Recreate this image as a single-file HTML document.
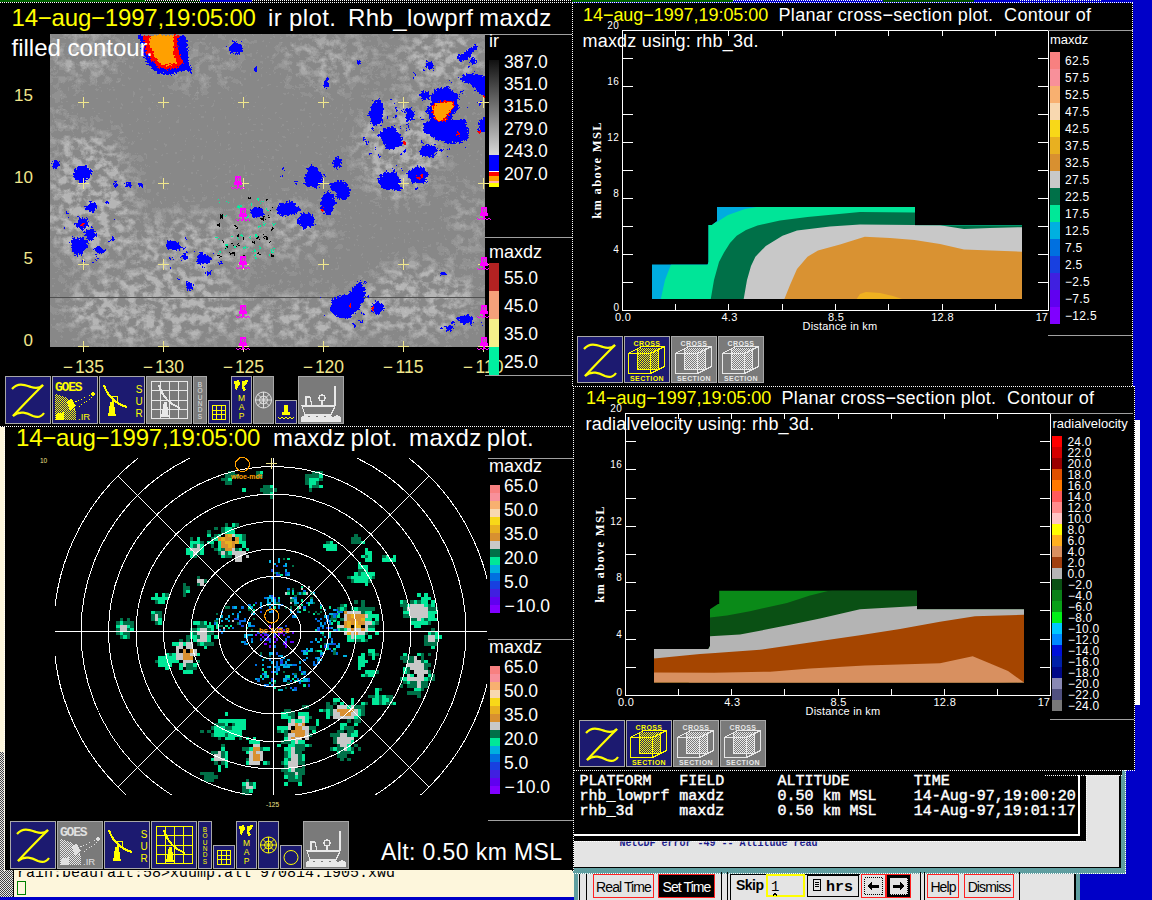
<!DOCTYPE html>
<html><head><meta charset="utf-8"><style>
html,body{margin:0;padding:0;background:#0000c8;overflow:hidden;width:1152px;height:900px}
svg{display:block}
text{white-space:pre}
</style></head><body>
<svg width="1152" height="900" viewBox="0 0 1152 900" shape-rendering="crispEdges">
<rect x="0" y="0" width="1152" height="900" fill="#0000c8" />
<rect x="0" y="0" width="573" height="427" fill="#000" />
<rect x="0" y="0" width="145" height="2" fill="#006400" />
<rect x="200" y="0" width="52" height="2" fill="#0000d0" />
<line x1="145" y1="0.5" x2="200" y2="0.5" stroke="#fff" stroke-width="1" stroke-dasharray="1 1"/>
<line x1="145" y1="1.5" x2="200" y2="1.5" stroke="#006400" stroke-width="1" stroke-dasharray="1 1"/>
<line x1="252" y1="0.5" x2="571" y2="0.5" stroke="#fff" stroke-width="1" stroke-dasharray="1 1"/>
<rect x="572" y="0" width="161" height="2" fill="#006400" />
<line x1="733" y1="0.5" x2="883" y2="0.5" stroke="#fff" stroke-width="1" stroke-dasharray="1 1"/>
<rect x="883" y="0" width="91" height="2" fill="#005000" />
<rect x="974" y="0" width="46" height="2" fill="#0000d0" />
<line x1="1020" y1="0.5" x2="1101" y2="0.5" stroke="#fff" stroke-width="1" stroke-dasharray="1 1"/>
<line x1="0" y1="2.5" x2="1133" y2="2.5" stroke="#fff" stroke-width="1" stroke-dasharray="1 1"/>
<rect x="573" y="3" width="560" height="383" fill="#000" />
<line x1="572.5" y1="3" x2="572.5" y2="426" stroke="#fff" stroke-width="1" stroke-dasharray="1 1"/>
<line x1="1132.5" y1="3" x2="1132.5" y2="386" stroke="#fff" stroke-width="1" stroke-dasharray="1 1"/>
<rect x="574" y="386" width="561" height="384" fill="#000" />
<line x1="573" y1="386.5" x2="1134" y2="386.5" stroke="#fff" stroke-width="1" stroke-dasharray="1 1"/>
<line x1="573.5" y1="386" x2="573.5" y2="770" stroke="#fff" stroke-width="1" stroke-dasharray="1 1"/>
<line x1="1134.5" y1="386" x2="1134.5" y2="770" stroke="#fff" stroke-width="1" stroke-dasharray="1 1"/>
<rect x="1135" y="420" width="5" height="285" fill="#fff" />
<rect x="5" y="427" width="568" height="444" fill="#000" />
<line x1="0" y1="426.5" x2="573" y2="426.5" stroke="#fff" stroke-width="1" stroke-dasharray="1 1"/>
<line x1="572.5" y1="426" x2="572.5" y2="870" stroke="#fff" stroke-width="1" stroke-dasharray="1 1"/>
<rect x="0" y="427" width="5" height="444" fill="#fdf6dc" />
<rect x="0" y="870" width="574" height="27" fill="#fdf6dc" />
<rect x="0" y="870" width="13" height="27" fill="#9a9a9a" />
<line x1="13.5" y1="870" x2="13.5" y2="897" stroke="#000" stroke-width="1" />
<rect x="0" y="897" width="574" height="3" fill="#0000c8" />
<rect x="573" y="770" width="553" height="104" fill="#5f9ea0" />
<rect x="573" y="770" width="548" height="98" fill="#000" />
<rect x="574" y="770" width="545" height="97" fill="#e4e4e4" />
<rect x="574" y="770" width="512" height="71" fill="#000" />
<line x1="574" y1="835" x2="1080" y2="835" stroke="#fff" stroke-width="2" />
<line x1="1079" y1="770" x2="1079" y2="836" stroke="#fff" stroke-width="2" />
<rect x="1045" y="770" width="77" height="5" fill="#000" />
<line x1="1045" y1="775.5" x2="1122" y2="775.5" stroke="#fff" stroke-width="1" stroke-dasharray="1 1"/>
<line x1="574" y1="770.5" x2="1135" y2="770.5" stroke="#fff" stroke-width="1" stroke-dasharray="1 1"/>
<line x1="1086.5" y1="775" x2="1086.5" y2="841" stroke="#fff" stroke-width="1" stroke-dasharray="1 1"/>
<line x1="574" y1="841.5" x2="1086" y2="841.5" stroke="#fff" stroke-width="1" stroke-dasharray="1 1"/>
<line x1="1125.5" y1="770" x2="1125.5" y2="873" stroke="#fff" stroke-width="1" stroke-dasharray="1 1"/>
<line x1="573" y1="873.5" x2="1126" y2="873.5" stroke="#fff" stroke-width="1" stroke-dasharray="1 1"/>
<rect x="574" y="874" width="506" height="26" fill="#e4e4e4" />
<rect x="574" y="874" width="4" height="26" fill="#5f9ea0" />
<line x1="579.5" y1="874" x2="579.5" y2="900" stroke="#000" stroke-width="1" />
<rect x="1074" y="874" width="2" height="26" fill="#000" />
<rect x="1076" y="874" width="4" height="26" fill="#5f9ea0" />
<rect x="572" y="386" width="2" height="485" fill="#000" />
<line x1="573.5" y1="386" x2="573.5" y2="871" stroke="#fff" stroke-width="1" stroke-dasharray="1 1"/>
<text x="11.5" y="26" font-family="Liberation Sans" font-size="24" font-weight="normal" fill="#ffff00" letter-spacing="-0.2">14−aug−1997,19:05:00</text>
<text x="268" y="26" font-family="Liberation Sans" font-size="24" font-weight="normal" fill="#fff" letter-spacing="0.4">ir</text>
<text x="289" y="26" font-family="Liberation Sans" font-size="24" font-weight="normal" fill="#fff" letter-spacing="0.4">plot.</text>
<text x="348" y="26" font-family="Liberation Sans" font-size="24" font-weight="normal" fill="#fff" letter-spacing="0.4">Rhb_lowprf</text>
<text x="479" y="26" font-family="Liberation Sans" font-size="24" font-weight="normal" fill="#fff" letter-spacing="0.4">maxdz</text>
<defs>
<filter id="cloud" x="50" y="34" width="435" height="313" filterUnits="userSpaceOnUse">
<feGaussianBlur in="SourceGraphic" stdDeviation="14" result="blur"/>
<feTurbulence type="fractalNoise" baseFrequency="0.11 0.13" numOctaves="4" seed="23" result="noise"/>
<feColorMatrix in="noise" type="matrix" values="0 0 0 0 1  0 0 0 0 1  0 0 0 0 1  2.6 0 0 0 -0.95" result="na"/>
<feComposite in="na" in2="blur" operator="arithmetic" k1="1.5" k2="0" k3="0" k4="0" result="m"/>
<feComponentTransfer in="m"><feFuncA type="discrete" tableValues="0 0.08 0.14 0.2 0.26 0.32 0.38"/></feComponentTransfer>
</filter>
<filter id="fine" x="50" y="34" width="435" height="313" filterUnits="userSpaceOnUse">
<feTurbulence type="fractalNoise" baseFrequency="0.25" numOctaves="2" seed="4" result="n"/>
<feColorMatrix in="n" type="matrix" values="0 0 0 0 1  0 0 0 0 1  0 0 0 0 1  1.2 0 0 0 -0.52" />
<feComponentTransfer><feFuncA type="discrete" tableValues="0 0.08 0.14"/></feComponentTransfer>
</filter>
</defs>
<rect x="50" y="34" width="435" height="313" fill="#888888" />
<g filter="url(#cloud)">
<ellipse cx="85" cy="55" rx="40" ry="25" fill="#fff" fill-opacity="0.7"/>
<ellipse cx="200" cy="70" rx="40" ry="20" fill="#fff" fill-opacity="0.5"/>
<ellipse cx="330" cy="60" rx="50" ry="30" fill="#fff" fill-opacity="0.6"/>
<ellipse cx="440" cy="60" rx="45" ry="30" fill="#fff" fill-opacity="0.9"/>
<ellipse cx="400" cy="150" rx="45" ry="50" fill="#fff" fill-opacity="0.9"/>
<ellipse cx="90" cy="200" rx="45" ry="70" fill="#fff" fill-opacity="0.9"/>
<ellipse cx="190" cy="250" rx="60" ry="40" fill="#fff" fill-opacity="0.7"/>
<ellipse cx="290" cy="230" rx="50" ry="30" fill="#fff" fill-opacity="0.6"/>
<ellipse cx="150" cy="310" rx="90" ry="35" fill="#fff" fill-opacity="0.9"/>
<ellipse cx="300" cy="320" rx="80" ry="25" fill="#fff" fill-opacity="0.8"/>
<ellipse cx="420" cy="300" rx="60" ry="40" fill="#fff" fill-opacity="0.8"/>
<ellipse cx="470" cy="220" rx="20" ry="40" fill="#fff" fill-opacity="0.5"/>
<ellipse cx="240" cy="40" rx="20" ry="10" fill="#fff" fill-opacity="0.4"/>
<ellipse cx="60" cy="120" rx="15" ry="30" fill="#fff" fill-opacity="0.4"/>
</g>
<rect x="50" y="34" width="435" height="313" fill="#fff" filter="url(#fine)"/>
<line x1="50" y1="297.5" x2="485" y2="297.5" stroke="#505050" stroke-width="1" />
<filter id="rag" x="-5%" y="-5%" width="110%" height="110%"><feTurbulence type="turbulence" baseFrequency="0.35" numOctaves="2" seed="9" result="t"/><feDisplacementMap in="SourceGraphic" in2="t" scale="5" xChannelSelector="R" yChannelSelector="G"/></filter>
<g clip-path="url(#irclip)"><g filter="url(#rag)">
<clipPath id="irclip"><rect x="50" y="34" width="435" height="313"/></clipPath>
<polygon points="136.9,34.0 183.7,34.0 187.5,45.5 186.6,56.9 191.3,72.2 183.7,68.4 168.4,74.1 157.0,72.2 147.4,64.6 141.7,51.2" fill="#0000ff" />
<polygon points="141.7,34.0 177.0,34.0 176.0,45.5 181.8,62.6 172.2,68.4 157.0,66.5 145.5,53.1" fill="#ff0000" />
<polygon points="149.3,34.0 172.2,34.0 172.2,53.1 176.0,62.6 166.5,64.6 157.0,60.7 149.3,45.5" fill="#ffa000" />
<polygon points="430.2,92.8 437.2,87.2 447.0,85.8 451.2,90.0 458.2,92.8 455.4,99.8 458.2,106.8 452.6,112.4 449.8,118.0 463.8,118.0 466.6,126.4 466.6,137.6 461.0,141.8 447.0,141.8 433.0,137.6 423.2,130.6 423.2,122.2 428.8,118.0 424.6,109.6 430.2,101.2" fill="#0000ff" />
<polygon points="458.2,77.4 466.6,71.8 475.0,73.2 486.0,76.0 486.0,95.6 477.8,92.8 472.2,85.8 463.8,81.6" fill="#0000ff" />
<polygon points="455.4,55.0 463.8,50.8 473.6,43.8 476.4,45.2 470.8,52.2 466.6,57.8 458.2,60.6" fill="#0000ff" />
<polygon points="477.8,118.0 486.0,116.6 486.0,132.0 477.8,130.6" fill="#0000ff" />
<polygon points="358.6,278.6 364.3,292.0 362.4,299.6 356.7,309.1 349.0,316.8 337.6,316.8 329.0,311.0 330.0,299.6 337.6,294.8 349.0,292.0 352.9,284.3" fill="#0000ff" />
<polygon points="242.2,47.0 241.2,49.3 240.2,51.9 236.9,53.3 233.4,52.2 229.7,52.0 228.6,49.3 226.9,47.0 229.2,44.9 230.8,43.1 232.8,39.9 236.5,42.2 240.7,41.7 240.9,44.9" fill="#0000ff" shape-rendering="crispEdges"/>
<polygon points="257.2,67.5 257.1,68.8 256.0,69.0 255.4,69.5 254.5,70.1 253.5,69.8 253.2,68.6 252.9,67.5 253.0,66.3 253.8,65.6 254.5,64.9 255.4,65.2 256.3,65.4 256.6,66.6" fill="#0000ff" shape-rendering="crispEdges"/>
<polygon points="58.6,163.5 57.9,165.6 56.2,166.3 55.3,168.1 53.8,167.6 52.1,167.3 50.9,165.7 50.9,163.5 50.9,161.2 52.7,160.5 53.6,158.7 55.2,159.6 56.8,159.7 57.8,161.4" fill="#0000ff" shape-rendering="crispEdges"/>
<polygon points="90.8,172.0 87.7,175.2 86.2,178.5 83.2,181.6 78.6,182.4 75.8,178.5 72.2,176.3 72.1,172.0 73.9,168.6 76.0,165.7 79.1,163.7 82.8,163.9 85.6,166.2 88.9,168.2" fill="#0000ff" shape-rendering="crispEdges"/>
<polygon points="117.3,183.5 116.6,184.5 116.0,185.1 115.5,186.3 114.6,185.5 113.8,185.5 113.4,184.5 113.0,183.5 113.4,182.5 113.6,181.4 114.6,181.1 115.4,181.3 116.4,181.3 116.5,182.6" fill="#0000ff" shape-rendering="crispEdges"/>
<polygon points="130.2,183.5 130.9,184.7 129.9,185.8 127.7,185.5 126.0,186.4 124.5,185.5 124.1,184.4 123.6,183.5 123.8,182.5 125.0,181.9 126.3,181.5 128.0,180.8 129.7,181.4 130.0,182.6" fill="#0000ff" shape-rendering="crispEdges"/>
<polygon points="143.2,183.5 142.2,184.4 141.7,185.3 140.8,186.4 139.5,185.4 138.2,185.4 136.8,184.8 137.1,183.5 137.4,182.4 137.9,181.3 139.4,181.1 140.5,181.6 141.6,181.8 142.5,182.5" fill="#0000ff" shape-rendering="crispEdges"/>
<polygon points="359.6,61.0 359.8,61.9 358.9,62.4 358.0,62.7 356.9,63.3 356.0,62.5 355.4,61.8 354.5,61.0 355.0,60.0 355.8,59.3 356.9,58.9 358.0,59.2 358.9,59.6 359.3,60.3" fill="#0000ff" shape-rendering="crispEdges"/>
<polygon points="327.5,81.5 327.2,83.1 327.1,85.4 325.7,86.2 324.2,86.7 323.1,85.2 321.9,83.7 322.6,81.5 322.0,79.3 323.4,78.5 324.3,76.8 325.7,76.6 327.2,77.4 327.2,79.9" fill="#0000ff" shape-rendering="crispEdges"/>
<polygon points="431.7,65.5 431.2,67.2 430.9,69.4 429.2,69.5 427.8,69.5 426.3,69.0 426.0,67.1 425.4,65.5 424.7,63.1 425.9,61.3 427.8,61.5 429.4,60.6 430.2,62.7 431.8,63.4" fill="#0000ff" shape-rendering="crispEdges"/>
<polygon points="429.4,94.0 427.8,95.4 427.6,97.6 425.1,97.8 422.6,98.7 420.9,97.2 419.7,95.7 419.2,94.0 419.9,92.4 420.3,90.3 422.8,89.7 424.9,90.7 426.9,91.1 428.0,92.5" fill="#0000ff" shape-rendering="crispEdges"/>
<polygon points="475.1,59.5 474.6,61.0 474.2,62.7 472.8,63.4 471.3,63.3 470.1,62.3 468.9,61.2 468.6,59.5 468.9,57.7 470.1,56.7 471.3,55.9 472.5,56.8 473.7,57.1 474.2,58.3" fill="#0000ff" shape-rendering="crispEdges"/>
<polygon points="432.9,65.0 431.9,66.1 431.8,67.7 430.0,68.1 428.2,67.5 426.6,67.3 426.1,66.0 425.7,65.0 425.3,63.7 426.8,62.9 428.0,61.9 430.1,61.5 431.5,62.7 431.8,64.0" fill="#0000ff" shape-rendering="crispEdges"/>
<polygon points="437.5,149.5 434.9,151.3 434.1,153.6 430.7,154.2 427.7,153.2 424.4,153.2 422.6,151.5 422.0,149.5 423.5,147.8 424.7,146.0 427.5,145.3 430.3,145.9 433.3,146.0 435.6,147.5" fill="#0000ff" shape-rendering="crispEdges"/>
<polygon points="413.3,112.5 412.0,114.5 411.4,116.6 410.1,119.0 408.2,117.3 406.7,116.5 404.8,115.3 404.9,112.5 405.8,110.4 407.0,109.1 408.3,108.2 409.8,107.9 411.1,108.8 412.7,110.0" fill="#0000ff" shape-rendering="crispEdges"/>
<polygon points="381.3,111.5 381.6,118.1 380.1,124.4 376.7,122.9 374.1,124.7 371.3,123.4 368.8,118.7 367.9,111.5 369.8,105.4 371.8,101.1 374.2,99.1 377.1,96.1 379.7,99.9 382.6,103.9" fill="#0000ff" shape-rendering="crispEdges"/>
<polygon points="401.8,138.0 400.6,144.1 395.5,146.2 391.9,148.2 388.1,148.0 384.5,146.3 382.8,142.1 379.2,138.0 379.2,131.7 382.9,127.3 387.7,126.0 392.6,124.3 395.2,130.2 399.1,132.7" fill="#0000ff" shape-rendering="crispEdges"/>
<polygon points="412.1,112.5 411.6,114.9 410.2,116.3 409.0,118.4 406.9,118.8 405.1,117.4 404.3,115.0 404.8,112.5 404.0,109.9 405.3,107.9 407.1,107.0 409.0,106.3 410.7,107.8 410.8,110.6" fill="#0000ff" shape-rendering="crispEdges"/>
<polygon points="435.1,150.0 434.1,152.3 433.7,155.6 428.9,155.6 425.2,155.3 420.8,155.2 418.3,152.8 418.2,150.0 420.1,147.8 420.2,144.3 424.6,142.9 429.1,143.8 433.6,144.5 434.3,147.6" fill="#0000ff" shape-rendering="crispEdges"/>
<polygon points="427.5,173.5 425.5,177.4 422.8,180.4 419.1,182.3 415.1,181.5 409.9,181.9 408.5,177.4 404.9,173.5 408.0,169.4 411.7,167.2 414.9,164.7 418.8,166.1 423.7,165.5 425.5,169.6" fill="#0000ff" shape-rendering="crispEdges"/>
<polygon points="399.1,179.5 398.0,184.1 394.9,187.5 390.4,188.0 386.3,189.2 381.5,188.3 378.8,184.2 376.6,179.5 378.4,174.6 382.6,172.0 386.4,170.4 390.4,171.0 395.8,170.4 397.4,175.2" fill="#0000ff" shape-rendering="crispEdges"/>
<polygon points="321.7,175.5 320.7,181.5 316.7,183.9 313.6,185.7 310.4,185.5 306.5,185.4 303.7,181.3 303.2,175.5 305.6,171.0 306.8,166.2 310.2,164.4 313.8,163.9 316.5,167.4 318.6,170.9" fill="#0000ff" shape-rendering="crispEdges"/>
<polygon points="347.3,185.5 345.9,188.2 343.2,190.2 340.1,192.2 336.3,190.8 333.0,190.1 329.1,188.6 328.6,185.5 328.3,182.1 332.5,180.5 336.1,179.6 339.8,180.0 344.1,180.0 345.5,182.9" fill="#0000ff" shape-rendering="crispEdges"/>
<polygon points="340.5,161.5 339.8,164.4 339.0,167.5 336.8,167.1 335.2,167.1 333.1,167.3 332.0,164.6 331.6,161.5 332.0,158.4 333.8,157.0 335.2,155.6 336.8,155.6 338.4,156.7 340.2,158.2" fill="#0000ff" shape-rendering="crispEdges"/>
<polygon points="95.3,206.0 94.6,207.8 93.1,209.3 91.4,211.1 88.7,210.9 86.8,209.3 83.7,208.5 84.6,206.0 85.2,204.1 87.0,202.8 88.4,200.1 91.4,200.8 94.4,201.4 95.5,203.8" fill="#0000ff" shape-rendering="crispEdges"/>
<polygon points="87.8,222.0 87.5,225.1 83.9,225.7 82.6,229.1 79.5,228.4 77.5,226.3 74.8,225.0 74.2,222.0 76.5,219.8 77.3,217.4 79.9,217.2 82.3,216.4 85.2,216.8 86.5,219.4" fill="#0000ff" shape-rendering="crispEdges"/>
<polygon points="95.1,232.5 95.4,235.3 92.9,237.0 90.6,238.8 87.5,238.6 85.0,237.1 84.4,234.5 83.7,232.5 84.1,230.4 85.1,228.1 87.9,228.2 90.4,226.8 92.4,228.6 94.1,230.3" fill="#0000ff" shape-rendering="crispEdges"/>
<polygon points="87.3,244.5 85.1,247.7 82.8,250.1 80.3,253.9 76.0,252.9 72.5,251.0 69.6,248.3 69.8,244.5 69.4,240.6 71.2,236.4 76.3,237.3 80.1,235.9 83.6,237.9 87.0,240.4" fill="#0000ff" shape-rendering="crispEdges"/>
<polygon points="101.0,248.5 101.9,250.2 100.2,251.2 98.6,252.4 96.6,251.7 95.0,251.0 94.3,249.7 92.5,248.5 94.0,247.2 94.9,245.9 96.5,245.0 98.6,244.6 100.5,245.6 101.1,247.2" fill="#0000ff" shape-rendering="crispEdges"/>
<polygon points="180.1,244.5 179.6,246.5 177.9,248.5 174.4,249.5 171.2,248.0 167.1,248.6 164.7,246.8 165.0,244.5 164.9,242.3 167.0,240.3 170.7,239.8 174.1,240.2 176.7,241.3 178.3,242.8" fill="#0000ff" shape-rendering="crispEdges"/>
<polygon points="186.3,255.5 186.0,256.7 186.0,258.7 184.2,258.7 182.7,258.9 181.5,258.0 180.1,257.1 179.5,255.5 180.6,254.1 181.4,252.9 182.7,251.9 184.2,252.3 186.0,252.3 186.6,254.0" fill="#0000ff" shape-rendering="crispEdges"/>
<polygon points="210.8,257.5 208.8,259.4 208.2,262.0 204.5,261.9 201.4,262.3 197.5,262.2 195.2,260.1 195.9,257.5 195.8,255.1 197.9,253.1 201.5,252.8 204.4,253.2 207.1,253.9 209.1,255.5" fill="#0000ff" shape-rendering="crispEdges"/>
<polygon points="210.1,272.0 210.3,273.6 209.1,274.7 207.7,274.9 206.3,274.9 205.2,274.2 204.6,273.2 204.4,272.0 204.6,270.9 205.4,270.0 206.4,269.5 207.6,269.5 208.7,269.8 209.9,270.6" fill="#0000ff" shape-rendering="crispEdges"/>
<polygon points="191.2,285.0 191.4,286.6 190.3,287.9 189.0,289.2 186.9,289.7 185.5,288.1 184.8,286.5 184.8,285.0 184.8,283.5 185.1,281.4 187.1,281.3 189.0,280.8 190.6,281.7 192.1,283.0" fill="#0000ff" shape-rendering="crispEdges"/>
<polygon points="263.3,211.5 262.6,213.9 259.5,215.0 257.1,216.4 253.9,216.4 251.4,215.1 250.3,213.2 249.2,211.5 249.2,209.4 250.8,207.4 253.8,206.3 257.2,206.3 260.0,207.6 261.8,209.4" fill="#0000ff" shape-rendering="crispEdges"/>
<polygon points="300.5,207.5 297.8,210.6 293.7,212.6 288.9,213.5 283.6,214.7 277.9,213.6 276.4,210.3 275.3,207.5 276.7,204.8 278.6,201.9 284.2,201.9 289.6,199.9 293.7,202.4 294.7,205.3" fill="#0000ff" shape-rendering="crispEdges"/>
<polygon points="313.6,218.5 313.1,222.7 310.7,226.3 306.1,225.7 302.2,228.4 299.5,224.8 296.2,222.5 296.4,218.5 297.9,215.3 299.5,212.2 303.0,211.8 306.0,211.9 309.9,211.7 311.4,215.2" fill="#0000ff" shape-rendering="crispEdges"/>
<polygon points="334.8,201.0 333.2,205.4 331.2,208.4 329.4,214.0 325.6,214.0 322.4,211.3 320.2,206.6 320.1,201.0 320.1,195.3 323.6,193.2 325.9,189.8 328.9,191.3 331.4,193.2 332.8,196.9" fill="#0000ff" shape-rendering="crispEdges"/>
<polygon points="347.5,192.0 348.4,195.1 345.5,196.7 343.4,199.6 339.9,198.4 337.3,197.0 334.3,195.2 334.8,192.0 333.7,188.5 335.9,185.5 339.7,184.6 343.1,185.3 345.5,187.3 349.7,188.3" fill="#0000ff" shape-rendering="crispEdges"/>
<polygon points="402.0,187.5 400.4,188.4 399.5,189.3 397.4,190.0 394.9,189.5 392.8,189.2 390.0,188.7 389.3,187.5 390.0,186.3 391.6,185.2 394.5,184.7 397.6,184.6 399.5,185.7 402.3,186.2" fill="#0000ff" shape-rendering="crispEdges"/>
<polygon points="383.2,306.0 382.3,308.6 380.5,310.6 378.1,312.7 374.9,312.6 372.7,310.4 369.5,309.1 369.7,306.0 370.8,303.5 373.0,302.0 375.0,299.8 377.8,300.7 380.1,301.8 381.3,303.9" fill="#0000ff" shape-rendering="crispEdges"/>
<polygon points="471.7,318.0 472.4,320.5 469.1,322.0 465.4,321.8 461.8,323.9 459.9,321.2 456.8,320.2 456.2,318.0 457.0,315.9 458.2,313.5 462.6,314.1 465.6,313.7 468.1,314.8 470.9,315.9" fill="#0000ff" shape-rendering="crispEdges"/>
<polygon points="451.7,327.0 451.2,328.2 451.0,329.9 448.7,329.5 447.3,329.3 445.2,329.6 444.4,328.3 443.8,327.0 444.1,325.6 445.5,324.6 446.9,323.5 448.9,323.9 451.0,324.2 451.9,325.6" fill="#0000ff" shape-rendering="crispEdges"/>
<polygon points="445.3,272.5 445.4,273.1 444.4,273.6 442.8,273.8 441.2,273.9 439.2,273.8 438.3,273.2 437.7,272.5 438.1,271.8 439.9,271.5 441.0,270.8 442.9,271.0 444.2,271.5 446.4,271.7" fill="#0000ff" shape-rendering="crispEdges"/>
<rect x="449" y="80" width="2" height="2" fill="#0000ff" />
<rect x="447" y="93" width="3" height="2" fill="#0000ff" />
<rect x="464" y="145" width="1" height="2" fill="#0000ff" />
<rect x="488" y="120" width="2" height="2" fill="#0000ff" />
<rect x="394" y="108" width="2" height="2" fill="#0000ff" />
<rect x="434" y="125" width="2" height="3" fill="#0000ff" />
<rect x="446" y="133" width="1" height="2" fill="#0000ff" />
<rect x="425" y="61" width="1" height="1" fill="#0000ff" />
<rect x="466" y="64" width="2" height="2" fill="#0000ff" />
<rect x="449" y="96" width="3" height="1" fill="#0000ff" />
<rect x="478" y="86" width="1" height="2" fill="#0000ff" />
<rect x="399" y="126" width="1" height="2" fill="#0000ff" />
<rect x="451" y="105" width="3" height="2" fill="#0000ff" />
<rect x="447" y="147" width="2" height="3" fill="#0000ff" />
<rect x="489" y="114" width="1" height="3" fill="#0000ff" />
<rect x="411" y="75" width="3" height="1" fill="#0000ff" />
<rect x="439" y="149" width="3" height="1" fill="#0000ff" />
<rect x="413" y="70" width="1" height="2" fill="#0000ff" />
<rect x="435" y="126" width="3" height="2" fill="#0000ff" />
<rect x="478" y="88" width="1" height="1" fill="#0000ff" />
<rect x="445" y="90" width="1" height="1" fill="#0000ff" />
<rect x="443" y="155" width="3" height="1" fill="#0000ff" />
<rect x="472" y="69" width="1" height="2" fill="#0000ff" />
<rect x="442" y="135" width="1" height="2" fill="#0000ff" />
<rect x="444" y="117" width="2" height="3" fill="#0000ff" />
<rect x="477" y="101" width="3" height="3" fill="#0000ff" />
<rect x="401" y="108" width="1" height="3" fill="#0000ff" />
<rect x="420" y="89" width="2" height="2" fill="#0000ff" />
<rect x="419" y="117" width="3" height="1" fill="#0000ff" />
<rect x="482" y="120" width="1" height="1" fill="#0000ff" />
<rect x="431" y="95" width="2" height="1" fill="#0000ff" />
<rect x="444" y="88" width="3" height="2" fill="#0000ff" />
<rect x="406" y="119" width="3" height="2" fill="#0000ff" />
<rect x="469" y="79" width="2" height="2" fill="#0000ff" />
<rect x="471" y="71" width="2" height="2" fill="#0000ff" />
<rect x="478" y="85" width="2" height="3" fill="#0000ff" />
<rect x="484" y="105" width="3" height="3" fill="#0000ff" />
<rect x="465" y="105" width="2" height="1" fill="#0000ff" />
<rect x="438" y="127" width="2" height="2" fill="#0000ff" />
<rect x="478" y="90" width="2" height="1" fill="#0000ff" />
<rect x="394" y="101" width="1" height="2" fill="#0000ff" />
<rect x="437" y="132" width="2" height="1" fill="#0000ff" />
<rect x="421" y="68" width="3" height="1" fill="#0000ff" />
<rect x="460" y="89" width="2" height="3" fill="#0000ff" />
<rect x="414" y="72" width="1" height="1" fill="#0000ff" />
<rect x="364" y="140" width="3" height="3" fill="#0000ff" />
<rect x="395" y="105" width="1" height="3" fill="#0000ff" />
<rect x="395" y="130" width="2" height="1" fill="#0000ff" />
<rect x="411" y="117" width="2" height="2" fill="#0000ff" />
<rect x="372" y="106" width="1" height="1" fill="#0000ff" />
<rect x="419" y="140" width="3" height="1" fill="#0000ff" />
<rect x="399" y="152" width="2" height="2" fill="#0000ff" />
<rect x="377" y="133" width="3" height="3" fill="#0000ff" />
<rect x="388" y="97" width="2" height="3" fill="#0000ff" />
<rect x="385" y="115" width="2" height="2" fill="#0000ff" />
<rect x="377" y="154" width="2" height="2" fill="#0000ff" />
<rect x="393" y="114" width="2" height="2" fill="#0000ff" />
<rect x="406" y="122" width="2" height="2" fill="#0000ff" />
<rect x="370" y="126" width="2" height="3" fill="#0000ff" />
<rect x="392" y="164" width="3" height="1" fill="#0000ff" />
<rect x="388" y="144" width="1" height="2" fill="#0000ff" />
<rect x="373" y="119" width="3" height="3" fill="#0000ff" />
<rect x="409" y="108" width="3" height="2" fill="#0000ff" />
<rect x="362" y="136" width="2" height="3" fill="#0000ff" />
<rect x="373" y="147" width="2" height="1" fill="#0000ff" />
<rect x="406" y="126" width="2" height="3" fill="#0000ff" />
<rect x="370" y="128" width="1" height="1" fill="#0000ff" />
<rect x="368" y="152" width="2" height="2" fill="#0000ff" />
<rect x="367" y="111" width="2" height="2" fill="#0000ff" />
<rect x="402" y="149" width="2" height="2" fill="#0000ff" />
<rect x="107" y="239" width="2" height="2" fill="#0000ff" />
<rect x="112" y="218" width="2" height="2" fill="#0000ff" />
<rect x="94" y="253" width="1" height="3" fill="#0000ff" />
<rect x="67" y="215" width="3" height="2" fill="#0000ff" />
<rect x="92" y="260" width="1" height="3" fill="#0000ff" />
<rect x="108" y="255" width="1" height="1" fill="#0000ff" />
<rect x="110" y="236" width="3" height="3" fill="#0000ff" />
<rect x="81" y="259" width="2" height="2" fill="#0000ff" />
<rect x="62" y="226" width="1" height="2" fill="#0000ff" />
<rect x="95" y="257" width="2" height="2" fill="#0000ff" />
<rect x="75" y="248" width="1" height="2" fill="#0000ff" />
<rect x="72" y="250" width="3" height="2" fill="#0000ff" />
<rect x="101" y="248" width="3" height="3" fill="#0000ff" />
<rect x="77" y="223" width="2" height="1" fill="#0000ff" />
<rect x="76" y="215" width="2" height="2" fill="#0000ff" />
<rect x="75" y="254" width="2" height="2" fill="#0000ff" />
<rect x="89" y="226" width="1" height="2" fill="#0000ff" />
<rect x="88" y="199" width="1" height="3" fill="#0000ff" />
<rect x="104" y="200" width="3" height="2" fill="#0000ff" />
<rect x="65" y="210" width="2" height="2" fill="#0000ff" />
<rect x="176" y="276" width="1" height="2" fill="#0000ff" />
<rect x="167" y="256" width="2" height="3" fill="#0000ff" />
<rect x="171" y="257" width="2" height="1" fill="#0000ff" />
<rect x="193" y="250" width="1" height="2" fill="#0000ff" />
<rect x="210" y="251" width="3" height="1" fill="#0000ff" />
<rect x="199" y="241" width="1" height="3" fill="#0000ff" />
<rect x="218" y="261" width="3" height="2" fill="#0000ff" />
<rect x="200" y="261" width="2" height="2" fill="#0000ff" />
<rect x="199" y="251" width="2" height="2" fill="#0000ff" />
<rect x="206" y="256" width="3" height="2" fill="#0000ff" />
<rect x="168" y="266" width="2" height="1" fill="#0000ff" />
<rect x="163" y="247" width="3" height="2" fill="#0000ff" />
<rect x="184" y="235" width="1" height="3" fill="#0000ff" />
<rect x="181" y="246" width="3" height="2" fill="#0000ff" />
<rect x="202" y="265" width="1" height="2" fill="#0000ff" />
<rect x="366" y="294" width="3" height="2" fill="#0000ff" />
<rect x="318" y="294" width="1" height="2" fill="#0000ff" />
<rect x="347" y="297" width="1" height="2" fill="#0000ff" />
<rect x="345" y="308" width="2" height="2" fill="#0000ff" />
<rect x="352" y="323" width="2" height="3" fill="#0000ff" />
<rect x="363" y="280" width="2" height="3" fill="#0000ff" />
<rect x="323" y="313" width="1" height="2" fill="#0000ff" />
<rect x="358" y="319" width="3" height="3" fill="#0000ff" />
<rect x="373" y="312" width="2" height="2" fill="#0000ff" />
<rect x="361" y="312" width="2" height="1" fill="#0000ff" />
<rect x="340" y="299" width="3" height="2" fill="#0000ff" />
<rect x="338" y="306" width="2" height="3" fill="#0000ff" />
<rect x="361" y="286" width="3" height="3" fill="#0000ff" />
<rect x="330" y="308" width="1" height="1" fill="#0000ff" />
<rect x="351" y="306" width="1" height="2" fill="#0000ff" />
<rect x="463" y="316" width="3" height="2" fill="#0000ff" />
<rect x="467" y="313" width="1" height="2" fill="#0000ff" />
<rect x="439" y="326" width="2" height="2" fill="#0000ff" />
<rect x="480" y="322" width="2" height="2" fill="#0000ff" />
<rect x="470" y="323" width="1" height="3" fill="#0000ff" />
<rect x="451" y="320" width="2" height="3" fill="#0000ff" />
<rect x="482" y="314" width="1" height="3" fill="#0000ff" />
<rect x="466" y="314" width="2" height="2" fill="#0000ff" />
<rect x="423" y="181" width="3" height="1" fill="#0000ff" />
<rect x="382" y="185" width="3" height="2" fill="#0000ff" />
<rect x="390" y="174" width="1" height="1" fill="#0000ff" />
<rect x="377" y="177" width="3" height="2" fill="#0000ff" />
<rect x="410" y="176" width="2" height="3" fill="#0000ff" />
<rect x="391" y="168" width="2" height="3" fill="#0000ff" />
<rect x="401" y="167" width="1" height="3" fill="#0000ff" />
<rect x="418" y="174" width="3" height="3" fill="#0000ff" />
<rect x="407" y="191" width="1" height="1" fill="#0000ff" />
<rect x="414" y="186" width="2" height="2" fill="#0000ff" />
<rect x="294" y="181" width="2" height="2" fill="#0000ff" />
<rect x="322" y="173" width="2" height="2" fill="#0000ff" />
<rect x="281" y="166" width="2" height="3" fill="#0000ff" />
<rect x="310" y="182" width="3" height="2" fill="#0000ff" />
<rect x="319" y="178" width="1" height="3" fill="#0000ff" />
<rect x="314" y="185" width="2" height="2" fill="#0000ff" />
<rect x="317" y="186" width="1" height="2" fill="#0000ff" />
<rect x="279" y="174" width="2" height="2" fill="#0000ff" />
<rect x="79.5" y="221.5" width="3" height="3" fill="#ff0000" />
<rect x="418.5" y="172.5" width="3" height="3" fill="#ff0000" />
<rect x="415.5" y="174.5" width="3" height="3" fill="#ff0000" />
<rect x="401.5" y="139.5" width="3" height="3" fill="#ff0000" />
<rect x="455.5" y="130.5" width="3" height="3" fill="#ff0000" />
<rect x="318.5" y="206.5" width="3" height="3" fill="#ff0000" />
<rect x="346.5" y="302.5" width="3" height="3" fill="#ff0000" />
<rect x="369.5" y="305.5" width="3" height="3" fill="#ff0000" />
<rect x="475.5" y="128.5" width="3" height="3" fill="#ff0000" />
<rect x="481.5" y="94.5" width="3" height="3" fill="#ff0000" />
<polygon points="430.5,104.4 438.6,100.0 452.2,98.8 453.8,104.0 448.0,113.4 445.2,119.5 435.8,120.6 431.3,113.4" fill="#ff0000" />
<polygon points="431.6,105.4 438.6,101.2 451.2,99.8 452.6,104.0 447.0,112.4 444.2,118.0 435.8,119.4 432.3,112.4" fill="#ffa000" />
<rect x="251" y="240" width="1.5" height="1.5" fill="#000" />
<rect x="269" y="239" width="1.5" height="1.5" fill="#000" />
<rect x="217" y="223" width="1.5" height="1.5" fill="#000" />
<rect x="252" y="249" width="2" height="2" fill="#00f0a0" />
<rect x="242" y="210" width="1.5" height="1.5" fill="#000" />
<rect x="248" y="196" width="2" height="2" fill="#00f0a0" />
<rect x="231" y="250" width="1.5" height="1.5" fill="#000" />
<rect x="224" y="243" width="2" height="2" fill="#00f0a0" />
<rect x="250" y="203" width="2" height="2" fill="#00f0a0" />
<rect x="265" y="208" width="2" height="2" fill="#00f0a0" />
<rect x="271" y="247" width="2" height="2" fill="#00f0a0" />
<rect x="270" y="227" width="1.5" height="1.5" fill="#000" />
<rect x="227" y="251" width="1.5" height="1.5" fill="#000" />
<rect x="270" y="249" width="2" height="2" fill="#00f0a0" />
<rect x="236" y="205" width="2" height="2" fill="#00f0a0" />
<rect x="219" y="213" width="1.5" height="1.5" fill="#000" />
<rect x="215" y="236" width="2" height="2" fill="#00f0a0" />
<rect x="233" y="244" width="2" height="2" fill="#00f0a0" />
<rect x="233" y="224" width="1.5" height="1.5" fill="#000" />
<rect x="218" y="254" width="2" height="2" fill="#00f0a0" />
<rect x="258" y="246" width="2" height="2" fill="#00f0a0" />
<rect x="260" y="217" width="1.5" height="1.5" fill="#000" />
<rect x="216" y="198" width="2" height="2" fill="#00f0a0" />
<rect x="269" y="207" width="1.5" height="1.5" fill="#000" />
<rect x="268" y="252" width="2" height="2" fill="#00f0a0" />
<rect x="235" y="226" width="1.5" height="1.5" fill="#000" />
<rect x="221" y="240" width="1.5" height="1.5" fill="#000" />
<rect x="264" y="197" width="1.5" height="1.5" fill="#000" />
<rect x="220" y="215" width="1.5" height="1.5" fill="#000" />
<rect x="267" y="215" width="1.5" height="1.5" fill="#000" />
<rect x="246" y="214" width="2" height="2" fill="#00f0a0" />
<rect x="225" y="200" width="2" height="2" fill="#00f0a0" />
<rect x="254" y="255" width="2" height="2" fill="#00f0a0" />
<rect x="218" y="254" width="1.5" height="1.5" fill="#000" />
<rect x="238" y="209" width="1.5" height="1.5" fill="#000" />
<rect x="262" y="222" width="2" height="2" fill="#00f0a0" />
<rect x="218" y="250" width="2" height="2" fill="#00f0a0" />
<rect x="243" y="245" width="2" height="2" fill="#00f0a0" />
<rect x="257" y="252" width="1.5" height="1.5" fill="#000" />
<rect x="260" y="201" width="2" height="2" fill="#00f0a0" />
<rect x="224" y="246" width="2" height="2" fill="#00f0a0" />
<rect x="241" y="255" width="1.5" height="1.5" fill="#000" />
<rect x="271" y="222" width="2" height="2" fill="#00f0a0" />
<rect x="257" y="224" width="2" height="2" fill="#00f0a0" />
<rect x="238" y="204" width="2" height="2" fill="#00f0a0" />
<rect x="271" y="253" width="1.5" height="1.5" fill="#000" />
<rect x="243" y="215" width="2" height="2" fill="#00f0a0" />
<rect x="231" y="242" width="1.5" height="1.5" fill="#000" />
<rect x="236" y="242" width="1.5" height="1.5" fill="#000" />
<rect x="255" y="235" width="1.5" height="1.5" fill="#000" />
<rect x="236" y="237" width="2" height="2" fill="#00f0a0" />
<rect x="243" y="241" width="1.5" height="1.5" fill="#000" />
<rect x="232" y="252" width="1.5" height="1.5" fill="#000" />
<rect x="248" y="196" width="1.5" height="1.5" fill="#000" />
<rect x="229" y="235" width="2" height="2" fill="#00f0a0" />
<rect x="262" y="234" width="1.5" height="1.5" fill="#000" />
<rect x="235" y="234" width="1.5" height="1.5" fill="#000" />
<rect x="262" y="216" width="1.5" height="1.5" fill="#000" />
<rect x="265" y="236" width="1.5" height="1.5" fill="#000" />
<rect x="270" y="226" width="1.5" height="1.5" fill="#000" />
<rect x="224" y="245" width="1.5" height="1.5" fill="#000" />
<rect x="242" y="236" width="1.5" height="1.5" fill="#000" />
<rect x="257" y="205" width="1.5" height="1.5" fill="#000" />
<rect x="248" y="235" width="2" height="2" fill="#00f0a0" />
<rect x="251" y="241" width="1.5" height="1.5" fill="#000" />
<rect x="256" y="197" width="2" height="2" fill="#00f0a0" />
<rect x="240" y="234" width="2" height="2" fill="#00f0a0" />
<rect x="254" y="233" width="2" height="2" fill="#00f0a0" />
<rect x="242" y="209" width="2" height="2" fill="#00f0a0" />
<rect x="223" y="214" width="2" height="2" fill="#00f0a0" />
</g></g>
<line x1="77.5" y1="102.5" x2="88.5" y2="102.5" stroke="#f0e68c" stroke-width="1" />
<line x1="83.5" y1="96.5" x2="83.5" y2="107.5" stroke="#f0e68c" stroke-width="1" />
<line x1="157.5" y1="102.5" x2="168.5" y2="102.5" stroke="#f0e68c" stroke-width="1" />
<line x1="163.5" y1="96.5" x2="163.5" y2="107.5" stroke="#f0e68c" stroke-width="1" />
<line x1="237.5" y1="102.5" x2="248.5" y2="102.5" stroke="#f0e68c" stroke-width="1" />
<line x1="243.5" y1="96.5" x2="243.5" y2="107.5" stroke="#f0e68c" stroke-width="1" />
<line x1="317.5" y1="102.5" x2="328.5" y2="102.5" stroke="#f0e68c" stroke-width="1" />
<line x1="323.5" y1="96.5" x2="323.5" y2="107.5" stroke="#f0e68c" stroke-width="1" />
<line x1="397.5" y1="102.5" x2="408.5" y2="102.5" stroke="#f0e68c" stroke-width="1" />
<line x1="403.5" y1="96.5" x2="403.5" y2="107.5" stroke="#f0e68c" stroke-width="1" />
<line x1="477.5" y1="102.5" x2="488.5" y2="102.5" stroke="#f0e68c" stroke-width="1" />
<line x1="483.5" y1="96.5" x2="483.5" y2="107.5" stroke="#f0e68c" stroke-width="1" />
<line x1="77.5" y1="183.5" x2="88.5" y2="183.5" stroke="#f0e68c" stroke-width="1" />
<line x1="83.5" y1="177.5" x2="83.5" y2="188.5" stroke="#f0e68c" stroke-width="1" />
<line x1="157.5" y1="183.5" x2="168.5" y2="183.5" stroke="#f0e68c" stroke-width="1" />
<line x1="163.5" y1="177.5" x2="163.5" y2="188.5" stroke="#f0e68c" stroke-width="1" />
<line x1="237.5" y1="183.5" x2="248.5" y2="183.5" stroke="#f0e68c" stroke-width="1" />
<line x1="243.5" y1="177.5" x2="243.5" y2="188.5" stroke="#f0e68c" stroke-width="1" />
<line x1="317.5" y1="183.5" x2="328.5" y2="183.5" stroke="#f0e68c" stroke-width="1" />
<line x1="323.5" y1="177.5" x2="323.5" y2="188.5" stroke="#f0e68c" stroke-width="1" />
<line x1="397.5" y1="183.5" x2="408.5" y2="183.5" stroke="#f0e68c" stroke-width="1" />
<line x1="403.5" y1="177.5" x2="403.5" y2="188.5" stroke="#f0e68c" stroke-width="1" />
<line x1="477.5" y1="183.5" x2="488.5" y2="183.5" stroke="#f0e68c" stroke-width="1" />
<line x1="483.5" y1="177.5" x2="483.5" y2="188.5" stroke="#f0e68c" stroke-width="1" />
<line x1="77.5" y1="264.5" x2="88.5" y2="264.5" stroke="#f0e68c" stroke-width="1" />
<line x1="83.5" y1="258.5" x2="83.5" y2="269.5" stroke="#f0e68c" stroke-width="1" />
<line x1="157.5" y1="264.5" x2="168.5" y2="264.5" stroke="#f0e68c" stroke-width="1" />
<line x1="163.5" y1="258.5" x2="163.5" y2="269.5" stroke="#f0e68c" stroke-width="1" />
<line x1="237.5" y1="264.5" x2="248.5" y2="264.5" stroke="#f0e68c" stroke-width="1" />
<line x1="243.5" y1="258.5" x2="243.5" y2="269.5" stroke="#f0e68c" stroke-width="1" />
<line x1="317.5" y1="264.5" x2="328.5" y2="264.5" stroke="#f0e68c" stroke-width="1" />
<line x1="323.5" y1="258.5" x2="323.5" y2="269.5" stroke="#f0e68c" stroke-width="1" />
<line x1="397.5" y1="264.5" x2="408.5" y2="264.5" stroke="#f0e68c" stroke-width="1" />
<line x1="403.5" y1="258.5" x2="403.5" y2="269.5" stroke="#f0e68c" stroke-width="1" />
<line x1="477.5" y1="264.5" x2="488.5" y2="264.5" stroke="#f0e68c" stroke-width="1" />
<line x1="483.5" y1="258.5" x2="483.5" y2="269.5" stroke="#f0e68c" stroke-width="1" />
<line x1="77.5" y1="346.5" x2="88.5" y2="346.5" stroke="#f0e68c" stroke-width="1" />
<line x1="83.5" y1="340.5" x2="83.5" y2="351.5" stroke="#f0e68c" stroke-width="1" />
<line x1="157.5" y1="346.5" x2="168.5" y2="346.5" stroke="#f0e68c" stroke-width="1" />
<line x1="163.5" y1="340.5" x2="163.5" y2="351.5" stroke="#f0e68c" stroke-width="1" />
<line x1="237.5" y1="346.5" x2="248.5" y2="346.5" stroke="#f0e68c" stroke-width="1" />
<line x1="243.5" y1="340.5" x2="243.5" y2="351.5" stroke="#f0e68c" stroke-width="1" />
<line x1="317.5" y1="346.5" x2="328.5" y2="346.5" stroke="#f0e68c" stroke-width="1" />
<line x1="323.5" y1="340.5" x2="323.5" y2="351.5" stroke="#f0e68c" stroke-width="1" />
<line x1="397.5" y1="346.5" x2="408.5" y2="346.5" stroke="#f0e68c" stroke-width="1" />
<line x1="403.5" y1="340.5" x2="403.5" y2="351.5" stroke="#f0e68c" stroke-width="1" />
<line x1="477.5" y1="346.5" x2="488.5" y2="346.5" stroke="#f0e68c" stroke-width="1" />
<line x1="483.5" y1="340.5" x2="483.5" y2="351.5" stroke="#f0e68c" stroke-width="1" />
<g fill="#ff00ff"><rect x="235" y="176" width="6" height="6"/><rect x="234" y="182" width="8" height="3"/><rect x="237" y="185" width="2" height="3"/><polyline points="231,187 233,189 235,187 237,189 239,187 241,189 243,187 245,189" fill="none" stroke="#ff00ff" stroke-width="1.3"/><rect x="236.5" y="178" width="1" height="3" fill="#8a8a8a"/><rect x="238.5" y="178" width="1" height="3" fill="#8a8a8a"/></g>
<g fill="#ff00ff"><rect x="240" y="208" width="6" height="6"/><rect x="239" y="214" width="8" height="3"/><rect x="242" y="217" width="2" height="3"/><polyline points="236,219 238,221 240,219 242,221 244,219 246,221 248,219 250,221" fill="none" stroke="#ff00ff" stroke-width="1.3"/><rect x="241.5" y="210" width="1" height="3" fill="#8a8a8a"/><rect x="243.5" y="210" width="1" height="3" fill="#8a8a8a"/></g>
<g fill="#ff00ff"><rect x="240" y="256" width="6" height="6"/><rect x="239" y="262" width="8" height="3"/><rect x="242" y="265" width="2" height="3"/><polyline points="236,267 238,269 240,267 242,269 244,267 246,269 248,267 250,269" fill="none" stroke="#ff00ff" stroke-width="1.3"/><rect x="241.5" y="258" width="1" height="3" fill="#8a8a8a"/><rect x="243.5" y="258" width="1" height="3" fill="#8a8a8a"/></g>
<g fill="#ff00ff"><rect x="240" y="305" width="6" height="6"/><rect x="239" y="311" width="8" height="3"/><rect x="242" y="314" width="2" height="3"/><polyline points="236,316 238,318 240,316 242,318 244,316 246,318 248,316 250,318" fill="none" stroke="#ff00ff" stroke-width="1.3"/><rect x="241.5" y="307" width="1" height="3" fill="#8a8a8a"/><rect x="243.5" y="307" width="1" height="3" fill="#8a8a8a"/></g>
<g fill="#ff00ff"><rect x="240" y="337" width="6" height="6"/><rect x="239" y="343" width="8" height="3"/><rect x="242" y="346" width="2" height="3"/><polyline points="236,348 238,350 240,348 242,350 244,348 246,350 248,348 250,350" fill="none" stroke="#ff00ff" stroke-width="1.3"/><rect x="241.5" y="339" width="1" height="3" fill="#8a8a8a"/><rect x="243.5" y="339" width="1" height="3" fill="#8a8a8a"/></g>
<g fill="#ff00ff"><rect x="481" y="207" width="6" height="6"/><rect x="480" y="213" width="8" height="3"/><rect x="483" y="216" width="2" height="3"/><polyline points="477,218 479,220 481,218 483,220 485,218 487,220 489,218 491,220" fill="none" stroke="#ff00ff" stroke-width="1.3"/><rect x="482.5" y="209" width="1" height="3" fill="#8a8a8a"/><rect x="484.5" y="209" width="1" height="3" fill="#8a8a8a"/></g>
<g fill="#ff00ff"><rect x="481" y="257" width="6" height="6"/><rect x="480" y="263" width="8" height="3"/><rect x="483" y="266" width="2" height="3"/><polyline points="477,268 479,270 481,268 483,270 485,268 487,270 489,268 491,270" fill="none" stroke="#ff00ff" stroke-width="1.3"/><rect x="482.5" y="259" width="1" height="3" fill="#8a8a8a"/><rect x="484.5" y="259" width="1" height="3" fill="#8a8a8a"/></g>
<g fill="#ff00ff"><rect x="481" y="305" width="6" height="6"/><rect x="480" y="311" width="8" height="3"/><rect x="483" y="314" width="2" height="3"/><polyline points="477,316 479,318 481,316 483,318 485,316 487,318 489,316 491,318" fill="none" stroke="#ff00ff" stroke-width="1.3"/><rect x="482.5" y="307" width="1" height="3" fill="#8a8a8a"/><rect x="484.5" y="307" width="1" height="3" fill="#8a8a8a"/></g>
<g fill="#ff00ff"><rect x="481" y="337" width="6" height="6"/><rect x="480" y="343" width="8" height="3"/><rect x="483" y="346" width="2" height="3"/><polyline points="477,348 479,350 481,348 483,350 485,348 487,350 489,348 491,350" fill="none" stroke="#ff00ff" stroke-width="1.3"/><rect x="482.5" y="339" width="1" height="3" fill="#8a8a8a"/><rect x="484.5" y="339" width="1" height="3" fill="#8a8a8a"/></g>
<text x="33" y="101" font-family="Liberation Sans" font-size="17" font-weight="normal" fill="#f0e68c" text-anchor="end">15</text>
<text x="33" y="183" font-family="Liberation Sans" font-size="17" font-weight="normal" fill="#f0e68c" text-anchor="end">10</text>
<text x="33" y="264" font-family="Liberation Sans" font-size="17" font-weight="normal" fill="#f0e68c" text-anchor="end">5</text>
<text x="33" y="346" font-family="Liberation Sans" font-size="17" font-weight="normal" fill="#f0e68c" text-anchor="end">0</text>
<text x="63" y="372.5" font-family="Liberation Sans" font-size="17" font-weight="normal" fill="#f0e68c" >−</text>
<text x="89.5" y="373" font-family="Liberation Sans" font-size="17.5" font-weight="normal" fill="#f0e68c" text-anchor="middle">135</text>
<text x="143" y="372.5" font-family="Liberation Sans" font-size="17" font-weight="normal" fill="#f0e68c" >−</text>
<text x="169.5" y="373" font-family="Liberation Sans" font-size="17.5" font-weight="normal" fill="#f0e68c" text-anchor="middle">130</text>
<text x="223" y="372.5" font-family="Liberation Sans" font-size="17" font-weight="normal" fill="#f0e68c" >−</text>
<text x="249.5" y="373" font-family="Liberation Sans" font-size="17.5" font-weight="normal" fill="#f0e68c" text-anchor="middle">125</text>
<text x="303" y="372.5" font-family="Liberation Sans" font-size="17" font-weight="normal" fill="#f0e68c" >−</text>
<text x="329.5" y="373" font-family="Liberation Sans" font-size="17.5" font-weight="normal" fill="#f0e68c" text-anchor="middle">120</text>
<text x="383" y="372.5" font-family="Liberation Sans" font-size="17" font-weight="normal" fill="#f0e68c" >−</text>
<text x="409.5" y="373" font-family="Liberation Sans" font-size="17.5" font-weight="normal" fill="#f0e68c" text-anchor="middle">115</text>
<text x="463" y="372.5" font-family="Liberation Sans" font-size="17" font-weight="normal" fill="#f0e68c" >−</text>
<text x="489.5" y="373" font-family="Liberation Sans" font-size="17.5" font-weight="normal" fill="#f0e68c" text-anchor="middle">110</text>
<text x="11.5" y="56" font-family="Liberation Sans" font-size="24" font-weight="normal" fill="#fff" >filled contour.</text>
<line x1="485" y1="34.5" x2="572" y2="34.5" stroke="#a0a0a0" stroke-width="1" />
<line x1="485" y1="237.5" x2="572" y2="237.5" stroke="#a0a0a0" stroke-width="1" />
<line x1="485" y1="375.5" x2="572" y2="375.5" stroke="#a0a0a0" stroke-width="1" />
<text x="489" y="47" font-family="Liberation Sans" font-size="18" font-weight="normal" fill="#fff" >ir</text>
<defs><linearGradient id="irg" x1="0" y1="0" x2="0" y2="1"><stop offset="0" stop-color="#101010"/><stop offset="1" stop-color="#d8d8d8"/></linearGradient></defs>
<rect x="489" y="60" width="10" height="95" fill="url(#irg)" />
<rect x="489" y="155" width="10" height="17" fill="#0000ff" />
<rect x="489" y="171" width="10" height="1" fill="#fff" />
<rect x="489" y="172" width="10" height="4" fill="#ff0000" />
<rect x="489" y="176" width="10" height="5" fill="#ffa000" />
<rect x="489" y="181" width="10" height="2" fill="#ffb0b0" />
<rect x="489" y="183" width="10" height="4" fill="#ffff00" />
<text x="504" y="67.5" font-family="Liberation Sans" font-size="17.5" font-weight="normal" fill="#fff" >387.0</text>
<text x="504" y="89.9" font-family="Liberation Sans" font-size="17.5" font-weight="normal" fill="#fff" >351.0</text>
<text x="504" y="112.3" font-family="Liberation Sans" font-size="17.5" font-weight="normal" fill="#fff" >315.0</text>
<text x="504" y="134.7" font-family="Liberation Sans" font-size="17.5" font-weight="normal" fill="#fff" >279.0</text>
<text x="504" y="157.1" font-family="Liberation Sans" font-size="17.5" font-weight="normal" fill="#fff" >243.0</text>
<text x="504" y="179.5" font-family="Liberation Sans" font-size="17.5" font-weight="normal" fill="#fff" >207.0</text>
<text x="489" y="257.5" font-family="Liberation Sans" font-size="18" font-weight="normal" fill="#fff" >maxdz</text>
<rect x="489" y="263" width="10" height="28" fill="#b22222" />
<rect x="489" y="291" width="10" height="28" fill="#f5a07a" />
<rect x="489" y="319" width="10" height="28" fill="#f5f08a" />
<rect x="489" y="347" width="10" height="28" fill="#00f0a0" />
<text x="504" y="284" font-family="Liberation Sans" font-size="17.5" font-weight="normal" fill="#fff" >55.0</text>
<text x="504" y="312" font-family="Liberation Sans" font-size="17.5" font-weight="normal" fill="#fff" >45.0</text>
<text x="504" y="340" font-family="Liberation Sans" font-size="17.5" font-weight="normal" fill="#fff" >35.0</text>
<text x="504" y="368" font-family="Liberation Sans" font-size="17.5" font-weight="normal" fill="#fff" >25.0</text>
<defs>
<pattern id="chkY" width="2" height="2" patternUnits="userSpaceOnUse"><rect width="1" height="1" fill="#ffff00"/><rect x="1" y="1" width="1" height="1" fill="#ffff00"/></pattern>
<pattern id="chkW" width="2" height="2" patternUnits="userSpaceOnUse"><rect width="1" height="1" fill="#e8e8e8"/><rect x="1" y="1" width="1" height="1" fill="#e8e8e8"/></pattern>
</defs>
<rect x="5" y="376" width="46" height="48" fill="#a8a8a8" />
<rect x="6" y="377" width="44" height="46" fill="#1c1a70" />
<g transform="translate(5,376)" fill="none" stroke="#ffff00" stroke-width="2.2" shape-rendering="geometricPrecision"><path d="M7,13 C13,6 20,9 26,11 C32,13 36,11 38,9"/><path d="M38,9 C30,17 20,27 8,40"/><path d="M8,40 C15,34 22,37 28,40 C33,42 37,40 39,37"/></g>
<rect x="52" y="376" width="46" height="48" fill="#a8a8a8" />
<rect x="53" y="377" width="44" height="46" fill="#1c1a70" />
<g transform="translate(52,376)"><text x="3" y="15" font-family="Liberation Mono" font-weight="bold" font-size="13" fill="#ffff00" letter-spacing="-1.2">GOES</text><path d="M3,18 C18,20 26,30 24,44 L3,44 Z" fill="url(#chkY)"/><path d="M15,26 L19,22 L24,30 L18,34 Z M4,38 L12,36 L12,44 L4,44Z" fill="#ffff00"/><path d="M18,28 L42,18 M22,34 L42,20" stroke="#ffff00" stroke-width="1" stroke-dasharray="1 2" fill="none"/><rect x="39" y="16" width="4" height="4" fill="#ffff00" transform="rotate(45 41 18)"/><text x="26" y="44" font-family="Liberation Sans" font-size="9.5" fill="#ffff00">.IR</text></g>
<rect x="99" y="376" width="46" height="48" fill="#a8a8a8" />
<rect x="100" y="377" width="44" height="46" fill="#1c1a70" />
<g transform="translate(99,376)" fill="#ffff00"><path d="M5,9 C8,19 16,28 28,31" fill="none" stroke="#ffff00" stroke-width="2"/><rect x="13.5" y="20.5" width="5" height="5" fill="none" stroke="#ffff00" stroke-width="1"/><path d="M11,26 L15,26 L16,35 L17,40 L9,40 L10,35 Z"/><text x="40" y="17" font-family="Liberation Sans" font-size="10" text-anchor="middle">S</text><text x="40" y="29" font-family="Liberation Sans" font-size="10" text-anchor="middle">U</text><text x="40" y="41" font-family="Liberation Sans" font-size="10" text-anchor="middle">R</text></g>
<rect x="146" y="376" width="46" height="48" fill="#a8a8a8" />
<rect x="147" y="377" width="44" height="46" fill="#7a7a7a" />
<g transform="translate(146,376)"><line x1="5.5" y1="5" x2="5.5" y2="42" stroke="#e8e8e8" stroke-width="1"/><line x1="5" y1="5.5" x2="42" y2="5.5" stroke="#e8e8e8" stroke-width="1"/><line x1="14.5" y1="5" x2="14.5" y2="42" stroke="#e8e8e8" stroke-width="1"/><line x1="5" y1="14.75" x2="42" y2="14.75" stroke="#e8e8e8" stroke-width="1"/><line x1="23.5" y1="5" x2="23.5" y2="42" stroke="#e8e8e8" stroke-width="1"/><line x1="5" y1="24.0" x2="42" y2="24.0" stroke="#e8e8e8" stroke-width="1"/><line x1="32.5" y1="5" x2="32.5" y2="42" stroke="#e8e8e8" stroke-width="1"/><line x1="5" y1="33.25" x2="42" y2="33.25" stroke="#e8e8e8" stroke-width="1"/><line x1="41.5" y1="5" x2="41.5" y2="42" stroke="#e8e8e8" stroke-width="1"/><line x1="5" y1="42.5" x2="42" y2="42.5" stroke="#e8e8e8" stroke-width="1"/><path d="M13,9 C16,20 24,28 34,32" fill="none" stroke="#e8e8e8" stroke-width="2"/><path d="M18,26 L21,26 L22,36 L23,41 L15,41 L16,36 Z" fill="#e8e8e8"/></g>
<rect x="193" y="376" width="14" height="48" fill="#a8a8a8" />
<rect x="194" y="377" width="12" height="46" fill="#7a7a7a" />
<g transform="translate(193,376)" font-family="Liberation Sans" font-size="6.5" fill="#e0e0e0" text-anchor="middle"><text x="7" y="11.0">B</text><text x="7" y="17.3">O</text><text x="7" y="23.6">U</text><text x="7" y="29.9">N</text><text x="7" y="36.2">D</text><text x="7" y="42.5">S</text></g>
<rect x="208" y="400" width="22" height="24" fill="#a8a8a8" />
<rect x="209" y="401" width="20" height="22" fill="#1c1a70" />
<g transform="translate(208,400)" stroke="#ffff00" stroke-width="1"><line x1="4.5" y1="5" x2="4.5" y2="19"/><line x1="4" y1="5.5" x2="18" y2="5.5"/><line x1="8.8" y1="5" x2="8.8" y2="19"/><line x1="4" y1="10.0" x2="18" y2="10.0"/><line x1="13.1" y1="5" x2="13.1" y2="19"/><line x1="4" y1="14.5" x2="18" y2="14.5"/><line x1="17.4" y1="5" x2="17.4" y2="19"/><line x1="4" y1="19.0" x2="18" y2="19.0"/></g>
<rect x="231" y="376" width="21" height="48" fill="#a8a8a8" />
<rect x="232" y="377" width="19" height="46" fill="#1c1a70" />
<g transform="translate(231,376)" fill="#ffff00"><path d="M3,5 L8,4 L9,8 L7,11 L5,15 L4,11 Z M11,5 L17,4 L16,8 L13,10 L15,14 L12,15 L11,10 Z"/><text x="10.5" y="25" font-family="Liberation Sans" font-size="8.5" text-anchor="middle">M</text><text x="10.5" y="34" font-family="Liberation Sans" font-size="8.5" text-anchor="middle">A</text><text x="10.5" y="43" font-family="Liberation Sans" font-size="8.5" text-anchor="middle">P</text></g>
<rect x="253" y="376" width="21" height="48" fill="#a8a8a8" />
<rect x="254" y="377" width="19" height="46" fill="#7a7a7a" />
<g transform="translate(263.5,400)" fill="none" stroke="#e0e0e0" stroke-width="1" shape-rendering="geometricPrecision"><circle r="8"/><circle r="4"/><path d="M-8,0 H8 M0,-8 V8 M-6,-6 L6,6 M-6,6 L6,-6"/></g>
<rect x="275" y="400" width="22" height="24" fill="#a8a8a8" />
<rect x="276" y="401" width="20" height="22" fill="#1c1a70" />
<g fill="#ffff00"><rect x="284" y="405" width="4" height="7"/><rect x="282" y="412" width="8" height="3"/><polyline points="278,417 280,419 282,417 284,419 286,417 288,419 290,417 292,419 294,417" fill="none" stroke="#ffff00" stroke-width="1.3"/></g>
<rect x="298" y="376" width="46" height="48" fill="#a8a8a8" />
<rect x="299" y="377" width="44" height="46" fill="#7a7a7a" />
<g transform="translate(298,376)" fill="none" stroke="#e8e8e8" stroke-width="1.2"><path d="M4,30 L37,30 L33,39 L7,39 Z"/><path d="M8,30 L8,21 L12,21 L14,30"/><circle cx="24" cy="22" r="3"/><path d="M24,25 V30 M37,10 V30"/></g><path d="M301,417 l4,-2 l4,2 l4,-2 l4,2 l4,-2 l4,2 l4,-2 l4,2 l4,-2 l4,2 V422 H301 Z" fill="#e8e8e8"/>
<text x="583" y="21" font-family="Liberation Sans" font-size="18" font-weight="normal" fill="#ffff00" letter-spacing="-0.05">14−aug−1997,19:05:00</text>
<text x="778.5" y="21" font-family="Liberation Sans" font-size="18" font-weight="normal" fill="#fff" letter-spacing="0.32">Planar cross−section plot.  Contour of</text>
<text x="582.5" y="47" font-family="Liberation Sans" font-size="18" font-weight="normal" fill="#fff" letter-spacing="0.2">maxdz using: rhb_3d.</text>
<g stroke="#fff" stroke-width="1" fill="none"><path d="M622.5,30.5 H1048.5 V310.5 H622.5 Z"/>
<path d="M675.5,30 v6 M675.5,311 v-7"/>
<path d="M728.5,30 v6 M728.5,311 v-7"/>
<path d="M782.5,30 v6 M782.5,311 v-7"/>
<path d="M835.5,30 v6 M835.5,311 v-7"/>
<path d="M888.5,30 v6 M888.5,311 v-7"/>
<path d="M942.5,30 v6 M942.5,311 v-7"/>
<path d="M995.5,30 v6 M995.5,311 v-7"/>
<path d="M622,58.5 h11 M1049,58.5 h-11"/>
<path d="M622,86.5 h11 M1049,86.5 h-11"/>
<path d="M622,114.5 h11 M1049,114.5 h-11"/>
<path d="M622,142.5 h11 M1049,142.5 h-11"/>
<path d="M622,170.5 h11 M1049,170.5 h-11"/>
<path d="M622,198.5 h11 M1049,198.5 h-11"/>
<path d="M622,226.5 h11 M1049,226.5 h-11"/>
<path d="M622,254.5 h11 M1049,254.5 h-11"/>
<path d="M622,282.5 h11 M1049,282.5 h-11"/>
</g>
<text x="619" y="29" font-family="Liberation Sans" font-size="10" font-weight="normal" fill="#fff" text-anchor="end" letter-spacing="0.3">20</text>
<text x="619" y="85" font-family="Liberation Sans" font-size="10" font-weight="normal" fill="#fff" text-anchor="end" letter-spacing="0.3">16</text>
<text x="619" y="141" font-family="Liberation Sans" font-size="10" font-weight="normal" fill="#fff" text-anchor="end" letter-spacing="0.3">12</text>
<text x="619" y="197" font-family="Liberation Sans" font-size="10" font-weight="normal" fill="#fff" text-anchor="end" letter-spacing="0.3">8</text>
<text x="619" y="253" font-family="Liberation Sans" font-size="10" font-weight="normal" fill="#fff" text-anchor="end" letter-spacing="0.3">4</text>
<text x="619" y="310.5" font-family="Liberation Sans" font-size="10" font-weight="normal" fill="#fff" text-anchor="end">0</text>
<text x="623.0" y="321" font-family="Liberation Sans" font-size="11" font-weight="normal" fill="#fff" text-anchor="middle" letter-spacing="0.3">0.0</text>
<text x="729.5" y="321" font-family="Liberation Sans" font-size="11" font-weight="normal" fill="#fff" text-anchor="middle" letter-spacing="0.3">4.3</text>
<text x="836.0" y="321" font-family="Liberation Sans" font-size="11" font-weight="normal" fill="#fff" text-anchor="middle" letter-spacing="0.3">8.5</text>
<text x="942.5" y="321" font-family="Liberation Sans" font-size="11" font-weight="normal" fill="#fff" text-anchor="middle" letter-spacing="0.3">12.8</text>
<text x="1048" y="321" font-family="Liberation Sans" font-size="11" font-weight="normal" fill="#fff" text-anchor="end">17</text>
<text x="802.5" y="330" font-family="Liberation Sans" font-size="11" font-weight="normal" fill="#fff" letter-spacing="0.2">Distance in km</text>
<text transform="translate(600.5,170.0) rotate(-90)" font-family="Liberation Serif" font-weight="bold" font-size="12.5" fill="#fff" text-anchor="middle" letter-spacing="1.3">km above MSL</text>
<line x1="1048" y1="30.5" x2="1133" y2="30.5" stroke="#a0a0a0" stroke-width="1" />
<text x="1050" y="44" font-family="Liberation Sans" font-size="13" font-weight="normal" fill="#fff" >maxdz</text>
<clipPath id="xc1"><polygon points="652,299 652,264.6 707.5,264.6 708.5,262 708.5,225 712,225 717,221 717,207 915,207 915,225.3 1022,225.3 1022,299"/></clipPath>
<g clip-path="url(#xc1)" shape-rendering="geometricPrecision">
<rect x="640" y="200" width="400" height="110" fill="#00acdf" />
<polygon points="660.6,300.0 665.0,280.0 671.0,264.6 708.0,264.6 708.0,225.0 717.0,222.0 728.0,215.0 745.0,209.0 762.0,206.0 1030.0,206.0 1030.0,300.0" fill="#00e598" />
<polygon points="710.6,300.0 714.0,280.0 719.0,262.0 724.0,252.5 730.0,243.0 736.7,235.8 746.0,230.0 757.5,225.4 780.0,220.5 807.5,217.0 860.0,212.0 915.0,212.5 915.0,225.3 1030.0,225.3 1030.0,300.0" fill="#007048" />
<polygon points="743.5,300.0 747.0,280.0 751.0,266.0 755.4,256.7 765.8,246.0 782.5,235.8 797.0,230.6 830.0,226.5 860.0,224.4 940.0,225.3 964.0,229.0 990.0,228.0 1030.0,227.0 1030.0,300.0" fill="#c8c8c8" />
<polygon points="784.0,300.0 790.0,285.0 797.0,269.0 807.5,256.7 818.0,250.4 840.0,244.4 864.8,236.8 890.0,238.0 914.5,240.0 940.0,244.0 964.0,249.6 1030.0,252.0 1030.0,300.0" fill="#d99232" />
<polygon points="856.0,300.0 860.0,294.0 866.0,292.0 880.0,293.0 893.0,296.0 905.0,300.0" fill="#f0b020" />
</g>
<rect x="1050" y="52" width="10" height="17" fill="#f88080" />
<text x="1065" y="65" font-family="Liberation Sans" font-size="12" font-weight="normal" fill="#fff" letter-spacing="0.3">62.5</text>
<rect x="1050" y="69" width="10" height="17" fill="#f8909a" />
<text x="1065" y="82" font-family="Liberation Sans" font-size="12" font-weight="normal" fill="#fff" letter-spacing="0.3">57.5</text>
<rect x="1050" y="86" width="10" height="17" fill="#f8b070" />
<text x="1065" y="99" font-family="Liberation Sans" font-size="12" font-weight="normal" fill="#fff" letter-spacing="0.3">52.5</text>
<rect x="1050" y="103" width="10" height="17" fill="#f8d8b0" />
<text x="1065" y="116" font-family="Liberation Sans" font-size="12" font-weight="normal" fill="#fff" letter-spacing="0.3">47.5</text>
<rect x="1050" y="120" width="10" height="17" fill="#f8d818" />
<text x="1065" y="133" font-family="Liberation Sans" font-size="12" font-weight="normal" fill="#fff" letter-spacing="0.3">42.5</text>
<rect x="1050" y="137" width="10" height="17" fill="#e8b020" />
<text x="1065" y="150" font-family="Liberation Sans" font-size="12" font-weight="normal" fill="#fff" letter-spacing="0.3">37.5</text>
<rect x="1050" y="154" width="10" height="17" fill="#d89030" />
<text x="1065" y="167" font-family="Liberation Sans" font-size="12" font-weight="normal" fill="#fff" letter-spacing="0.3">32.5</text>
<rect x="1050" y="171" width="10" height="17" fill="#c8c8c8" />
<text x="1065" y="184" font-family="Liberation Sans" font-size="12" font-weight="normal" fill="#fff" letter-spacing="0.3">27.5</text>
<rect x="1050" y="188" width="10" height="17" fill="#007048" />
<text x="1065" y="201" font-family="Liberation Sans" font-size="12" font-weight="normal" fill="#fff" letter-spacing="0.3">22.5</text>
<rect x="1050" y="205" width="10" height="17" fill="#00e898" />
<text x="1065" y="218" font-family="Liberation Sans" font-size="12" font-weight="normal" fill="#fff" letter-spacing="0.3">17.5</text>
<rect x="1050" y="222" width="10" height="17" fill="#00b0e0" />
<text x="1065" y="235" font-family="Liberation Sans" font-size="12" font-weight="normal" fill="#fff" letter-spacing="0.3">12.5</text>
<rect x="1050" y="239" width="10" height="17" fill="#0070e0" />
<text x="1065" y="252" font-family="Liberation Sans" font-size="12" font-weight="normal" fill="#fff" letter-spacing="0.3">7.5</text>
<rect x="1050" y="256" width="10" height="17" fill="#1840e0" />
<text x="1065" y="269" font-family="Liberation Sans" font-size="12" font-weight="normal" fill="#fff" letter-spacing="0.3">2.5</text>
<rect x="1050" y="273" width="10" height="17" fill="#4020e0" />
<text x="1065" y="286" font-family="Liberation Sans" font-size="12" font-weight="normal" fill="#fff" letter-spacing="0.3">−2.5</text>
<rect x="1050" y="290" width="10" height="17" fill="#6000f0" />
<text x="1065" y="303" font-family="Liberation Sans" font-size="12" font-weight="normal" fill="#fff" letter-spacing="0.3">−7.5</text>
<rect x="1050" y="307" width="10" height="17" fill="#8000ff" />
<text x="1065" y="320" font-family="Liberation Sans" font-size="12" font-weight="normal" fill="#fff" letter-spacing="0.3">−12.5</text>
<line x1="1048" y1="335.5" x2="1132" y2="335.5" stroke="#a0a0a0" stroke-width="1" />
<rect x="577" y="336" width="46" height="47" fill="#a8a8a8" />
<rect x="578" y="337" width="44" height="45" fill="#1c1a70" />
<g transform="translate(577,336)" fill="none" stroke="#ffff00" stroke-width="2.2" shape-rendering="geometricPrecision"><path d="M7,13 C13,6 20,9 26,11 C32,13 36,11 38,9"/><path d="M38,9 C30,17 20,27 8,40"/><path d="M8,40 C15,34 22,37 28,40 C33,42 37,40 39,37"/></g>
<rect x="624" y="336" width="46" height="47" fill="#a8a8a8" />
<rect x="625" y="337" width="44" height="45" fill="#1c1a70" />
<g transform="translate(624,336)" shape-rendering="crispEdges"><text x="23" y="9.5" font-family="Liberation Sans" font-weight="bold" font-size="7" fill="#ffff00" text-anchor="middle" letter-spacing="0.4">CROSS</text><text x="23" y="44.5" font-family="Liberation Sans" font-weight="bold" font-size="7" fill="#ffff00" text-anchor="middle" letter-spacing="0.4">SECTION</text><rect x="13" y="12" width="22" height="22" fill="url(#chkY)"/><g fill="none" stroke="#ffff00" stroke-width="1"><rect x="4.5" y="17.5" width="22" height="20"/><path d="M4.5,17.5 L17.5,10.5 L40.5,10.5 L40.5,30.5 L26.5,37.5 M26.5,17.5 L40.5,10.5 M13.5,12.5 L13.5,33.5 M34.5,12.5 L34.5,33.5 M13.5,33.5 L34.5,33.5"/></g></g>
<rect x="671" y="336" width="46" height="47" fill="#a8a8a8" />
<rect x="672" y="337" width="44" height="45" fill="#7a7a7a" />
<g transform="translate(671,336)" shape-rendering="crispEdges"><text x="23" y="9.5" font-family="Liberation Sans" font-weight="bold" font-size="7" fill="#e8e8e8" text-anchor="middle" letter-spacing="0.4">CROSS</text><text x="23" y="44.5" font-family="Liberation Sans" font-weight="bold" font-size="7" fill="#e8e8e8" text-anchor="middle" letter-spacing="0.4">SECTION</text><rect x="13" y="12" width="22" height="22" fill="url(#chkW)"/><g fill="none" stroke="#e8e8e8" stroke-width="1"><rect x="4.5" y="17.5" width="22" height="20"/><path d="M4.5,17.5 L17.5,10.5 L40.5,10.5 L40.5,30.5 L26.5,37.5 M26.5,17.5 L40.5,10.5 M13.5,12.5 L13.5,33.5 M34.5,12.5 L34.5,33.5 M13.5,33.5 L34.5,33.5"/></g></g>
<rect x="718" y="336" width="46" height="47" fill="#a8a8a8" />
<rect x="719" y="337" width="44" height="45" fill="#7a7a7a" />
<g transform="translate(718,336)" shape-rendering="crispEdges"><text x="23" y="9.5" font-family="Liberation Sans" font-weight="bold" font-size="7" fill="#e8e8e8" text-anchor="middle" letter-spacing="0.4">CROSS</text><text x="23" y="44.5" font-family="Liberation Sans" font-weight="bold" font-size="7" fill="#e8e8e8" text-anchor="middle" letter-spacing="0.4">SECTION</text><rect x="13" y="12" width="22" height="22" fill="url(#chkW)"/><g fill="none" stroke="#e8e8e8" stroke-width="1"><rect x="4.5" y="17.5" width="22" height="20"/><path d="M4.5,17.5 L17.5,10.5 L40.5,10.5 L40.5,30.5 L26.5,37.5 M26.5,17.5 L40.5,10.5 M13.5,12.5 L13.5,33.5 M34.5,12.5 L34.5,33.5 M13.5,33.5 L34.5,33.5"/></g></g>
<text x="586" y="404" font-family="Liberation Sans" font-size="18" font-weight="normal" fill="#ffff00" letter-spacing="-0.05">14−aug−1997,19:05:00</text>
<text x="781.5" y="404" font-family="Liberation Sans" font-size="18" font-weight="normal" fill="#fff" letter-spacing="0.32">Planar cross−section plot.  Contour of</text>
<text x="585.5" y="430" font-family="Liberation Sans" font-size="18" font-weight="normal" fill="#fff" letter-spacing="0.2">radialvelocity using: rhb_3d.</text>
<g stroke="#fff" stroke-width="1" fill="none"><path d="M625.5,413.5 H1050.5 V695.5 H625.5 Z"/>
<path d="M678.5,413 v6 M678.5,696 v-7"/>
<path d="M731.5,413 v6 M731.5,696 v-7"/>
<path d="M784.5,413 v6 M784.5,696 v-7"/>
<path d="M838.5,413 v6 M838.5,696 v-7"/>
<path d="M891.5,413 v6 M891.5,696 v-7"/>
<path d="M944.5,413 v6 M944.5,696 v-7"/>
<path d="M997.5,413 v6 M997.5,696 v-7"/>
<path d="M625,441.5 h11 M1051,441.5 h-11"/>
<path d="M625,469.5 h11 M1051,469.5 h-11"/>
<path d="M625,498.5 h11 M1051,498.5 h-11"/>
<path d="M625,526.5 h11 M1051,526.5 h-11"/>
<path d="M625,554.5 h11 M1051,554.5 h-11"/>
<path d="M625,582.5 h11 M1051,582.5 h-11"/>
<path d="M625,610.5 h11 M1051,610.5 h-11"/>
<path d="M625,639.5 h11 M1051,639.5 h-11"/>
<path d="M625,667.5 h11 M1051,667.5 h-11"/>
</g>
<text x="622" y="412" font-family="Liberation Sans" font-size="10" font-weight="normal" fill="#fff" text-anchor="end" letter-spacing="0.3">20</text>
<text x="622" y="468" font-family="Liberation Sans" font-size="10" font-weight="normal" fill="#fff" text-anchor="end" letter-spacing="0.3">16</text>
<text x="622" y="525" font-family="Liberation Sans" font-size="10" font-weight="normal" fill="#fff" text-anchor="end" letter-spacing="0.3">12</text>
<text x="622" y="581" font-family="Liberation Sans" font-size="10" font-weight="normal" fill="#fff" text-anchor="end" letter-spacing="0.3">8</text>
<text x="622" y="638" font-family="Liberation Sans" font-size="10" font-weight="normal" fill="#fff" text-anchor="end" letter-spacing="0.3">4</text>
<text x="622" y="695.5" font-family="Liberation Sans" font-size="10" font-weight="normal" fill="#fff" text-anchor="end">0</text>
<text x="626.0" y="706" font-family="Liberation Sans" font-size="11" font-weight="normal" fill="#fff" text-anchor="middle" letter-spacing="0.3">0.0</text>
<text x="732.25" y="706" font-family="Liberation Sans" font-size="11" font-weight="normal" fill="#fff" text-anchor="middle" letter-spacing="0.3">4.3</text>
<text x="838.5" y="706" font-family="Liberation Sans" font-size="11" font-weight="normal" fill="#fff" text-anchor="middle" letter-spacing="0.3">8.5</text>
<text x="944.75" y="706" font-family="Liberation Sans" font-size="11" font-weight="normal" fill="#fff" text-anchor="middle" letter-spacing="0.3">12.8</text>
<text x="1050" y="706" font-family="Liberation Sans" font-size="11" font-weight="normal" fill="#fff" text-anchor="end">17</text>
<text x="805.5" y="715" font-family="Liberation Sans" font-size="11" font-weight="normal" fill="#fff" letter-spacing="0.2">Distance in km</text>
<text transform="translate(603.5,554.0) rotate(-90)" font-family="Liberation Serif" font-weight="bold" font-size="12.5" fill="#fff" text-anchor="middle" letter-spacing="1.3">km above MSL</text>
<line x1="1050" y1="413.5" x2="1133" y2="413.5" stroke="#a0a0a0" stroke-width="1" />
<text x="1052.5" y="428" font-family="Liberation Sans" font-size="13" font-weight="normal" fill="#fff" >radialvelocity</text>
<clipPath id="xc2"><polygon points="654,682.5 654,649 708.3,649 710,646 710,609.2 718,604 719.2,604 719.2,590.8 917,590.8 917,609.2 1024,609.2 1024,682.5"/></clipPath>
<g clip-path="url(#xc2)" shape-rendering="geometricPrecision">
<rect x="640" y="580" width="400" height="110" fill="#0a8a18" />
<polygon points="700.0,619.0 710.0,617.5 727.0,615.4 750.0,611.2 787.0,603.0 810.0,595.6 836.0,589.0 1030.0,589.0 1030.0,690.0 700.0,690.0" fill="#0a5014" />
<polygon points="640.0,649.0 708.0,649.0 710.0,636.2 740.0,634.6 790.0,624.8 820.0,618.5 860.0,609.2 917.0,606.0 1030.0,606.0 1030.0,690.0 700.0,690.0" fill="#b4b4b4" />
<polygon points="640.0,660.0 700.0,654.0 715.0,652.9 760.0,649.8 810.0,642.5 860.0,635.2 900.0,629.0 940.0,621.7 975.0,616.3 1030.0,614.7 1030.0,690.0 640.0,690.0" fill="#a54500" />
<polygon points="640.0,672.3 714.0,672.7 770.0,671.7 810.0,668.5 865.0,665.4 940.0,663.3 972.7,656.2 989.0,663.0 1008.0,671.0 1024.0,682.5 640.0,690.0" fill="#d89060" />
</g>
<rect x="1052" y="436" width="10" height="11" fill="#ff0000" />
<text x="1067.5" y="445.5" font-family="Liberation Sans" font-size="12" font-weight="normal" fill="#fff" letter-spacing="0.2">24.0</text>
<rect x="1052" y="447" width="10" height="11" fill="#d40000" />
<text x="1067.5" y="456.5" font-family="Liberation Sans" font-size="12" font-weight="normal" fill="#fff" letter-spacing="0.2">22.0</text>
<rect x="1052" y="458" width="10" height="11" fill="#9a0000" />
<text x="1067.5" y="467.5" font-family="Liberation Sans" font-size="12" font-weight="normal" fill="#fff" letter-spacing="0.2">20.0</text>
<rect x="1052" y="469" width="10" height="11" fill="#e05000" />
<text x="1067.5" y="478.5" font-family="Liberation Sans" font-size="12" font-weight="normal" fill="#fff" letter-spacing="0.2">18.0</text>
<rect x="1052" y="480" width="10" height="11" fill="#ff7800" />
<text x="1067.5" y="489.5" font-family="Liberation Sans" font-size="12" font-weight="normal" fill="#fff" letter-spacing="0.2">16.0</text>
<rect x="1052" y="491" width="10" height="11" fill="#ff5a5a" />
<text x="1067.5" y="500.5" font-family="Liberation Sans" font-size="12" font-weight="normal" fill="#fff" letter-spacing="0.2">14.0</text>
<rect x="1052" y="502" width="10" height="11" fill="#ff8c8c" />
<text x="1067.5" y="511.5" font-family="Liberation Sans" font-size="12" font-weight="normal" fill="#fff" letter-spacing="0.2">12.0</text>
<rect x="1052" y="513" width="10" height="11" fill="#ffc4c4" />
<text x="1067.5" y="522.5" font-family="Liberation Sans" font-size="12" font-weight="normal" fill="#fff" letter-spacing="0.2">10.0</text>
<rect x="1052" y="524" width="10" height="11" fill="#ffff00" />
<text x="1067.5" y="533.5" font-family="Liberation Sans" font-size="12" font-weight="normal" fill="#fff" letter-spacing="0.2">8.0</text>
<rect x="1052" y="535" width="10" height="11" fill="#ffb020" />
<text x="1067.5" y="544.5" font-family="Liberation Sans" font-size="12" font-weight="normal" fill="#fff" letter-spacing="0.2">6.0</text>
<rect x="1052" y="546" width="10" height="11" fill="#d89060" />
<text x="1067.5" y="555.5" font-family="Liberation Sans" font-size="12" font-weight="normal" fill="#fff" letter-spacing="0.2">4.0</text>
<rect x="1052" y="557" width="10" height="11" fill="#a04010" />
<text x="1067.5" y="566.5" font-family="Liberation Sans" font-size="12" font-weight="normal" fill="#fff" letter-spacing="0.2">2.0</text>
<rect x="1052" y="568" width="10" height="11" fill="#b4b4b4" />
<text x="1067.5" y="577.5" font-family="Liberation Sans" font-size="12" font-weight="normal" fill="#fff" letter-spacing="0.2">0.0</text>
<rect x="1052" y="579" width="10" height="11" fill="#0a5014" />
<text x="1068" y="588.5" font-family="Liberation Sans" font-size="12" font-weight="normal" fill="#fff" letter-spacing="0.2">−2.0</text>
<rect x="1052" y="590" width="10" height="11" fill="#0a8018" />
<text x="1068" y="599.5" font-family="Liberation Sans" font-size="12" font-weight="normal" fill="#fff" letter-spacing="0.2">−4.0</text>
<rect x="1052" y="601" width="10" height="11" fill="#08a018" />
<text x="1068" y="610.5" font-family="Liberation Sans" font-size="12" font-weight="normal" fill="#fff" letter-spacing="0.2">−6.0</text>
<rect x="1052" y="612" width="10" height="11" fill="#00f018" />
<text x="1068" y="621.5" font-family="Liberation Sans" font-size="12" font-weight="normal" fill="#fff" letter-spacing="0.2">−8.0</text>
<rect x="1052" y="623" width="10" height="11" fill="#00c8ff" />
<text x="1068" y="632.5" font-family="Liberation Sans" font-size="12" font-weight="normal" fill="#fff" letter-spacing="0.2">−10.0</text>
<rect x="1052" y="634" width="10" height="11" fill="#0088ff" />
<text x="1068" y="643.5" font-family="Liberation Sans" font-size="12" font-weight="normal" fill="#fff" letter-spacing="0.2">−12.0</text>
<rect x="1052" y="645" width="10" height="11" fill="#0010d8" />
<text x="1068" y="654.5" font-family="Liberation Sans" font-size="12" font-weight="normal" fill="#fff" letter-spacing="0.2">−14.0</text>
<rect x="1052" y="656" width="10" height="11" fill="#0020a8" />
<text x="1068" y="665.5" font-family="Liberation Sans" font-size="12" font-weight="normal" fill="#fff" letter-spacing="0.2">−16.0</text>
<rect x="1052" y="667" width="10" height="11" fill="#000888" />
<text x="1068" y="676.5" font-family="Liberation Sans" font-size="12" font-weight="normal" fill="#fff" letter-spacing="0.2">−18.0</text>
<rect x="1052" y="678" width="10" height="11" fill="#8888b4" />
<text x="1068" y="687.5" font-family="Liberation Sans" font-size="12" font-weight="normal" fill="#fff" letter-spacing="0.2">−20.0</text>
<rect x="1052" y="689" width="10" height="11" fill="#505080" />
<text x="1068" y="698.5" font-family="Liberation Sans" font-size="12" font-weight="normal" fill="#fff" letter-spacing="0.2">−22.0</text>
<rect x="1052" y="700" width="10" height="11" fill="#787878" />
<text x="1068" y="709.5" font-family="Liberation Sans" font-size="12" font-weight="normal" fill="#fff" letter-spacing="0.2">−24.0</text>
<line x1="1050" y1="719.5" x2="1134" y2="719.5" stroke="#a0a0a0" stroke-width="1" />
<rect x="579" y="720" width="46" height="47" fill="#a8a8a8" />
<rect x="580" y="721" width="44" height="45" fill="#1c1a70" />
<g transform="translate(579,720)" fill="none" stroke="#ffff00" stroke-width="2.2" shape-rendering="geometricPrecision"><path d="M7,13 C13,6 20,9 26,11 C32,13 36,11 38,9"/><path d="M38,9 C30,17 20,27 8,40"/><path d="M8,40 C15,34 22,37 28,40 C33,42 37,40 39,37"/></g>
<rect x="626" y="720" width="46" height="47" fill="#a8a8a8" />
<rect x="627" y="721" width="44" height="45" fill="#1c1a70" />
<g transform="translate(626,720)" shape-rendering="crispEdges"><text x="23" y="9.5" font-family="Liberation Sans" font-weight="bold" font-size="7" fill="#ffff00" text-anchor="middle" letter-spacing="0.4">CROSS</text><text x="23" y="44.5" font-family="Liberation Sans" font-weight="bold" font-size="7" fill="#ffff00" text-anchor="middle" letter-spacing="0.4">SECTION</text><rect x="13" y="12" width="22" height="22" fill="url(#chkY)"/><g fill="none" stroke="#ffff00" stroke-width="1"><rect x="4.5" y="17.5" width="22" height="20"/><path d="M4.5,17.5 L17.5,10.5 L40.5,10.5 L40.5,30.5 L26.5,37.5 M26.5,17.5 L40.5,10.5 M13.5,12.5 L13.5,33.5 M34.5,12.5 L34.5,33.5 M13.5,33.5 L34.5,33.5"/></g></g>
<rect x="673" y="720" width="46" height="47" fill="#a8a8a8" />
<rect x="674" y="721" width="44" height="45" fill="#7a7a7a" />
<g transform="translate(673,720)" shape-rendering="crispEdges"><text x="23" y="9.5" font-family="Liberation Sans" font-weight="bold" font-size="7" fill="#e8e8e8" text-anchor="middle" letter-spacing="0.4">CROSS</text><text x="23" y="44.5" font-family="Liberation Sans" font-weight="bold" font-size="7" fill="#e8e8e8" text-anchor="middle" letter-spacing="0.4">SECTION</text><rect x="13" y="12" width="22" height="22" fill="url(#chkW)"/><g fill="none" stroke="#e8e8e8" stroke-width="1"><rect x="4.5" y="17.5" width="22" height="20"/><path d="M4.5,17.5 L17.5,10.5 L40.5,10.5 L40.5,30.5 L26.5,37.5 M26.5,17.5 L40.5,10.5 M13.5,12.5 L13.5,33.5 M34.5,12.5 L34.5,33.5 M13.5,33.5 L34.5,33.5"/></g></g>
<rect x="720" y="720" width="46" height="47" fill="#a8a8a8" />
<rect x="721" y="721" width="44" height="45" fill="#7a7a7a" />
<g transform="translate(720,720)" shape-rendering="crispEdges"><text x="23" y="9.5" font-family="Liberation Sans" font-weight="bold" font-size="7" fill="#e8e8e8" text-anchor="middle" letter-spacing="0.4">CROSS</text><text x="23" y="44.5" font-family="Liberation Sans" font-weight="bold" font-size="7" fill="#e8e8e8" text-anchor="middle" letter-spacing="0.4">SECTION</text><rect x="13" y="12" width="22" height="22" fill="url(#chkW)"/><g fill="none" stroke="#e8e8e8" stroke-width="1"><rect x="4.5" y="17.5" width="22" height="20"/><path d="M4.5,17.5 L17.5,10.5 L40.5,10.5 L40.5,30.5 L26.5,37.5 M26.5,17.5 L40.5,10.5 M13.5,12.5 L13.5,33.5 M34.5,12.5 L34.5,33.5 M13.5,33.5 L34.5,33.5"/></g></g>
<text x="579.5" y="784.8" font-family="Liberation Mono" font-size="15" font-weight="normal" fill="#fff" stroke="#fff" stroke-width="0.45">PLATFORM</text>
<text x="679.2" y="784.8" font-family="Liberation Mono" font-size="15" font-weight="normal" fill="#fff" stroke="#fff" stroke-width="0.45">FIELD</text>
<text x="777.4" y="784.8" font-family="Liberation Mono" font-size="15" font-weight="normal" fill="#fff" stroke="#fff" stroke-width="0.45">ALTITUDE</text>
<text x="913.7" y="784.8" font-family="Liberation Mono" font-size="15" font-weight="normal" fill="#fff" stroke="#fff" stroke-width="0.45">TIME</text>
<text x="579.5" y="799.8" font-family="Liberation Mono" font-size="15" font-weight="normal" fill="#fff" stroke="#fff" stroke-width="0.45">rhb_lowprf</text>
<text x="679.2" y="799.8" font-family="Liberation Mono" font-size="15" font-weight="normal" fill="#fff" stroke="#fff" stroke-width="0.45">maxdz</text>
<text x="777.4" y="799.8" font-family="Liberation Mono" font-size="15" font-weight="normal" fill="#fff" stroke="#fff" stroke-width="0.45">0.50 km MSL</text>
<text x="913.7" y="799.8" font-family="Liberation Mono" font-size="15" font-weight="normal" fill="#fff" stroke="#fff" stroke-width="0.45">14-Aug-97,19:00:20</text>
<text x="579.5" y="814.9" font-family="Liberation Mono" font-size="15" font-weight="normal" fill="#fff" stroke="#fff" stroke-width="0.45">rhb_3d</text>
<text x="679.2" y="814.9" font-family="Liberation Mono" font-size="15" font-weight="normal" fill="#fff" stroke="#fff" stroke-width="0.45">maxdz</text>
<text x="777.4" y="814.9" font-family="Liberation Mono" font-size="15" font-weight="normal" fill="#fff" stroke="#fff" stroke-width="0.45">0.50 km MSL</text>
<text x="913.7" y="814.9" font-family="Liberation Mono" font-size="15" font-weight="normal" fill="#fff" stroke="#fff" stroke-width="0.45">14-Aug-97,19:01:17</text>
<clipPath id="errclip"><rect x="574" y="841.5" width="546" height="25"/></clipPath>
<text x="619.5" y="845.5" font-family="Liberation Mono" font-size="10" font-weight="bold" fill="#1a1a8a" clip-path="url(#errclip)">NetCDF error -49 -- Altitude read</text>
<line x1="586.5" y1="874" x2="586.5" y2="900" stroke="#000" stroke-width="1" />
<rect x="593" y="874" width="61" height="24" fill="#ff2020" />
<rect x="594" y="875" width="59" height="22" fill="#e4e4e4" />
<text x="623.5" y="892" font-family="Liberation Sans" font-size="14" font-weight="normal" fill="#000" text-anchor="middle" letter-spacing="-0.9">Real Time</text>
<rect x="658" y="874" width="57" height="24" fill="#ff2020" />
<rect x="659" y="875" width="55" height="22" fill="#000" />
<text x="686.5" y="892" font-family="Liberation Sans" font-size="14" font-weight="normal" fill="#fff" text-anchor="middle" letter-spacing="-0.9">Set Time</text>
<line x1="721.5" y1="872" x2="721.5" y2="900" stroke="#000" stroke-width="1" />
<line x1="727.5" y1="872" x2="727.5" y2="900" stroke="#000" stroke-width="1" />
<line x1="730.5" y1="874" x2="730.5" y2="900" stroke="#000" stroke-width="1" />
<line x1="730" y1="874.5" x2="860" y2="874.5" stroke="#000" stroke-width="1" />
<text x="736" y="890" font-family="Liberation Sans" font-size="14" font-weight="bold" fill="#000" letter-spacing="-0.5">Skip</text>
<rect x="766" y="874" width="39" height="23" fill="#ffff00" />
<rect x="768" y="876" width="35" height="19" fill="#e4e4e4" />
<text x="771" y="891" font-family="Liberation Mono" font-size="14" font-weight="normal" fill="#000" >1</text>
<path d="M773,896 l2,-3 l2,3" stroke="#000" fill="none" stroke-width="1"/>
<rect x="806.5" y="875" width="52" height="22" fill="#000" />
<rect x="807.5" y="876" width="50" height="20" fill="#e4e4e4" />
<g fill="none" stroke="#000" stroke-width="1"><rect x="813.5" y="879.5" width="7" height="11"/><path d="M815,882.5 h4 M815,884.5 h4 M815,886.5 h4"/></g>
<text x="826" y="891" font-family="Liberation Mono" font-size="15" font-weight="bold" fill="#000" >hrs</text>
<rect x="861" y="874" width="25" height="24" fill="#ff2020" />
<rect x="862" y="875" width="23" height="22" fill="#e4e4e4" />
<rect x="864.5" y="877.5" width="18" height="17" fill="none" stroke="#000" stroke-dasharray="1 1"/>
<path d="M867,886 l5,-4 v2.5 h7 v3 h-7 v2.5 Z" fill="#000"/>
<rect x="886" y="874" width="25" height="24" fill="#ff2020" />
<rect x="887" y="875" width="23" height="22" fill="#000" />
<rect x="889.5" y="877.5" width="18" height="17" fill="#e4e4e4" stroke="#000" stroke-dasharray="1 1"/>
<path d="M905,886 l-5,-4 v2.5 h-7 v3 h7 v2.5 Z" fill="#000"/>
<line x1="920.5" y1="872" x2="920.5" y2="900" stroke="#000" stroke-width="1" />
<line x1="924.5" y1="872" x2="924.5" y2="900" stroke="#000" stroke-width="1" />
<rect x="927" y="874" width="32" height="24" fill="#ff2020" />
<rect x="928" y="875" width="30" height="22" fill="#e4e4e4" />
<text x="943.0" y="892" font-family="Liberation Sans" font-size="14" font-weight="normal" fill="#000" text-anchor="middle" letter-spacing="-0.9">Help</text>
<rect x="964" y="874" width="50" height="24" fill="#ff2020" />
<rect x="965" y="875" width="48" height="22" fill="#e4e4e4" />
<text x="989.0" y="892" font-family="Liberation Sans" font-size="14" font-weight="normal" fill="#000" text-anchor="middle" letter-spacing="-0.9">Dismiss</text>
<line x1="1019.5" y1="872" x2="1019.5" y2="900" stroke="#000" stroke-width="1" />
<pattern id="chkG" width="2" height="2" patternUnits="userSpaceOnUse"><rect width="2" height="2" fill="#e8e8e8"/><rect width="1" height="1" fill="#404040"/><rect x="1" y="1" width="1" height="1" fill="#404040"/></pattern>
<rect x="0" y="870" width="13" height="27" fill="url(#chkG)" />
<rect x="0" y="427" width="5" height="444" fill="#fdf6dc" />
<rect x="0" y="752" width="4" height="119" fill="url(#chkG)" />
<line x1="4.5" y1="427" x2="4.5" y2="870" stroke="#fff" stroke-width="1" stroke-dasharray="1 1"/>
<clipPath id="termclip"><rect x="14" y="871" width="560" height="26"/></clipPath>
<text x="17" y="876.5" font-family="Liberation Mono" font-size="15" font-weight="normal" fill="#000" clip-path="url(#termclip)">rain:beaufait:58>xdump.all 970814.1905.xwd</text>
<rect x="17.5" y="881.5" width="8" height="13" fill="none" stroke="#008000" stroke-width="1"/>
<text x="16" y="446" font-family="Liberation Sans" font-size="24" font-weight="normal" fill="#ffff00" letter-spacing="-0.2">14−aug−1997,19:05:00</text>
<text x="273" y="446" font-family="Liberation Sans" font-size="24" font-weight="normal" fill="#fff" letter-spacing="0.4">maxdz</text>
<text x="350.5" y="446" font-family="Liberation Sans" font-size="24" font-weight="normal" fill="#fff" letter-spacing="0.4">plot.</text>
<text x="409" y="446" font-family="Liberation Sans" font-size="24" font-weight="normal" fill="#fff" letter-spacing="0.4">maxdz</text>
<text x="486.7" y="446" font-family="Liberation Sans" font-size="24" font-weight="normal" fill="#fff" letter-spacing="0.4">plot.</text>
<clipPath id="pclip"><rect x="55" y="458" width="432" height="337"/></clipPath>
<g clip-path="url(#pclip)">
<rect x="228.0" y="470.5" width="3.5" height="3.5" fill="#007048"/><rect x="231.5" y="470.5" width="3.5" height="3.5" fill="#007048"/><rect x="224.5" y="474.0" width="3.5" height="3.5" fill="#007048"/><rect x="228.0" y="474.0" width="3.5" height="3.5" fill="#007048"/><rect x="231.5" y="474.0" width="3.5" height="3.5" fill="#007048"/><rect x="235.0" y="474.0" width="3.5" height="3.5" fill="#007048"/><rect x="221.0" y="477.5" width="3.5" height="3.5" fill="#007048"/><rect x="224.5" y="477.5" width="3.5" height="3.5" fill="#007048"/><rect x="228.0" y="477.5" width="3.5" height="3.5" fill="#00e898"/><rect x="224.5" y="481.0" width="3.5" height="3.5" fill="#007048"/><rect x="228.0" y="481.0" width="3.5" height="3.5" fill="#007048"/>
<rect x="256.0" y="470.5" width="3.5" height="3.5" fill="#007048"/><rect x="259.5" y="470.5" width="3.5" height="3.5" fill="#00e898"/><rect x="256.0" y="474.0" width="3.5" height="3.5" fill="#007048"/><rect x="259.5" y="474.0" width="3.5" height="3.5" fill="#007048"/>
<rect x="263.0" y="484.5" width="3.5" height="3.5" fill="#007048"/><rect x="266.5" y="484.5" width="3.5" height="3.5" fill="#007048"/><rect x="270.0" y="484.5" width="3.5" height="3.5" fill="#00e898"/><rect x="259.5" y="488.0" width="3.5" height="3.5" fill="#007048"/><rect x="263.0" y="488.0" width="3.5" height="3.5" fill="#007048"/><rect x="266.5" y="488.0" width="3.5" height="3.5" fill="#007048"/><rect x="270.0" y="488.0" width="3.5" height="3.5" fill="#007048"/><rect x="273.5" y="488.0" width="3.5" height="3.5" fill="#007048"/><rect x="263.0" y="491.5" width="3.5" height="3.5" fill="#007048"/><rect x="266.5" y="491.5" width="3.5" height="3.5" fill="#007048"/><rect x="270.0" y="491.5" width="3.5" height="3.5" fill="#00e898"/><rect x="270.0" y="495.0" width="3.5" height="3.5" fill="#007048"/>
<rect x="242.0" y="488.0" width="3.5" height="3.5" fill="#00e898"/>
<rect x="312.0" y="470.5" width="3.5" height="3.5" fill="#007048"/><rect x="315.5" y="470.5" width="3.5" height="3.5" fill="#007048"/><rect x="319.0" y="470.5" width="3.5" height="3.5" fill="#007048"/><rect x="305.0" y="474.0" width="3.5" height="3.5" fill="#007048"/><rect x="308.5" y="474.0" width="3.5" height="3.5" fill="#007048"/><rect x="312.0" y="474.0" width="3.5" height="3.5" fill="#007048"/><rect x="315.5" y="474.0" width="3.5" height="3.5" fill="#007048"/><rect x="319.0" y="474.0" width="3.5" height="3.5" fill="#00e898"/><rect x="305.0" y="477.5" width="3.5" height="3.5" fill="#007048"/><rect x="308.5" y="477.5" width="3.5" height="3.5" fill="#00e898"/><rect x="312.0" y="477.5" width="3.5" height="3.5" fill="#00e898"/><rect x="315.5" y="477.5" width="3.5" height="3.5" fill="#00e898"/><rect x="319.0" y="477.5" width="3.5" height="3.5" fill="#007048"/><rect x="305.0" y="481.0" width="3.5" height="3.5" fill="#007048"/><rect x="308.5" y="481.0" width="3.5" height="3.5" fill="#00e898"/><rect x="312.0" y="481.0" width="3.5" height="3.5" fill="#00e898"/><rect x="315.5" y="481.0" width="3.5" height="3.5" fill="#007048"/><rect x="308.5" y="484.5" width="3.5" height="3.5" fill="#00e898"/><rect x="312.0" y="484.5" width="3.5" height="3.5" fill="#007048"/><rect x="315.5" y="484.5" width="3.5" height="3.5" fill="#007048"/><rect x="319.0" y="484.5" width="3.5" height="3.5" fill="#00e898"/><rect x="308.5" y="488.0" width="3.5" height="3.5" fill="#007048"/>
<rect x="189.5" y="537.0" width="3.5" height="3.5" fill="#007048"/><rect x="196.5" y="537.0" width="3.5" height="3.5" fill="#00e898"/><rect x="189.5" y="540.5" width="3.5" height="3.5" fill="#00e898"/><rect x="193.0" y="540.5" width="3.5" height="3.5" fill="#00e898"/><rect x="196.5" y="540.5" width="3.5" height="3.5" fill="#00e898"/><rect x="200.0" y="540.5" width="3.5" height="3.5" fill="#007048"/><rect x="189.5" y="544.0" width="3.5" height="3.5" fill="#00e898"/><rect x="193.0" y="544.0" width="3.5" height="3.5" fill="#007048"/><rect x="196.5" y="544.0" width="3.5" height="3.5" fill="#c8c8c8"/><rect x="200.0" y="544.0" width="3.5" height="3.5" fill="#00e898"/><rect x="186.0" y="547.5" width="3.5" height="3.5" fill="#00e898"/><rect x="189.5" y="547.5" width="3.5" height="3.5" fill="#c8c8c8"/><rect x="193.0" y="547.5" width="3.5" height="3.5" fill="#c8c8c8"/><rect x="196.5" y="547.5" width="3.5" height="3.5" fill="#c8c8c8"/><rect x="200.0" y="547.5" width="3.5" height="3.5" fill="#00e898"/><rect x="186.0" y="551.0" width="3.5" height="3.5" fill="#00e898"/><rect x="189.5" y="551.0" width="3.5" height="3.5" fill="#00e898"/><rect x="193.0" y="551.0" width="3.5" height="3.5" fill="#c8c8c8"/><rect x="196.5" y="551.0" width="3.5" height="3.5" fill="#007048"/><rect x="200.0" y="551.0" width="3.5" height="3.5" fill="#00e898"/><rect x="189.5" y="554.5" width="3.5" height="3.5" fill="#00e898"/><rect x="193.0" y="554.5" width="3.5" height="3.5" fill="#007048"/>
<rect x="224.5" y="523.0" width="3.5" height="3.5" fill="#007048"/><rect x="231.5" y="523.0" width="3.5" height="3.5" fill="#00e898"/><rect x="235.0" y="523.0" width="3.5" height="3.5" fill="#007048"/><rect x="214.0" y="526.5" width="3.5" height="3.5" fill="#007048"/><rect x="221.0" y="526.5" width="3.5" height="3.5" fill="#007048"/><rect x="224.5" y="526.5" width="3.5" height="3.5" fill="#00e898"/><rect x="228.0" y="526.5" width="3.5" height="3.5" fill="#00e898"/><rect x="231.5" y="526.5" width="3.5" height="3.5" fill="#007048"/><rect x="207.0" y="530.0" width="3.5" height="3.5" fill="#007048"/><rect x="221.0" y="530.0" width="3.5" height="3.5" fill="#007048"/><rect x="224.5" y="530.0" width="3.5" height="3.5" fill="#00e898"/><rect x="228.0" y="530.0" width="3.5" height="3.5" fill="#00e898"/><rect x="231.5" y="530.0" width="3.5" height="3.5" fill="#00e898"/><rect x="207.0" y="533.5" width="3.5" height="3.5" fill="#00e898"/><rect x="214.0" y="533.5" width="3.5" height="3.5" fill="#007048"/><rect x="217.5" y="533.5" width="3.5" height="3.5" fill="#00e898"/><rect x="224.5" y="533.5" width="3.5" height="3.5" fill="#d89030"/><rect x="228.0" y="533.5" width="3.5" height="3.5" fill="#e8b020"/><rect x="231.5" y="533.5" width="3.5" height="3.5" fill="#c8c8c8"/><rect x="235.0" y="533.5" width="3.5" height="3.5" fill="#00e898"/><rect x="238.5" y="533.5" width="3.5" height="3.5" fill="#00e898"/><rect x="242.0" y="533.5" width="3.5" height="3.5" fill="#007048"/><rect x="210.5" y="537.0" width="3.5" height="3.5" fill="#007048"/><rect x="214.0" y="537.0" width="3.5" height="3.5" fill="#00e898"/><rect x="217.5" y="537.0" width="3.5" height="3.5" fill="#d89030"/><rect x="221.0" y="537.0" width="3.5" height="3.5" fill="#e8b020"/><rect x="224.5" y="537.0" width="3.5" height="3.5" fill="#d89030"/><rect x="228.0" y="537.0" width="3.5" height="3.5" fill="#d89030"/><rect x="235.0" y="537.0" width="3.5" height="3.5" fill="#d89030"/><rect x="238.5" y="537.0" width="3.5" height="3.5" fill="#00e898"/><rect x="242.0" y="537.0" width="3.5" height="3.5" fill="#007048"/><rect x="207.0" y="540.5" width="3.5" height="3.5" fill="#00e898"/><rect x="210.5" y="540.5" width="3.5" height="3.5" fill="#00e898"/><rect x="217.5" y="540.5" width="3.5" height="3.5" fill="#00e898"/><rect x="221.0" y="540.5" width="3.5" height="3.5" fill="#d89030"/><rect x="224.5" y="540.5" width="3.5" height="3.5" fill="#e8b020"/><rect x="228.0" y="540.5" width="3.5" height="3.5" fill="#e8b020"/><rect x="231.5" y="540.5" width="3.5" height="3.5" fill="#d89030"/><rect x="235.0" y="540.5" width="3.5" height="3.5" fill="#e8b020"/><rect x="238.5" y="540.5" width="3.5" height="3.5" fill="#00e898"/><rect x="242.0" y="540.5" width="3.5" height="3.5" fill="#00e898"/><rect x="210.5" y="544.0" width="3.5" height="3.5" fill="#007048"/><rect x="217.5" y="544.0" width="3.5" height="3.5" fill="#00e898"/><rect x="221.0" y="544.0" width="3.5" height="3.5" fill="#d89030"/><rect x="224.5" y="544.0" width="3.5" height="3.5" fill="#d89030"/><rect x="228.0" y="544.0" width="3.5" height="3.5" fill="#e8b020"/><rect x="231.5" y="544.0" width="3.5" height="3.5" fill="#d89030"/><rect x="242.0" y="544.0" width="3.5" height="3.5" fill="#00e898"/><rect x="214.0" y="547.5" width="3.5" height="3.5" fill="#007048"/><rect x="217.5" y="547.5" width="3.5" height="3.5" fill="#00e898"/><rect x="221.0" y="547.5" width="3.5" height="3.5" fill="#007048"/><rect x="224.5" y="547.5" width="3.5" height="3.5" fill="#d89030"/><rect x="228.0" y="547.5" width="3.5" height="3.5" fill="#d89030"/><rect x="231.5" y="547.5" width="3.5" height="3.5" fill="#c8c8c8"/><rect x="235.0" y="547.5" width="3.5" height="3.5" fill="#007048"/><rect x="238.5" y="547.5" width="3.5" height="3.5" fill="#00e898"/><rect x="245.5" y="547.5" width="3.5" height="3.5" fill="#00e898"/><rect x="217.5" y="551.0" width="3.5" height="3.5" fill="#007048"/><rect x="221.0" y="551.0" width="3.5" height="3.5" fill="#c8c8c8"/><rect x="224.5" y="551.0" width="3.5" height="3.5" fill="#007048"/><rect x="228.0" y="551.0" width="3.5" height="3.5" fill="#00e898"/><rect x="231.5" y="551.0" width="3.5" height="3.5" fill="#c8c8c8"/><rect x="235.0" y="551.0" width="3.5" height="3.5" fill="#00e898"/><rect x="238.5" y="551.0" width="3.5" height="3.5" fill="#007048"/><rect x="221.0" y="554.5" width="3.5" height="3.5" fill="#00e898"/><rect x="224.5" y="554.5" width="3.5" height="3.5" fill="#007048"/><rect x="228.0" y="554.5" width="3.5" height="3.5" fill="#007048"/><rect x="235.0" y="554.5" width="3.5" height="3.5" fill="#00e898"/><rect x="238.5" y="554.5" width="3.5" height="3.5" fill="#00e898"/>
<rect x="235.0" y="551.0" width="3.5" height="3.5" fill="#c8c8c8"/><rect x="238.5" y="551.0" width="3.5" height="3.5" fill="#c8c8c8"/><rect x="242.0" y="551.0" width="3.5" height="3.5" fill="#c8c8c8"/><rect x="235.0" y="554.5" width="3.5" height="3.5" fill="#c8c8c8"/><rect x="238.5" y="554.5" width="3.5" height="3.5" fill="#c8c8c8"/><rect x="245.5" y="554.5" width="3.5" height="3.5" fill="#c8c8c8"/><rect x="235.0" y="558.0" width="3.5" height="3.5" fill="#c8c8c8"/><rect x="238.5" y="558.0" width="3.5" height="3.5" fill="#c8c8c8"/>
<rect x="196.5" y="575.5" width="3.5" height="3.5" fill="#007048"/><rect x="196.5" y="579.0" width="3.5" height="3.5" fill="#c8c8c8"/><rect x="200.0" y="579.0" width="3.5" height="3.5" fill="#c8c8c8"/><rect x="203.5" y="579.0" width="3.5" height="3.5" fill="#007048"/><rect x="196.5" y="582.5" width="3.5" height="3.5" fill="#007048"/><rect x="200.0" y="582.5" width="3.5" height="3.5" fill="#c8c8c8"/>
<rect x="182.5" y="582.5" width="3.5" height="3.5" fill="#007048"/><rect x="182.5" y="586.0" width="3.5" height="3.5" fill="#007048"/><rect x="186.0" y="586.0" width="3.5" height="3.5" fill="#007048"/><rect x="182.5" y="589.5" width="3.5" height="3.5" fill="#007048"/><rect x="186.0" y="589.5" width="3.5" height="3.5" fill="#00e898"/><rect x="182.5" y="593.0" width="3.5" height="3.5" fill="#007048"/>
<rect x="154.5" y="593.0" width="3.5" height="3.5" fill="#00e898"/><rect x="161.5" y="593.0" width="3.5" height="3.5" fill="#00e898"/><rect x="165.0" y="593.0" width="3.5" height="3.5" fill="#007048"/><rect x="151.0" y="596.5" width="3.5" height="3.5" fill="#00e898"/><rect x="154.5" y="596.5" width="3.5" height="3.5" fill="#00e898"/><rect x="158.0" y="596.5" width="3.5" height="3.5" fill="#00e898"/><rect x="161.5" y="596.5" width="3.5" height="3.5" fill="#00e898"/><rect x="165.0" y="596.5" width="3.5" height="3.5" fill="#00e898"/><rect x="154.5" y="600.0" width="3.5" height="3.5" fill="#007048"/><rect x="158.0" y="600.0" width="3.5" height="3.5" fill="#00e898"/><rect x="161.5" y="600.0" width="3.5" height="3.5" fill="#00e898"/>
<rect x="151.0" y="610.5" width="3.5" height="3.5" fill="#00e898"/><rect x="154.5" y="610.5" width="3.5" height="3.5" fill="#007048"/><rect x="158.0" y="610.5" width="3.5" height="3.5" fill="#007048"/><rect x="151.0" y="614.0" width="3.5" height="3.5" fill="#007048"/><rect x="154.5" y="614.0" width="3.5" height="3.5" fill="#c8c8c8"/><rect x="158.0" y="614.0" width="3.5" height="3.5" fill="#007048"/><rect x="151.0" y="617.5" width="3.5" height="3.5" fill="#007048"/><rect x="154.5" y="617.5" width="3.5" height="3.5" fill="#c8c8c8"/><rect x="158.0" y="617.5" width="3.5" height="3.5" fill="#00e898"/><rect x="154.5" y="621.0" width="3.5" height="3.5" fill="#007048"/><rect x="158.0" y="621.0" width="3.5" height="3.5" fill="#00e898"/>
<rect x="119.5" y="617.5" width="3.5" height="3.5" fill="#007048"/><rect x="126.5" y="617.5" width="3.5" height="3.5" fill="#007048"/><rect x="116.0" y="621.0" width="3.5" height="3.5" fill="#007048"/><rect x="119.5" y="621.0" width="3.5" height="3.5" fill="#00e898"/><rect x="123.0" y="621.0" width="3.5" height="3.5" fill="#007048"/><rect x="126.5" y="621.0" width="3.5" height="3.5" fill="#007048"/><rect x="130.0" y="621.0" width="3.5" height="3.5" fill="#007048"/><rect x="116.0" y="624.5" width="3.5" height="3.5" fill="#00e898"/><rect x="119.5" y="624.5" width="3.5" height="3.5" fill="#c8c8c8"/><rect x="123.0" y="624.5" width="3.5" height="3.5" fill="#c8c8c8"/><rect x="126.5" y="624.5" width="3.5" height="3.5" fill="#00e898"/><rect x="130.0" y="624.5" width="3.5" height="3.5" fill="#007048"/><rect x="116.0" y="628.0" width="3.5" height="3.5" fill="#007048"/><rect x="119.5" y="628.0" width="3.5" height="3.5" fill="#c8c8c8"/><rect x="123.0" y="628.0" width="3.5" height="3.5" fill="#c8c8c8"/><rect x="126.5" y="628.0" width="3.5" height="3.5" fill="#007048"/><rect x="130.0" y="628.0" width="3.5" height="3.5" fill="#00e898"/><rect x="116.0" y="631.5" width="3.5" height="3.5" fill="#007048"/><rect x="119.5" y="631.5" width="3.5" height="3.5" fill="#00e898"/><rect x="123.0" y="631.5" width="3.5" height="3.5" fill="#007048"/><rect x="126.5" y="631.5" width="3.5" height="3.5" fill="#007048"/><rect x="119.5" y="635.0" width="3.5" height="3.5" fill="#007048"/><rect x="123.0" y="635.0" width="3.5" height="3.5" fill="#00e898"/><rect x="126.5" y="635.0" width="3.5" height="3.5" fill="#007048"/>
<rect x="326.0" y="540.5" width="3.5" height="3.5" fill="#007048"/><rect x="329.5" y="540.5" width="3.5" height="3.5" fill="#00e898"/><rect x="322.5" y="544.0" width="3.5" height="3.5" fill="#00e898"/><rect x="326.0" y="544.0" width="3.5" height="3.5" fill="#00e898"/><rect x="329.5" y="544.0" width="3.5" height="3.5" fill="#00e898"/><rect x="333.0" y="544.0" width="3.5" height="3.5" fill="#00e898"/><rect x="326.0" y="547.5" width="3.5" height="3.5" fill="#00e898"/><rect x="329.5" y="547.5" width="3.5" height="3.5" fill="#00e898"/><rect x="333.0" y="547.5" width="3.5" height="3.5" fill="#00e898"/>
<rect x="354.0" y="533.5" width="3.5" height="3.5" fill="#007048"/><rect x="350.5" y="537.0" width="3.5" height="3.5" fill="#007048"/><rect x="354.0" y="537.0" width="3.5" height="3.5" fill="#007048"/><rect x="357.5" y="537.0" width="3.5" height="3.5" fill="#007048"/><rect x="350.5" y="540.5" width="3.5" height="3.5" fill="#007048"/><rect x="354.0" y="540.5" width="3.5" height="3.5" fill="#007048"/><rect x="357.5" y="540.5" width="3.5" height="3.5" fill="#007048"/><rect x="361.0" y="540.5" width="3.5" height="3.5" fill="#00e898"/>
<rect x="364.5" y="547.5" width="3.5" height="3.5" fill="#00e898"/><rect x="364.5" y="551.0" width="3.5" height="3.5" fill="#00e898"/><rect x="368.0" y="551.0" width="3.5" height="3.5" fill="#00e898"/><rect x="361.0" y="554.5" width="3.5" height="3.5" fill="#00e898"/><rect x="364.5" y="554.5" width="3.5" height="3.5" fill="#007048"/><rect x="368.0" y="554.5" width="3.5" height="3.5" fill="#00e898"/><rect x="364.5" y="558.0" width="3.5" height="3.5" fill="#00e898"/><rect x="368.0" y="558.0" width="3.5" height="3.5" fill="#00e898"/>
<rect x="382.0" y="554.5" width="3.5" height="3.5" fill="#007048"/><rect x="385.5" y="554.5" width="3.5" height="3.5" fill="#00e898"/><rect x="392.5" y="554.5" width="3.5" height="3.5" fill="#00e898"/><rect x="382.0" y="558.0" width="3.5" height="3.5" fill="#00e898"/><rect x="385.5" y="558.0" width="3.5" height="3.5" fill="#00e898"/><rect x="389.0" y="558.0" width="3.5" height="3.5" fill="#00e898"/><rect x="392.5" y="558.0" width="3.5" height="3.5" fill="#00e898"/>
<rect x="357.5" y="561.5" width="3.5" height="3.5" fill="#00e898"/><rect x="357.5" y="565.0" width="3.5" height="3.5" fill="#00e898"/><rect x="361.0" y="565.0" width="3.5" height="3.5" fill="#00e898"/><rect x="364.5" y="565.0" width="3.5" height="3.5" fill="#00e898"/><rect x="357.5" y="568.5" width="3.5" height="3.5" fill="#007048"/><rect x="361.0" y="568.5" width="3.5" height="3.5" fill="#007048"/><rect x="364.5" y="568.5" width="3.5" height="3.5" fill="#00e898"/><rect x="354.0" y="572.0" width="3.5" height="3.5" fill="#00e898"/><rect x="357.5" y="572.0" width="3.5" height="3.5" fill="#007048"/><rect x="361.0" y="572.0" width="3.5" height="3.5" fill="#00e898"/><rect x="364.5" y="572.0" width="3.5" height="3.5" fill="#00e898"/><rect x="368.0" y="572.0" width="3.5" height="3.5" fill="#00e898"/><rect x="371.5" y="572.0" width="3.5" height="3.5" fill="#00e898"/><rect x="347.0" y="575.5" width="3.5" height="3.5" fill="#007048"/><rect x="350.5" y="575.5" width="3.5" height="3.5" fill="#00e898"/><rect x="354.0" y="575.5" width="3.5" height="3.5" fill="#00e898"/><rect x="357.5" y="575.5" width="3.5" height="3.5" fill="#00e898"/><rect x="361.0" y="575.5" width="3.5" height="3.5" fill="#00e898"/><rect x="364.5" y="575.5" width="3.5" height="3.5" fill="#00e898"/><rect x="368.0" y="575.5" width="3.5" height="3.5" fill="#00e898"/><rect x="371.5" y="575.5" width="3.5" height="3.5" fill="#007048"/><rect x="350.5" y="579.0" width="3.5" height="3.5" fill="#007048"/><rect x="354.0" y="579.0" width="3.5" height="3.5" fill="#00e898"/><rect x="357.5" y="579.0" width="3.5" height="3.5" fill="#00e898"/><rect x="361.0" y="579.0" width="3.5" height="3.5" fill="#00e898"/><rect x="364.5" y="579.0" width="3.5" height="3.5" fill="#00e898"/><rect x="368.0" y="579.0" width="3.5" height="3.5" fill="#007048"/><rect x="364.5" y="582.5" width="3.5" height="3.5" fill="#00e898"/>
<rect x="354.0" y="600.0" width="3.5" height="3.5" fill="#007048"/><rect x="361.0" y="600.0" width="3.5" height="3.5" fill="#007048"/><rect x="340.0" y="603.5" width="3.5" height="3.5" fill="#007048"/><rect x="343.5" y="603.5" width="3.5" height="3.5" fill="#00e898"/><rect x="361.0" y="603.5" width="3.5" height="3.5" fill="#007048"/><rect x="336.5" y="607.0" width="3.5" height="3.5" fill="#007048"/><rect x="340.0" y="607.0" width="3.5" height="3.5" fill="#00e898"/><rect x="343.5" y="607.0" width="3.5" height="3.5" fill="#007048"/><rect x="350.5" y="607.0" width="3.5" height="3.5" fill="#007048"/><rect x="354.0" y="607.0" width="3.5" height="3.5" fill="#00e898"/><rect x="357.5" y="607.0" width="3.5" height="3.5" fill="#007048"/><rect x="361.0" y="607.0" width="3.5" height="3.5" fill="#007048"/><rect x="364.5" y="607.0" width="3.5" height="3.5" fill="#007048"/><rect x="368.0" y="607.0" width="3.5" height="3.5" fill="#007048"/><rect x="371.5" y="607.0" width="3.5" height="3.5" fill="#007048"/><rect x="336.5" y="610.5" width="3.5" height="3.5" fill="#00e898"/><rect x="343.5" y="610.5" width="3.5" height="3.5" fill="#d89030"/><rect x="347.0" y="610.5" width="3.5" height="3.5" fill="#c8c8c8"/><rect x="350.5" y="610.5" width="3.5" height="3.5" fill="#c8c8c8"/><rect x="354.0" y="610.5" width="3.5" height="3.5" fill="#c8c8c8"/><rect x="357.5" y="610.5" width="3.5" height="3.5" fill="#c8c8c8"/><rect x="361.0" y="610.5" width="3.5" height="3.5" fill="#007048"/><rect x="364.5" y="610.5" width="3.5" height="3.5" fill="#00e898"/><rect x="368.0" y="610.5" width="3.5" height="3.5" fill="#00e898"/><rect x="333.0" y="614.0" width="3.5" height="3.5" fill="#007048"/><rect x="336.5" y="614.0" width="3.5" height="3.5" fill="#00e898"/><rect x="343.5" y="614.0" width="3.5" height="3.5" fill="#c8c8c8"/><rect x="347.0" y="614.0" width="3.5" height="3.5" fill="#d89030"/><rect x="350.5" y="614.0" width="3.5" height="3.5" fill="#e8b020"/><rect x="354.0" y="614.0" width="3.5" height="3.5" fill="#d89030"/><rect x="357.5" y="614.0" width="3.5" height="3.5" fill="#d89030"/><rect x="361.0" y="614.0" width="3.5" height="3.5" fill="#d89030"/><rect x="364.5" y="614.0" width="3.5" height="3.5" fill="#c8c8c8"/><rect x="368.0" y="614.0" width="3.5" height="3.5" fill="#00e898"/><rect x="371.5" y="614.0" width="3.5" height="3.5" fill="#00e898"/><rect x="375.0" y="614.0" width="3.5" height="3.5" fill="#00e898"/><rect x="329.5" y="617.5" width="3.5" height="3.5" fill="#007048"/><rect x="333.0" y="617.5" width="3.5" height="3.5" fill="#007048"/><rect x="340.0" y="617.5" width="3.5" height="3.5" fill="#007048"/><rect x="343.5" y="617.5" width="3.5" height="3.5" fill="#c8c8c8"/><rect x="347.0" y="617.5" width="3.5" height="3.5" fill="#d89030"/><rect x="350.5" y="617.5" width="3.5" height="3.5" fill="#d89030"/><rect x="354.0" y="617.5" width="3.5" height="3.5" fill="#d89030"/><rect x="357.5" y="617.5" width="3.5" height="3.5" fill="#d89030"/><rect x="361.0" y="617.5" width="3.5" height="3.5" fill="#e8b020"/><rect x="364.5" y="617.5" width="3.5" height="3.5" fill="#00e898"/><rect x="368.0" y="617.5" width="3.5" height="3.5" fill="#00e898"/><rect x="375.0" y="617.5" width="3.5" height="3.5" fill="#00e898"/><rect x="336.5" y="621.0" width="3.5" height="3.5" fill="#00e898"/><rect x="343.5" y="621.0" width="3.5" height="3.5" fill="#d89030"/><rect x="347.0" y="621.0" width="3.5" height="3.5" fill="#e8b020"/><rect x="350.5" y="621.0" width="3.5" height="3.5" fill="#d89030"/><rect x="354.0" y="621.0" width="3.5" height="3.5" fill="#e8b020"/><rect x="357.5" y="621.0" width="3.5" height="3.5" fill="#d89030"/><rect x="361.0" y="621.0" width="3.5" height="3.5" fill="#d89030"/><rect x="364.5" y="621.0" width="3.5" height="3.5" fill="#c8c8c8"/><rect x="368.0" y="621.0" width="3.5" height="3.5" fill="#c8c8c8"/><rect x="371.5" y="621.0" width="3.5" height="3.5" fill="#00e898"/><rect x="375.0" y="621.0" width="3.5" height="3.5" fill="#007048"/><rect x="336.5" y="624.5" width="3.5" height="3.5" fill="#c8c8c8"/><rect x="340.0" y="624.5" width="3.5" height="3.5" fill="#c8c8c8"/><rect x="343.5" y="624.5" width="3.5" height="3.5" fill="#d89030"/><rect x="347.0" y="624.5" width="3.5" height="3.5" fill="#e8b020"/><rect x="354.0" y="624.5" width="3.5" height="3.5" fill="#e8b020"/><rect x="357.5" y="624.5" width="3.5" height="3.5" fill="#e8b020"/><rect x="364.5" y="624.5" width="3.5" height="3.5" fill="#c8c8c8"/><rect x="368.0" y="624.5" width="3.5" height="3.5" fill="#007048"/><rect x="371.5" y="624.5" width="3.5" height="3.5" fill="#007048"/><rect x="336.5" y="628.0" width="3.5" height="3.5" fill="#00e898"/><rect x="340.0" y="628.0" width="3.5" height="3.5" fill="#007048"/><rect x="343.5" y="628.0" width="3.5" height="3.5" fill="#00e898"/><rect x="347.0" y="628.0" width="3.5" height="3.5" fill="#c8c8c8"/><rect x="350.5" y="628.0" width="3.5" height="3.5" fill="#d89030"/><rect x="354.0" y="628.0" width="3.5" height="3.5" fill="#c8c8c8"/><rect x="357.5" y="628.0" width="3.5" height="3.5" fill="#c8c8c8"/><rect x="361.0" y="628.0" width="3.5" height="3.5" fill="#d89030"/><rect x="364.5" y="628.0" width="3.5" height="3.5" fill="#c8c8c8"/><rect x="368.0" y="628.0" width="3.5" height="3.5" fill="#00e898"/><rect x="371.5" y="628.0" width="3.5" height="3.5" fill="#00e898"/><rect x="343.5" y="631.5" width="3.5" height="3.5" fill="#c8c8c8"/><rect x="347.0" y="631.5" width="3.5" height="3.5" fill="#e8b020"/><rect x="350.5" y="631.5" width="3.5" height="3.5" fill="#c8c8c8"/><rect x="354.0" y="631.5" width="3.5" height="3.5" fill="#d89030"/><rect x="357.5" y="631.5" width="3.5" height="3.5" fill="#c8c8c8"/><rect x="361.0" y="631.5" width="3.5" height="3.5" fill="#c8c8c8"/><rect x="364.5" y="631.5" width="3.5" height="3.5" fill="#007048"/><rect x="375.0" y="631.5" width="3.5" height="3.5" fill="#00e898"/><rect x="347.0" y="635.0" width="3.5" height="3.5" fill="#00e898"/><rect x="350.5" y="635.0" width="3.5" height="3.5" fill="#c8c8c8"/><rect x="354.0" y="635.0" width="3.5" height="3.5" fill="#00e898"/><rect x="357.5" y="635.0" width="3.5" height="3.5" fill="#00e898"/><rect x="361.0" y="635.0" width="3.5" height="3.5" fill="#00e898"/><rect x="368.0" y="635.0" width="3.5" height="3.5" fill="#00e898"/><rect x="347.0" y="638.5" width="3.5" height="3.5" fill="#00e898"/><rect x="350.5" y="638.5" width="3.5" height="3.5" fill="#00e898"/><rect x="354.0" y="638.5" width="3.5" height="3.5" fill="#007048"/><rect x="357.5" y="638.5" width="3.5" height="3.5" fill="#007048"/><rect x="361.0" y="638.5" width="3.5" height="3.5" fill="#00e898"/><rect x="364.5" y="638.5" width="3.5" height="3.5" fill="#007048"/>
<rect x="417.0" y="593.0" width="3.5" height="3.5" fill="#00e898"/><rect x="424.0" y="593.0" width="3.5" height="3.5" fill="#00e898"/><rect x="420.5" y="596.5" width="3.5" height="3.5" fill="#00e898"/><rect x="424.0" y="596.5" width="3.5" height="3.5" fill="#00e898"/><rect x="427.5" y="596.5" width="3.5" height="3.5" fill="#00e898"/><rect x="399.5" y="600.0" width="3.5" height="3.5" fill="#00e898"/><rect x="403.0" y="600.0" width="3.5" height="3.5" fill="#007048"/><rect x="410.0" y="600.0" width="3.5" height="3.5" fill="#007048"/><rect x="413.5" y="600.0" width="3.5" height="3.5" fill="#00e898"/><rect x="417.0" y="600.0" width="3.5" height="3.5" fill="#007048"/><rect x="420.5" y="600.0" width="3.5" height="3.5" fill="#00e898"/><rect x="424.0" y="600.0" width="3.5" height="3.5" fill="#00e898"/><rect x="431.0" y="600.0" width="3.5" height="3.5" fill="#00e898"/><rect x="399.5" y="603.5" width="3.5" height="3.5" fill="#007048"/><rect x="403.0" y="603.5" width="3.5" height="3.5" fill="#007048"/><rect x="406.5" y="603.5" width="3.5" height="3.5" fill="#00e898"/><rect x="410.0" y="603.5" width="3.5" height="3.5" fill="#c8c8c8"/><rect x="413.5" y="603.5" width="3.5" height="3.5" fill="#c8c8c8"/><rect x="417.0" y="603.5" width="3.5" height="3.5" fill="#c8c8c8"/><rect x="420.5" y="603.5" width="3.5" height="3.5" fill="#c8c8c8"/><rect x="424.0" y="603.5" width="3.5" height="3.5" fill="#00e898"/><rect x="427.5" y="603.5" width="3.5" height="3.5" fill="#007048"/><rect x="431.0" y="603.5" width="3.5" height="3.5" fill="#00e898"/><rect x="403.0" y="607.0" width="3.5" height="3.5" fill="#007048"/><rect x="406.5" y="607.0" width="3.5" height="3.5" fill="#c8c8c8"/><rect x="410.0" y="607.0" width="3.5" height="3.5" fill="#c8c8c8"/><rect x="413.5" y="607.0" width="3.5" height="3.5" fill="#c8c8c8"/><rect x="417.0" y="607.0" width="3.5" height="3.5" fill="#c8c8c8"/><rect x="420.5" y="607.0" width="3.5" height="3.5" fill="#c8c8c8"/><rect x="424.0" y="607.0" width="3.5" height="3.5" fill="#c8c8c8"/><rect x="427.5" y="607.0" width="3.5" height="3.5" fill="#007048"/><rect x="431.0" y="607.0" width="3.5" height="3.5" fill="#007048"/><rect x="434.5" y="607.0" width="3.5" height="3.5" fill="#007048"/><rect x="403.0" y="610.5" width="3.5" height="3.5" fill="#00e898"/><rect x="406.5" y="610.5" width="3.5" height="3.5" fill="#00e898"/><rect x="410.0" y="610.5" width="3.5" height="3.5" fill="#c8c8c8"/><rect x="413.5" y="610.5" width="3.5" height="3.5" fill="#c8c8c8"/><rect x="417.0" y="610.5" width="3.5" height="3.5" fill="#c8c8c8"/><rect x="420.5" y="610.5" width="3.5" height="3.5" fill="#c8c8c8"/><rect x="424.0" y="610.5" width="3.5" height="3.5" fill="#c8c8c8"/><rect x="427.5" y="610.5" width="3.5" height="3.5" fill="#00e898"/><rect x="431.0" y="610.5" width="3.5" height="3.5" fill="#00e898"/><rect x="434.5" y="610.5" width="3.5" height="3.5" fill="#00e898"/><rect x="403.0" y="614.0" width="3.5" height="3.5" fill="#007048"/><rect x="406.5" y="614.0" width="3.5" height="3.5" fill="#007048"/><rect x="410.0" y="614.0" width="3.5" height="3.5" fill="#c8c8c8"/><rect x="413.5" y="614.0" width="3.5" height="3.5" fill="#c8c8c8"/><rect x="417.0" y="614.0" width="3.5" height="3.5" fill="#c8c8c8"/><rect x="420.5" y="614.0" width="3.5" height="3.5" fill="#c8c8c8"/><rect x="424.0" y="614.0" width="3.5" height="3.5" fill="#c8c8c8"/><rect x="427.5" y="614.0" width="3.5" height="3.5" fill="#00e898"/><rect x="431.0" y="614.0" width="3.5" height="3.5" fill="#00e898"/><rect x="410.0" y="617.5" width="3.5" height="3.5" fill="#007048"/><rect x="413.5" y="617.5" width="3.5" height="3.5" fill="#007048"/><rect x="417.0" y="617.5" width="3.5" height="3.5" fill="#c8c8c8"/><rect x="420.5" y="617.5" width="3.5" height="3.5" fill="#00e898"/><rect x="424.0" y="617.5" width="3.5" height="3.5" fill="#007048"/><rect x="427.5" y="617.5" width="3.5" height="3.5" fill="#00e898"/><rect x="431.0" y="617.5" width="3.5" height="3.5" fill="#00e898"/><rect x="434.5" y="617.5" width="3.5" height="3.5" fill="#00e898"/><rect x="410.0" y="621.0" width="3.5" height="3.5" fill="#00e898"/><rect x="413.5" y="621.0" width="3.5" height="3.5" fill="#00e898"/><rect x="417.0" y="621.0" width="3.5" height="3.5" fill="#00e898"/><rect x="420.5" y="621.0" width="3.5" height="3.5" fill="#00e898"/><rect x="424.0" y="621.0" width="3.5" height="3.5" fill="#00e898"/><rect x="427.5" y="621.0" width="3.5" height="3.5" fill="#007048"/><rect x="413.5" y="624.5" width="3.5" height="3.5" fill="#00e898"/><rect x="417.0" y="624.5" width="3.5" height="3.5" fill="#00e898"/>
<rect x="361.0" y="652.5" width="3.5" height="3.5" fill="#00e898"/><rect x="357.5" y="656.0" width="3.5" height="3.5" fill="#00e898"/><rect x="361.0" y="656.0" width="3.5" height="3.5" fill="#00e898"/><rect x="357.5" y="659.5" width="3.5" height="3.5" fill="#00e898"/><rect x="361.0" y="659.5" width="3.5" height="3.5" fill="#00e898"/><rect x="364.5" y="659.5" width="3.5" height="3.5" fill="#00e898"/><rect x="357.5" y="663.0" width="3.5" height="3.5" fill="#00e898"/><rect x="361.0" y="663.0" width="3.5" height="3.5" fill="#00e898"/><rect x="357.5" y="666.5" width="3.5" height="3.5" fill="#00e898"/>
<rect x="431.0" y="628.0" width="3.5" height="3.5" fill="#007048"/><rect x="427.5" y="631.5" width="3.5" height="3.5" fill="#00e898"/><rect x="431.0" y="631.5" width="3.5" height="3.5" fill="#007048"/><rect x="434.5" y="631.5" width="3.5" height="3.5" fill="#00e898"/><rect x="424.0" y="635.0" width="3.5" height="3.5" fill="#007048"/><rect x="427.5" y="635.0" width="3.5" height="3.5" fill="#c8c8c8"/><rect x="431.0" y="635.0" width="3.5" height="3.5" fill="#c8c8c8"/><rect x="434.5" y="635.0" width="3.5" height="3.5" fill="#00e898"/><rect x="438.0" y="635.0" width="3.5" height="3.5" fill="#00e898"/><rect x="424.0" y="638.5" width="3.5" height="3.5" fill="#007048"/><rect x="427.5" y="638.5" width="3.5" height="3.5" fill="#c8c8c8"/><rect x="431.0" y="638.5" width="3.5" height="3.5" fill="#c8c8c8"/><rect x="434.5" y="638.5" width="3.5" height="3.5" fill="#007048"/><rect x="424.0" y="642.0" width="3.5" height="3.5" fill="#007048"/><rect x="427.5" y="642.0" width="3.5" height="3.5" fill="#007048"/><rect x="431.0" y="642.0" width="3.5" height="3.5" fill="#007048"/><rect x="434.5" y="642.0" width="3.5" height="3.5" fill="#007048"/><rect x="431.0" y="645.5" width="3.5" height="3.5" fill="#00e898"/>
<rect x="403.0" y="652.5" width="3.5" height="3.5" fill="#00e898"/><rect x="417.0" y="652.5" width="3.5" height="3.5" fill="#00e898"/><rect x="420.5" y="652.5" width="3.5" height="3.5" fill="#007048"/><rect x="427.5" y="652.5" width="3.5" height="3.5" fill="#007048"/><rect x="399.5" y="656.0" width="3.5" height="3.5" fill="#007048"/><rect x="403.0" y="656.0" width="3.5" height="3.5" fill="#007048"/><rect x="406.5" y="656.0" width="3.5" height="3.5" fill="#007048"/><rect x="410.0" y="656.0" width="3.5" height="3.5" fill="#007048"/><rect x="413.5" y="656.0" width="3.5" height="3.5" fill="#c8c8c8"/><rect x="420.5" y="656.0" width="3.5" height="3.5" fill="#007048"/><rect x="403.0" y="659.5" width="3.5" height="3.5" fill="#007048"/><rect x="406.5" y="659.5" width="3.5" height="3.5" fill="#007048"/><rect x="410.0" y="659.5" width="3.5" height="3.5" fill="#007048"/><rect x="413.5" y="659.5" width="3.5" height="3.5" fill="#c8c8c8"/><rect x="417.0" y="659.5" width="3.5" height="3.5" fill="#c8c8c8"/><rect x="420.5" y="659.5" width="3.5" height="3.5" fill="#007048"/><rect x="424.0" y="659.5" width="3.5" height="3.5" fill="#00e898"/><rect x="406.5" y="663.0" width="3.5" height="3.5" fill="#c8c8c8"/><rect x="410.0" y="663.0" width="3.5" height="3.5" fill="#c8c8c8"/><rect x="413.5" y="663.0" width="3.5" height="3.5" fill="#c8c8c8"/><rect x="417.0" y="663.0" width="3.5" height="3.5" fill="#c8c8c8"/><rect x="420.5" y="663.0" width="3.5" height="3.5" fill="#c8c8c8"/><rect x="424.0" y="663.0" width="3.5" height="3.5" fill="#007048"/><rect x="427.5" y="663.0" width="3.5" height="3.5" fill="#007048"/><rect x="403.0" y="666.5" width="3.5" height="3.5" fill="#00e898"/><rect x="406.5" y="666.5" width="3.5" height="3.5" fill="#007048"/><rect x="410.0" y="666.5" width="3.5" height="3.5" fill="#c8c8c8"/><rect x="413.5" y="666.5" width="3.5" height="3.5" fill="#c8c8c8"/><rect x="417.0" y="666.5" width="3.5" height="3.5" fill="#c8c8c8"/><rect x="420.5" y="666.5" width="3.5" height="3.5" fill="#c8c8c8"/><rect x="424.0" y="666.5" width="3.5" height="3.5" fill="#007048"/><rect x="403.0" y="670.0" width="3.5" height="3.5" fill="#00e898"/><rect x="406.5" y="670.0" width="3.5" height="3.5" fill="#007048"/><rect x="413.5" y="670.0" width="3.5" height="3.5" fill="#c8c8c8"/><rect x="417.0" y="670.0" width="3.5" height="3.5" fill="#c8c8c8"/><rect x="420.5" y="670.0" width="3.5" height="3.5" fill="#c8c8c8"/><rect x="424.0" y="670.0" width="3.5" height="3.5" fill="#c8c8c8"/><rect x="427.5" y="670.0" width="3.5" height="3.5" fill="#007048"/><rect x="406.5" y="673.5" width="3.5" height="3.5" fill="#c8c8c8"/><rect x="410.0" y="673.5" width="3.5" height="3.5" fill="#00e898"/><rect x="417.0" y="673.5" width="3.5" height="3.5" fill="#c8c8c8"/><rect x="420.5" y="673.5" width="3.5" height="3.5" fill="#c8c8c8"/><rect x="427.5" y="673.5" width="3.5" height="3.5" fill="#00e898"/><rect x="431.0" y="673.5" width="3.5" height="3.5" fill="#007048"/><rect x="399.5" y="677.0" width="3.5" height="3.5" fill="#007048"/><rect x="403.0" y="677.0" width="3.5" height="3.5" fill="#00e898"/><rect x="406.5" y="677.0" width="3.5" height="3.5" fill="#c8c8c8"/><rect x="410.0" y="677.0" width="3.5" height="3.5" fill="#c8c8c8"/><rect x="413.5" y="677.0" width="3.5" height="3.5" fill="#c8c8c8"/><rect x="417.0" y="677.0" width="3.5" height="3.5" fill="#c8c8c8"/><rect x="420.5" y="677.0" width="3.5" height="3.5" fill="#c8c8c8"/><rect x="424.0" y="677.0" width="3.5" height="3.5" fill="#00e898"/><rect x="427.5" y="677.0" width="3.5" height="3.5" fill="#007048"/><rect x="431.0" y="677.0" width="3.5" height="3.5" fill="#007048"/><rect x="403.0" y="680.5" width="3.5" height="3.5" fill="#007048"/><rect x="406.5" y="680.5" width="3.5" height="3.5" fill="#00e898"/><rect x="410.0" y="680.5" width="3.5" height="3.5" fill="#007048"/><rect x="413.5" y="680.5" width="3.5" height="3.5" fill="#007048"/><rect x="417.0" y="680.5" width="3.5" height="3.5" fill="#c8c8c8"/><rect x="420.5" y="680.5" width="3.5" height="3.5" fill="#007048"/><rect x="424.0" y="680.5" width="3.5" height="3.5" fill="#007048"/><rect x="399.5" y="684.0" width="3.5" height="3.5" fill="#007048"/><rect x="406.5" y="684.0" width="3.5" height="3.5" fill="#007048"/><rect x="410.0" y="684.0" width="3.5" height="3.5" fill="#007048"/><rect x="413.5" y="684.0" width="3.5" height="3.5" fill="#007048"/><rect x="417.0" y="684.0" width="3.5" height="3.5" fill="#c8c8c8"/><rect x="420.5" y="684.0" width="3.5" height="3.5" fill="#007048"/><rect x="424.0" y="684.0" width="3.5" height="3.5" fill="#007048"/><rect x="413.5" y="687.5" width="3.5" height="3.5" fill="#00e898"/><rect x="417.0" y="687.5" width="3.5" height="3.5" fill="#00e898"/><rect x="420.5" y="687.5" width="3.5" height="3.5" fill="#007048"/><rect x="406.5" y="691.0" width="3.5" height="3.5" fill="#007048"/><rect x="410.0" y="691.0" width="3.5" height="3.5" fill="#007048"/><rect x="413.5" y="691.0" width="3.5" height="3.5" fill="#007048"/><rect x="417.0" y="691.0" width="3.5" height="3.5" fill="#007048"/><rect x="417.0" y="694.5" width="3.5" height="3.5" fill="#007048"/>
<rect x="375.0" y="687.5" width="3.5" height="3.5" fill="#00e898"/><rect x="378.5" y="687.5" width="3.5" height="3.5" fill="#007048"/><rect x="375.0" y="691.0" width="3.5" height="3.5" fill="#00e898"/><rect x="368.0" y="694.5" width="3.5" height="3.5" fill="#007048"/><rect x="371.5" y="694.5" width="3.5" height="3.5" fill="#007048"/><rect x="375.0" y="694.5" width="3.5" height="3.5" fill="#00e898"/><rect x="378.5" y="694.5" width="3.5" height="3.5" fill="#007048"/><rect x="382.0" y="694.5" width="3.5" height="3.5" fill="#00e898"/><rect x="385.5" y="694.5" width="3.5" height="3.5" fill="#007048"/><rect x="389.0" y="694.5" width="3.5" height="3.5" fill="#007048"/><rect x="371.5" y="698.0" width="3.5" height="3.5" fill="#00e898"/><rect x="375.0" y="698.0" width="3.5" height="3.5" fill="#00e898"/><rect x="378.5" y="698.0" width="3.5" height="3.5" fill="#007048"/><rect x="382.0" y="698.0" width="3.5" height="3.5" fill="#00e898"/><rect x="385.5" y="698.0" width="3.5" height="3.5" fill="#00e898"/><rect x="389.0" y="698.0" width="3.5" height="3.5" fill="#007048"/><rect x="361.0" y="701.5" width="3.5" height="3.5" fill="#00e898"/><rect x="364.5" y="701.5" width="3.5" height="3.5" fill="#007048"/><rect x="371.5" y="701.5" width="3.5" height="3.5" fill="#00e898"/><rect x="375.0" y="701.5" width="3.5" height="3.5" fill="#00e898"/><rect x="378.5" y="701.5" width="3.5" height="3.5" fill="#007048"/><rect x="382.0" y="701.5" width="3.5" height="3.5" fill="#00e898"/><rect x="385.5" y="701.5" width="3.5" height="3.5" fill="#007048"/><rect x="389.0" y="701.5" width="3.5" height="3.5" fill="#007048"/><rect x="392.5" y="701.5" width="3.5" height="3.5" fill="#00e898"/>
<rect x="333.0" y="698.0" width="3.5" height="3.5" fill="#00e898"/><rect x="336.5" y="698.0" width="3.5" height="3.5" fill="#00e898"/><rect x="350.5" y="698.0" width="3.5" height="3.5" fill="#00e898"/><rect x="326.0" y="701.5" width="3.5" height="3.5" fill="#007048"/><rect x="333.0" y="701.5" width="3.5" height="3.5" fill="#007048"/><rect x="340.0" y="701.5" width="3.5" height="3.5" fill="#00e898"/><rect x="350.5" y="701.5" width="3.5" height="3.5" fill="#00e898"/><rect x="326.0" y="705.0" width="3.5" height="3.5" fill="#007048"/><rect x="329.5" y="705.0" width="3.5" height="3.5" fill="#007048"/><rect x="336.5" y="705.0" width="3.5" height="3.5" fill="#c8c8c8"/><rect x="340.0" y="705.0" width="3.5" height="3.5" fill="#c8c8c8"/><rect x="343.5" y="705.0" width="3.5" height="3.5" fill="#c8c8c8"/><rect x="347.0" y="705.0" width="3.5" height="3.5" fill="#00e898"/><rect x="350.5" y="705.0" width="3.5" height="3.5" fill="#c8c8c8"/><rect x="354.0" y="705.0" width="3.5" height="3.5" fill="#007048"/><rect x="357.5" y="705.0" width="3.5" height="3.5" fill="#007048"/><rect x="361.0" y="705.0" width="3.5" height="3.5" fill="#007048"/><rect x="319.0" y="708.5" width="3.5" height="3.5" fill="#00e898"/><rect x="322.5" y="708.5" width="3.5" height="3.5" fill="#007048"/><rect x="326.0" y="708.5" width="3.5" height="3.5" fill="#00e898"/><rect x="329.5" y="708.5" width="3.5" height="3.5" fill="#007048"/><rect x="333.0" y="708.5" width="3.5" height="3.5" fill="#c8c8c8"/><rect x="336.5" y="708.5" width="3.5" height="3.5" fill="#d89030"/><rect x="340.0" y="708.5" width="3.5" height="3.5" fill="#d89030"/><rect x="343.5" y="708.5" width="3.5" height="3.5" fill="#d89030"/><rect x="347.0" y="708.5" width="3.5" height="3.5" fill="#d89030"/><rect x="350.5" y="708.5" width="3.5" height="3.5" fill="#d89030"/><rect x="354.0" y="708.5" width="3.5" height="3.5" fill="#c8c8c8"/><rect x="357.5" y="708.5" width="3.5" height="3.5" fill="#00e898"/><rect x="361.0" y="708.5" width="3.5" height="3.5" fill="#007048"/><rect x="326.0" y="712.0" width="3.5" height="3.5" fill="#00e898"/><rect x="329.5" y="712.0" width="3.5" height="3.5" fill="#007048"/><rect x="333.0" y="712.0" width="3.5" height="3.5" fill="#c8c8c8"/><rect x="336.5" y="712.0" width="3.5" height="3.5" fill="#c8c8c8"/><rect x="340.0" y="712.0" width="3.5" height="3.5" fill="#d89030"/><rect x="343.5" y="712.0" width="3.5" height="3.5" fill="#d89030"/><rect x="347.0" y="712.0" width="3.5" height="3.5" fill="#d89030"/><rect x="350.5" y="712.0" width="3.5" height="3.5" fill="#c8c8c8"/><rect x="354.0" y="712.0" width="3.5" height="3.5" fill="#c8c8c8"/><rect x="357.5" y="712.0" width="3.5" height="3.5" fill="#00e898"/><rect x="361.0" y="712.0" width="3.5" height="3.5" fill="#007048"/><rect x="326.0" y="715.5" width="3.5" height="3.5" fill="#00e898"/><rect x="333.0" y="715.5" width="3.5" height="3.5" fill="#c8c8c8"/><rect x="336.5" y="715.5" width="3.5" height="3.5" fill="#c8c8c8"/><rect x="340.0" y="715.5" width="3.5" height="3.5" fill="#c8c8c8"/><rect x="343.5" y="715.5" width="3.5" height="3.5" fill="#c8c8c8"/><rect x="347.0" y="715.5" width="3.5" height="3.5" fill="#c8c8c8"/><rect x="350.5" y="715.5" width="3.5" height="3.5" fill="#c8c8c8"/><rect x="354.0" y="715.5" width="3.5" height="3.5" fill="#00e898"/><rect x="357.5" y="715.5" width="3.5" height="3.5" fill="#007048"/><rect x="347.0" y="719.0" width="3.5" height="3.5" fill="#007048"/><rect x="354.0" y="719.0" width="3.5" height="3.5" fill="#007048"/><rect x="357.5" y="719.0" width="3.5" height="3.5" fill="#007048"/><rect x="340.0" y="722.5" width="3.5" height="3.5" fill="#00e898"/><rect x="354.0" y="722.5" width="3.5" height="3.5" fill="#00e898"/>
<rect x="343.5" y="722.5" width="3.5" height="3.5" fill="#00e898"/><rect x="340.0" y="726.0" width="3.5" height="3.5" fill="#00e898"/><rect x="343.5" y="726.0" width="3.5" height="3.5" fill="#007048"/><rect x="347.0" y="726.0" width="3.5" height="3.5" fill="#007048"/><rect x="350.5" y="726.0" width="3.5" height="3.5" fill="#007048"/><rect x="336.5" y="729.5" width="3.5" height="3.5" fill="#007048"/><rect x="340.0" y="729.5" width="3.5" height="3.5" fill="#007048"/><rect x="347.0" y="729.5" width="3.5" height="3.5" fill="#007048"/><rect x="350.5" y="729.5" width="3.5" height="3.5" fill="#007048"/><rect x="354.0" y="729.5" width="3.5" height="3.5" fill="#00e898"/><rect x="329.5" y="733.0" width="3.5" height="3.5" fill="#007048"/><rect x="333.0" y="733.0" width="3.5" height="3.5" fill="#007048"/><rect x="336.5" y="733.0" width="3.5" height="3.5" fill="#007048"/><rect x="340.0" y="733.0" width="3.5" height="3.5" fill="#c8c8c8"/><rect x="343.5" y="733.0" width="3.5" height="3.5" fill="#c8c8c8"/><rect x="347.0" y="733.0" width="3.5" height="3.5" fill="#007048"/><rect x="350.5" y="733.0" width="3.5" height="3.5" fill="#00e898"/><rect x="354.0" y="733.0" width="3.5" height="3.5" fill="#00e898"/><rect x="333.0" y="736.5" width="3.5" height="3.5" fill="#007048"/><rect x="336.5" y="736.5" width="3.5" height="3.5" fill="#c8c8c8"/><rect x="340.0" y="736.5" width="3.5" height="3.5" fill="#c8c8c8"/><rect x="343.5" y="736.5" width="3.5" height="3.5" fill="#c8c8c8"/><rect x="347.0" y="736.5" width="3.5" height="3.5" fill="#c8c8c8"/><rect x="350.5" y="736.5" width="3.5" height="3.5" fill="#c8c8c8"/><rect x="333.0" y="740.0" width="3.5" height="3.5" fill="#007048"/><rect x="336.5" y="740.0" width="3.5" height="3.5" fill="#c8c8c8"/><rect x="340.0" y="740.0" width="3.5" height="3.5" fill="#c8c8c8"/><rect x="343.5" y="740.0" width="3.5" height="3.5" fill="#c8c8c8"/><rect x="347.0" y="740.0" width="3.5" height="3.5" fill="#c8c8c8"/><rect x="350.5" y="740.0" width="3.5" height="3.5" fill="#00e898"/><rect x="336.5" y="743.5" width="3.5" height="3.5" fill="#007048"/><rect x="340.0" y="743.5" width="3.5" height="3.5" fill="#c8c8c8"/><rect x="343.5" y="743.5" width="3.5" height="3.5" fill="#c8c8c8"/><rect x="347.0" y="743.5" width="3.5" height="3.5" fill="#00e898"/><rect x="354.0" y="743.5" width="3.5" height="3.5" fill="#007048"/><rect x="329.5" y="747.0" width="3.5" height="3.5" fill="#007048"/><rect x="333.0" y="747.0" width="3.5" height="3.5" fill="#00e898"/><rect x="336.5" y="747.0" width="3.5" height="3.5" fill="#007048"/><rect x="340.0" y="747.0" width="3.5" height="3.5" fill="#007048"/><rect x="343.5" y="747.0" width="3.5" height="3.5" fill="#c8c8c8"/><rect x="347.0" y="747.0" width="3.5" height="3.5" fill="#00e898"/><rect x="350.5" y="747.0" width="3.5" height="3.5" fill="#007048"/><rect x="357.5" y="747.0" width="3.5" height="3.5" fill="#007048"/><rect x="336.5" y="750.5" width="3.5" height="3.5" fill="#00e898"/><rect x="340.0" y="750.5" width="3.5" height="3.5" fill="#007048"/><rect x="343.5" y="750.5" width="3.5" height="3.5" fill="#007048"/><rect x="347.0" y="750.5" width="3.5" height="3.5" fill="#007048"/><rect x="350.5" y="750.5" width="3.5" height="3.5" fill="#00e898"/><rect x="336.5" y="754.0" width="3.5" height="3.5" fill="#007048"/><rect x="340.0" y="754.0" width="3.5" height="3.5" fill="#007048"/><rect x="343.5" y="754.0" width="3.5" height="3.5" fill="#007048"/><rect x="340.0" y="757.5" width="3.5" height="3.5" fill="#007048"/><rect x="347.0" y="757.5" width="3.5" height="3.5" fill="#007048"/>
<rect x="301.5" y="705.0" width="3.5" height="3.5" fill="#007048"/><rect x="305.0" y="705.0" width="3.5" height="3.5" fill="#007048"/><rect x="284.0" y="708.5" width="3.5" height="3.5" fill="#007048"/><rect x="287.5" y="708.5" width="3.5" height="3.5" fill="#007048"/><rect x="280.5" y="712.0" width="3.5" height="3.5" fill="#00e898"/><rect x="284.0" y="712.0" width="3.5" height="3.5" fill="#00e898"/><rect x="287.5" y="712.0" width="3.5" height="3.5" fill="#007048"/><rect x="291.0" y="712.0" width="3.5" height="3.5" fill="#007048"/><rect x="298.0" y="712.0" width="3.5" height="3.5" fill="#00e898"/><rect x="301.5" y="712.0" width="3.5" height="3.5" fill="#00e898"/><rect x="305.0" y="712.0" width="3.5" height="3.5" fill="#00e898"/><rect x="280.5" y="715.5" width="3.5" height="3.5" fill="#00e898"/><rect x="284.0" y="715.5" width="3.5" height="3.5" fill="#00e898"/><rect x="287.5" y="715.5" width="3.5" height="3.5" fill="#00e898"/><rect x="291.0" y="715.5" width="3.5" height="3.5" fill="#007048"/><rect x="298.0" y="715.5" width="3.5" height="3.5" fill="#c8c8c8"/><rect x="301.5" y="715.5" width="3.5" height="3.5" fill="#c8c8c8"/><rect x="305.0" y="715.5" width="3.5" height="3.5" fill="#00e898"/><rect x="308.5" y="715.5" width="3.5" height="3.5" fill="#007048"/><rect x="287.5" y="719.0" width="3.5" height="3.5" fill="#00e898"/><rect x="291.0" y="719.0" width="3.5" height="3.5" fill="#c8c8c8"/><rect x="294.5" y="719.0" width="3.5" height="3.5" fill="#00e898"/><rect x="298.0" y="719.0" width="3.5" height="3.5" fill="#00e898"/><rect x="301.5" y="719.0" width="3.5" height="3.5" fill="#c8c8c8"/><rect x="305.0" y="719.0" width="3.5" height="3.5" fill="#00e898"/><rect x="315.5" y="719.0" width="3.5" height="3.5" fill="#00e898"/><rect x="287.5" y="722.5" width="3.5" height="3.5" fill="#c8c8c8"/><rect x="291.0" y="722.5" width="3.5" height="3.5" fill="#c8c8c8"/><rect x="294.5" y="722.5" width="3.5" height="3.5" fill="#d89030"/><rect x="298.0" y="722.5" width="3.5" height="3.5" fill="#c8c8c8"/><rect x="301.5" y="722.5" width="3.5" height="3.5" fill="#d89030"/><rect x="315.5" y="722.5" width="3.5" height="3.5" fill="#00e898"/><rect x="277.0" y="726.0" width="3.5" height="3.5" fill="#00e898"/><rect x="280.5" y="726.0" width="3.5" height="3.5" fill="#00e898"/><rect x="284.0" y="726.0" width="3.5" height="3.5" fill="#00e898"/><rect x="287.5" y="726.0" width="3.5" height="3.5" fill="#c8c8c8"/><rect x="294.5" y="726.0" width="3.5" height="3.5" fill="#d89030"/><rect x="298.0" y="726.0" width="3.5" height="3.5" fill="#d89030"/><rect x="301.5" y="726.0" width="3.5" height="3.5" fill="#c8c8c8"/><rect x="305.0" y="726.0" width="3.5" height="3.5" fill="#c8c8c8"/><rect x="308.5" y="726.0" width="3.5" height="3.5" fill="#007048"/><rect x="312.0" y="726.0" width="3.5" height="3.5" fill="#007048"/><rect x="277.0" y="729.5" width="3.5" height="3.5" fill="#007048"/><rect x="280.5" y="729.5" width="3.5" height="3.5" fill="#00e898"/><rect x="284.0" y="729.5" width="3.5" height="3.5" fill="#007048"/><rect x="291.0" y="729.5" width="3.5" height="3.5" fill="#d89030"/><rect x="294.5" y="729.5" width="3.5" height="3.5" fill="#d89030"/><rect x="298.0" y="729.5" width="3.5" height="3.5" fill="#d89030"/><rect x="301.5" y="729.5" width="3.5" height="3.5" fill="#d89030"/><rect x="305.0" y="729.5" width="3.5" height="3.5" fill="#c8c8c8"/><rect x="312.0" y="729.5" width="3.5" height="3.5" fill="#00e898"/><rect x="284.0" y="733.0" width="3.5" height="3.5" fill="#007048"/><rect x="287.5" y="733.0" width="3.5" height="3.5" fill="#c8c8c8"/><rect x="291.0" y="733.0" width="3.5" height="3.5" fill="#c8c8c8"/><rect x="294.5" y="733.0" width="3.5" height="3.5" fill="#d89030"/><rect x="298.0" y="733.0" width="3.5" height="3.5" fill="#d89030"/><rect x="301.5" y="733.0" width="3.5" height="3.5" fill="#d89030"/><rect x="305.0" y="733.0" width="3.5" height="3.5" fill="#c8c8c8"/><rect x="308.5" y="733.0" width="3.5" height="3.5" fill="#007048"/><rect x="284.0" y="736.5" width="3.5" height="3.5" fill="#00e898"/><rect x="287.5" y="736.5" width="3.5" height="3.5" fill="#c8c8c8"/><rect x="291.0" y="736.5" width="3.5" height="3.5" fill="#d89030"/><rect x="294.5" y="736.5" width="3.5" height="3.5" fill="#c8c8c8"/><rect x="298.0" y="736.5" width="3.5" height="3.5" fill="#c8c8c8"/><rect x="305.0" y="736.5" width="3.5" height="3.5" fill="#c8c8c8"/><rect x="280.5" y="740.0" width="3.5" height="3.5" fill="#007048"/><rect x="284.0" y="740.0" width="3.5" height="3.5" fill="#00e898"/><rect x="287.5" y="740.0" width="3.5" height="3.5" fill="#c8c8c8"/><rect x="291.0" y="740.0" width="3.5" height="3.5" fill="#00e898"/><rect x="294.5" y="740.0" width="3.5" height="3.5" fill="#c8c8c8"/><rect x="298.0" y="740.0" width="3.5" height="3.5" fill="#00e898"/><rect x="301.5" y="740.0" width="3.5" height="3.5" fill="#00e898"/><rect x="277.0" y="743.5" width="3.5" height="3.5" fill="#00e898"/><rect x="287.5" y="743.5" width="3.5" height="3.5" fill="#007048"/><rect x="291.0" y="743.5" width="3.5" height="3.5" fill="#007048"/><rect x="294.5" y="743.5" width="3.5" height="3.5" fill="#00e898"/><rect x="298.0" y="743.5" width="3.5" height="3.5" fill="#007048"/><rect x="301.5" y="743.5" width="3.5" height="3.5" fill="#007048"/><rect x="305.0" y="743.5" width="3.5" height="3.5" fill="#00e898"/><rect x="308.5" y="743.5" width="3.5" height="3.5" fill="#007048"/><rect x="287.5" y="747.0" width="3.5" height="3.5" fill="#00e898"/><rect x="291.0" y="747.0" width="3.5" height="3.5" fill="#00e898"/><rect x="294.5" y="747.0" width="3.5" height="3.5" fill="#00e898"/><rect x="298.0" y="747.0" width="3.5" height="3.5" fill="#007048"/><rect x="284.0" y="750.5" width="3.5" height="3.5" fill="#007048"/><rect x="287.5" y="750.5" width="3.5" height="3.5" fill="#00e898"/><rect x="294.5" y="750.5" width="3.5" height="3.5" fill="#00e898"/><rect x="301.5" y="754.0" width="3.5" height="3.5" fill="#00e898"/>
<rect x="284.0" y="740.0" width="3.5" height="3.5" fill="#007048"/><rect x="287.5" y="740.0" width="3.5" height="3.5" fill="#007048"/><rect x="287.5" y="743.5" width="3.5" height="3.5" fill="#00e898"/><rect x="291.0" y="743.5" width="3.5" height="3.5" fill="#00e898"/><rect x="294.5" y="743.5" width="3.5" height="3.5" fill="#007048"/><rect x="298.0" y="743.5" width="3.5" height="3.5" fill="#007048"/><rect x="284.0" y="747.0" width="3.5" height="3.5" fill="#00e898"/><rect x="287.5" y="747.0" width="3.5" height="3.5" fill="#00e898"/><rect x="291.0" y="747.0" width="3.5" height="3.5" fill="#c8c8c8"/><rect x="294.5" y="747.0" width="3.5" height="3.5" fill="#007048"/><rect x="298.0" y="747.0" width="3.5" height="3.5" fill="#007048"/><rect x="301.5" y="747.0" width="3.5" height="3.5" fill="#007048"/><rect x="287.5" y="750.5" width="3.5" height="3.5" fill="#00e898"/><rect x="291.0" y="750.5" width="3.5" height="3.5" fill="#c8c8c8"/><rect x="294.5" y="750.5" width="3.5" height="3.5" fill="#007048"/><rect x="298.0" y="750.5" width="3.5" height="3.5" fill="#007048"/><rect x="284.0" y="754.0" width="3.5" height="3.5" fill="#007048"/><rect x="287.5" y="754.0" width="3.5" height="3.5" fill="#00e898"/><rect x="291.0" y="754.0" width="3.5" height="3.5" fill="#c8c8c8"/><rect x="294.5" y="754.0" width="3.5" height="3.5" fill="#c8c8c8"/><rect x="298.0" y="754.0" width="3.5" height="3.5" fill="#007048"/><rect x="301.5" y="754.0" width="3.5" height="3.5" fill="#00e898"/><rect x="284.0" y="757.5" width="3.5" height="3.5" fill="#00e898"/><rect x="287.5" y="757.5" width="3.5" height="3.5" fill="#007048"/><rect x="291.0" y="757.5" width="3.5" height="3.5" fill="#c8c8c8"/><rect x="294.5" y="757.5" width="3.5" height="3.5" fill="#c8c8c8"/><rect x="298.0" y="757.5" width="3.5" height="3.5" fill="#007048"/><rect x="301.5" y="757.5" width="3.5" height="3.5" fill="#00e898"/><rect x="280.5" y="761.0" width="3.5" height="3.5" fill="#007048"/><rect x="284.0" y="761.0" width="3.5" height="3.5" fill="#00e898"/><rect x="287.5" y="761.0" width="3.5" height="3.5" fill="#c8c8c8"/><rect x="291.0" y="761.0" width="3.5" height="3.5" fill="#c8c8c8"/><rect x="294.5" y="761.0" width="3.5" height="3.5" fill="#c8c8c8"/><rect x="298.0" y="761.0" width="3.5" height="3.5" fill="#007048"/><rect x="301.5" y="761.0" width="3.5" height="3.5" fill="#007048"/><rect x="284.0" y="764.5" width="3.5" height="3.5" fill="#007048"/><rect x="287.5" y="764.5" width="3.5" height="3.5" fill="#c8c8c8"/><rect x="291.0" y="764.5" width="3.5" height="3.5" fill="#c8c8c8"/><rect x="294.5" y="764.5" width="3.5" height="3.5" fill="#c8c8c8"/><rect x="301.5" y="764.5" width="3.5" height="3.5" fill="#007048"/><rect x="280.5" y="768.0" width="3.5" height="3.5" fill="#007048"/><rect x="284.0" y="768.0" width="3.5" height="3.5" fill="#007048"/><rect x="287.5" y="768.0" width="3.5" height="3.5" fill="#00e898"/><rect x="291.0" y="768.0" width="3.5" height="3.5" fill="#c8c8c8"/><rect x="294.5" y="768.0" width="3.5" height="3.5" fill="#007048"/><rect x="298.0" y="768.0" width="3.5" height="3.5" fill="#007048"/><rect x="301.5" y="768.0" width="3.5" height="3.5" fill="#007048"/><rect x="284.0" y="771.5" width="3.5" height="3.5" fill="#007048"/><rect x="287.5" y="771.5" width="3.5" height="3.5" fill="#007048"/><rect x="291.0" y="771.5" width="3.5" height="3.5" fill="#007048"/><rect x="294.5" y="771.5" width="3.5" height="3.5" fill="#c8c8c8"/><rect x="298.0" y="771.5" width="3.5" height="3.5" fill="#007048"/><rect x="301.5" y="771.5" width="3.5" height="3.5" fill="#007048"/><rect x="284.0" y="775.0" width="3.5" height="3.5" fill="#00e898"/><rect x="287.5" y="775.0" width="3.5" height="3.5" fill="#007048"/><rect x="291.0" y="775.0" width="3.5" height="3.5" fill="#007048"/><rect x="294.5" y="775.0" width="3.5" height="3.5" fill="#00e898"/><rect x="298.0" y="775.0" width="3.5" height="3.5" fill="#007048"/><rect x="287.5" y="778.5" width="3.5" height="3.5" fill="#007048"/><rect x="291.0" y="778.5" width="3.5" height="3.5" fill="#007048"/><rect x="294.5" y="778.5" width="3.5" height="3.5" fill="#007048"/><rect x="298.0" y="778.5" width="3.5" height="3.5" fill="#007048"/><rect x="284.0" y="782.0" width="3.5" height="3.5" fill="#00e898"/><rect x="298.0" y="782.0" width="3.5" height="3.5" fill="#00e898"/>
<rect x="252.5" y="736.5" width="3.5" height="3.5" fill="#00e898"/><rect x="249.0" y="740.0" width="3.5" height="3.5" fill="#00e898"/><rect x="252.5" y="740.0" width="3.5" height="3.5" fill="#00e898"/><rect x="256.0" y="740.0" width="3.5" height="3.5" fill="#00e898"/><rect x="252.5" y="743.5" width="3.5" height="3.5" fill="#c8c8c8"/><rect x="256.0" y="743.5" width="3.5" height="3.5" fill="#c8c8c8"/><rect x="242.0" y="747.0" width="3.5" height="3.5" fill="#007048"/><rect x="245.5" y="747.0" width="3.5" height="3.5" fill="#007048"/><rect x="249.0" y="747.0" width="3.5" height="3.5" fill="#00e898"/><rect x="252.5" y="747.0" width="3.5" height="3.5" fill="#d89030"/><rect x="256.0" y="747.0" width="3.5" height="3.5" fill="#d89030"/><rect x="259.5" y="747.0" width="3.5" height="3.5" fill="#007048"/><rect x="263.0" y="747.0" width="3.5" height="3.5" fill="#00e898"/><rect x="266.5" y="747.0" width="3.5" height="3.5" fill="#00e898"/><rect x="245.5" y="750.5" width="3.5" height="3.5" fill="#00e898"/><rect x="249.0" y="750.5" width="3.5" height="3.5" fill="#c8c8c8"/><rect x="252.5" y="750.5" width="3.5" height="3.5" fill="#d89030"/><rect x="256.0" y="750.5" width="3.5" height="3.5" fill="#c8c8c8"/><rect x="259.5" y="750.5" width="3.5" height="3.5" fill="#c8c8c8"/><rect x="249.0" y="754.0" width="3.5" height="3.5" fill="#c8c8c8"/><rect x="252.5" y="754.0" width="3.5" height="3.5" fill="#d89030"/><rect x="256.0" y="754.0" width="3.5" height="3.5" fill="#d89030"/><rect x="259.5" y="754.0" width="3.5" height="3.5" fill="#c8c8c8"/><rect x="245.5" y="757.5" width="3.5" height="3.5" fill="#007048"/><rect x="249.0" y="757.5" width="3.5" height="3.5" fill="#c8c8c8"/><rect x="252.5" y="757.5" width="3.5" height="3.5" fill="#d89030"/><rect x="256.0" y="757.5" width="3.5" height="3.5" fill="#d89030"/><rect x="259.5" y="757.5" width="3.5" height="3.5" fill="#c8c8c8"/><rect x="245.5" y="761.0" width="3.5" height="3.5" fill="#00e898"/><rect x="249.0" y="761.0" width="3.5" height="3.5" fill="#c8c8c8"/><rect x="252.5" y="761.0" width="3.5" height="3.5" fill="#c8c8c8"/><rect x="256.0" y="761.0" width="3.5" height="3.5" fill="#c8c8c8"/><rect x="263.0" y="761.0" width="3.5" height="3.5" fill="#00e898"/><rect x="266.5" y="761.0" width="3.5" height="3.5" fill="#007048"/>
<rect x="224.5" y="712.0" width="3.5" height="3.5" fill="#00e898"/><rect x="217.5" y="719.0" width="3.5" height="3.5" fill="#00e898"/><rect x="221.0" y="719.0" width="3.5" height="3.5" fill="#00e898"/><rect x="224.5" y="719.0" width="3.5" height="3.5" fill="#00e898"/><rect x="228.0" y="719.0" width="3.5" height="3.5" fill="#00e898"/><rect x="231.5" y="719.0" width="3.5" height="3.5" fill="#00e898"/><rect x="235.0" y="719.0" width="3.5" height="3.5" fill="#00e898"/><rect x="238.5" y="719.0" width="3.5" height="3.5" fill="#00e898"/><rect x="242.0" y="719.0" width="3.5" height="3.5" fill="#00e898"/><rect x="214.0" y="722.5" width="3.5" height="3.5" fill="#007048"/><rect x="217.5" y="722.5" width="3.5" height="3.5" fill="#007048"/><rect x="221.0" y="722.5" width="3.5" height="3.5" fill="#007048"/><rect x="224.5" y="722.5" width="3.5" height="3.5" fill="#00e898"/><rect x="231.5" y="722.5" width="3.5" height="3.5" fill="#007048"/><rect x="235.0" y="722.5" width="3.5" height="3.5" fill="#00e898"/><rect x="238.5" y="722.5" width="3.5" height="3.5" fill="#00e898"/><rect x="242.0" y="722.5" width="3.5" height="3.5" fill="#00e898"/><rect x="210.5" y="726.0" width="3.5" height="3.5" fill="#007048"/><rect x="214.0" y="726.0" width="3.5" height="3.5" fill="#00e898"/><rect x="217.5" y="726.0" width="3.5" height="3.5" fill="#00e898"/><rect x="221.0" y="726.0" width="3.5" height="3.5" fill="#00e898"/><rect x="224.5" y="726.0" width="3.5" height="3.5" fill="#007048"/><rect x="228.0" y="726.0" width="3.5" height="3.5" fill="#007048"/><rect x="231.5" y="726.0" width="3.5" height="3.5" fill="#00e898"/><rect x="235.0" y="726.0" width="3.5" height="3.5" fill="#00e898"/><rect x="238.5" y="726.0" width="3.5" height="3.5" fill="#00e898"/><rect x="242.0" y="726.0" width="3.5" height="3.5" fill="#00e898"/><rect x="200.0" y="729.5" width="3.5" height="3.5" fill="#007048"/><rect x="207.0" y="729.5" width="3.5" height="3.5" fill="#007048"/><rect x="214.0" y="729.5" width="3.5" height="3.5" fill="#00e898"/><rect x="217.5" y="729.5" width="3.5" height="3.5" fill="#00e898"/><rect x="221.0" y="729.5" width="3.5" height="3.5" fill="#00e898"/><rect x="224.5" y="729.5" width="3.5" height="3.5" fill="#00e898"/><rect x="228.0" y="729.5" width="3.5" height="3.5" fill="#00e898"/><rect x="231.5" y="729.5" width="3.5" height="3.5" fill="#00e898"/><rect x="235.0" y="729.5" width="3.5" height="3.5" fill="#00e898"/><rect x="238.5" y="729.5" width="3.5" height="3.5" fill="#00e898"/><rect x="210.5" y="733.0" width="3.5" height="3.5" fill="#007048"/><rect x="214.0" y="733.0" width="3.5" height="3.5" fill="#00e898"/><rect x="217.5" y="733.0" width="3.5" height="3.5" fill="#00e898"/><rect x="221.0" y="733.0" width="3.5" height="3.5" fill="#00e898"/><rect x="224.5" y="733.0" width="3.5" height="3.5" fill="#007048"/><rect x="228.0" y="733.0" width="3.5" height="3.5" fill="#00e898"/><rect x="231.5" y="733.0" width="3.5" height="3.5" fill="#00e898"/><rect x="235.0" y="733.0" width="3.5" height="3.5" fill="#00e898"/><rect x="238.5" y="733.0" width="3.5" height="3.5" fill="#00e898"/><rect x="217.5" y="736.5" width="3.5" height="3.5" fill="#007048"/><rect x="224.5" y="736.5" width="3.5" height="3.5" fill="#00e898"/><rect x="228.0" y="736.5" width="3.5" height="3.5" fill="#00e898"/><rect x="231.5" y="736.5" width="3.5" height="3.5" fill="#00e898"/><rect x="238.5" y="736.5" width="3.5" height="3.5" fill="#007048"/><rect x="245.5" y="736.5" width="3.5" height="3.5" fill="#00e898"/>
<rect x="221.0" y="743.5" width="3.5" height="3.5" fill="#007048"/><rect x="221.0" y="747.0" width="3.5" height="3.5" fill="#00e898"/><rect x="210.5" y="750.5" width="3.5" height="3.5" fill="#007048"/><rect x="214.0" y="750.5" width="3.5" height="3.5" fill="#007048"/><rect x="217.5" y="750.5" width="3.5" height="3.5" fill="#c8c8c8"/><rect x="221.0" y="750.5" width="3.5" height="3.5" fill="#007048"/><rect x="224.5" y="750.5" width="3.5" height="3.5" fill="#00e898"/><rect x="214.0" y="754.0" width="3.5" height="3.5" fill="#c8c8c8"/><rect x="217.5" y="754.0" width="3.5" height="3.5" fill="#c8c8c8"/><rect x="221.0" y="754.0" width="3.5" height="3.5" fill="#007048"/><rect x="224.5" y="754.0" width="3.5" height="3.5" fill="#00e898"/><rect x="210.5" y="757.5" width="3.5" height="3.5" fill="#00e898"/><rect x="214.0" y="757.5" width="3.5" height="3.5" fill="#c8c8c8"/><rect x="217.5" y="757.5" width="3.5" height="3.5" fill="#c8c8c8"/><rect x="221.0" y="757.5" width="3.5" height="3.5" fill="#c8c8c8"/><rect x="224.5" y="757.5" width="3.5" height="3.5" fill="#00e898"/><rect x="214.0" y="761.0" width="3.5" height="3.5" fill="#007048"/><rect x="221.0" y="761.0" width="3.5" height="3.5" fill="#007048"/><rect x="224.5" y="761.0" width="3.5" height="3.5" fill="#00e898"/><rect x="217.5" y="764.5" width="3.5" height="3.5" fill="#00e898"/><rect x="224.5" y="764.5" width="3.5" height="3.5" fill="#00e898"/><rect x="217.5" y="768.0" width="3.5" height="3.5" fill="#00e898"/>
<rect x="200.0" y="771.5" width="3.5" height="3.5" fill="#007048"/><rect x="203.5" y="771.5" width="3.5" height="3.5" fill="#007048"/><rect x="207.0" y="771.5" width="3.5" height="3.5" fill="#007048"/><rect x="210.5" y="771.5" width="3.5" height="3.5" fill="#007048"/><rect x="203.5" y="775.0" width="3.5" height="3.5" fill="#007048"/><rect x="207.0" y="775.0" width="3.5" height="3.5" fill="#007048"/><rect x="210.5" y="775.0" width="3.5" height="3.5" fill="#007048"/><rect x="214.0" y="775.0" width="3.5" height="3.5" fill="#007048"/><rect x="203.5" y="778.5" width="3.5" height="3.5" fill="#007048"/><rect x="207.0" y="778.5" width="3.5" height="3.5" fill="#007048"/><rect x="210.5" y="778.5" width="3.5" height="3.5" fill="#007048"/>
<rect x="245.5" y="778.5" width="3.5" height="3.5" fill="#007048"/><rect x="242.0" y="782.0" width="3.5" height="3.5" fill="#00e898"/><rect x="245.5" y="782.0" width="3.5" height="3.5" fill="#c8c8c8"/><rect x="249.0" y="782.0" width="3.5" height="3.5" fill="#007048"/><rect x="252.5" y="782.0" width="3.5" height="3.5" fill="#00e898"/><rect x="242.0" y="785.5" width="3.5" height="3.5" fill="#007048"/><rect x="245.5" y="785.5" width="3.5" height="3.5" fill="#c8c8c8"/><rect x="249.0" y="785.5" width="3.5" height="3.5" fill="#c8c8c8"/><rect x="252.5" y="785.5" width="3.5" height="3.5" fill="#00e898"/><rect x="242.0" y="789.0" width="3.5" height="3.5" fill="#007048"/><rect x="245.5" y="789.0" width="3.5" height="3.5" fill="#007048"/><rect x="249.0" y="789.0" width="3.5" height="3.5" fill="#00e898"/><rect x="242.0" y="792.5" width="3.5" height="3.5" fill="#007048"/><rect x="245.5" y="792.5" width="3.5" height="3.5" fill="#007048"/>
<rect x="189.5" y="631.5" width="3.5" height="3.5" fill="#00e898"/><rect x="193.0" y="631.5" width="3.5" height="3.5" fill="#00e898"/><rect x="186.0" y="635.0" width="3.5" height="3.5" fill="#007048"/><rect x="189.5" y="635.0" width="3.5" height="3.5" fill="#00e898"/><rect x="193.0" y="635.0" width="3.5" height="3.5" fill="#00e898"/><rect x="179.0" y="638.5" width="3.5" height="3.5" fill="#007048"/><rect x="186.0" y="638.5" width="3.5" height="3.5" fill="#007048"/><rect x="193.0" y="638.5" width="3.5" height="3.5" fill="#007048"/><rect x="172.0" y="642.0" width="3.5" height="3.5" fill="#00e898"/><rect x="175.5" y="642.0" width="3.5" height="3.5" fill="#00e898"/><rect x="179.0" y="642.0" width="3.5" height="3.5" fill="#c8c8c8"/><rect x="182.5" y="642.0" width="3.5" height="3.5" fill="#00e898"/><rect x="186.0" y="642.0" width="3.5" height="3.5" fill="#c8c8c8"/><rect x="189.5" y="642.0" width="3.5" height="3.5" fill="#c8c8c8"/><rect x="175.5" y="645.5" width="3.5" height="3.5" fill="#c8c8c8"/><rect x="179.0" y="645.5" width="3.5" height="3.5" fill="#c8c8c8"/><rect x="186.0" y="645.5" width="3.5" height="3.5" fill="#c8c8c8"/><rect x="189.5" y="645.5" width="3.5" height="3.5" fill="#c8c8c8"/><rect x="175.5" y="649.0" width="3.5" height="3.5" fill="#c8c8c8"/><rect x="182.5" y="649.0" width="3.5" height="3.5" fill="#d89030"/><rect x="189.5" y="649.0" width="3.5" height="3.5" fill="#d89030"/><rect x="193.0" y="649.0" width="3.5" height="3.5" fill="#c8c8c8"/><rect x="168.5" y="652.5" width="3.5" height="3.5" fill="#007048"/><rect x="172.0" y="652.5" width="3.5" height="3.5" fill="#00e898"/><rect x="175.5" y="652.5" width="3.5" height="3.5" fill="#c8c8c8"/><rect x="179.0" y="652.5" width="3.5" height="3.5" fill="#c8c8c8"/><rect x="182.5" y="652.5" width="3.5" height="3.5" fill="#d89030"/><rect x="186.0" y="652.5" width="3.5" height="3.5" fill="#d89030"/><rect x="189.5" y="652.5" width="3.5" height="3.5" fill="#c8c8c8"/><rect x="193.0" y="652.5" width="3.5" height="3.5" fill="#c8c8c8"/><rect x="196.5" y="652.5" width="3.5" height="3.5" fill="#00e898"/><rect x="172.0" y="656.0" width="3.5" height="3.5" fill="#007048"/><rect x="175.5" y="656.0" width="3.5" height="3.5" fill="#c8c8c8"/><rect x="179.0" y="656.0" width="3.5" height="3.5" fill="#c8c8c8"/><rect x="182.5" y="656.0" width="3.5" height="3.5" fill="#d89030"/><rect x="186.0" y="656.0" width="3.5" height="3.5" fill="#d89030"/><rect x="189.5" y="656.0" width="3.5" height="3.5" fill="#d89030"/><rect x="168.5" y="659.5" width="3.5" height="3.5" fill="#007048"/><rect x="172.0" y="659.5" width="3.5" height="3.5" fill="#00e898"/><rect x="175.5" y="659.5" width="3.5" height="3.5" fill="#00e898"/><rect x="182.5" y="659.5" width="3.5" height="3.5" fill="#c8c8c8"/><rect x="186.0" y="659.5" width="3.5" height="3.5" fill="#c8c8c8"/><rect x="189.5" y="659.5" width="3.5" height="3.5" fill="#c8c8c8"/><rect x="196.5" y="659.5" width="3.5" height="3.5" fill="#007048"/><rect x="179.0" y="663.0" width="3.5" height="3.5" fill="#00e898"/><rect x="182.5" y="663.0" width="3.5" height="3.5" fill="#c8c8c8"/><rect x="186.0" y="663.0" width="3.5" height="3.5" fill="#007048"/><rect x="189.5" y="663.0" width="3.5" height="3.5" fill="#007048"/><rect x="193.0" y="663.0" width="3.5" height="3.5" fill="#00e898"/><rect x="179.0" y="666.5" width="3.5" height="3.5" fill="#00e898"/><rect x="186.0" y="666.5" width="3.5" height="3.5" fill="#007048"/><rect x="189.5" y="666.5" width="3.5" height="3.5" fill="#007048"/><rect x="193.0" y="666.5" width="3.5" height="3.5" fill="#007048"/><rect x="182.5" y="670.0" width="3.5" height="3.5" fill="#00e898"/><rect x="186.0" y="670.0" width="3.5" height="3.5" fill="#00e898"/><rect x="189.5" y="670.0" width="3.5" height="3.5" fill="#00e898"/>
<rect x="165.0" y="652.5" width="3.5" height="3.5" fill="#00e898"/><rect x="158.0" y="656.0" width="3.5" height="3.5" fill="#00e898"/><rect x="161.5" y="656.0" width="3.5" height="3.5" fill="#00e898"/><rect x="165.0" y="656.0" width="3.5" height="3.5" fill="#00e898"/><rect x="168.5" y="656.0" width="3.5" height="3.5" fill="#00e898"/><rect x="172.0" y="656.0" width="3.5" height="3.5" fill="#00e898"/><rect x="154.5" y="659.5" width="3.5" height="3.5" fill="#007048"/><rect x="158.0" y="659.5" width="3.5" height="3.5" fill="#00e898"/><rect x="161.5" y="659.5" width="3.5" height="3.5" fill="#00e898"/><rect x="165.0" y="659.5" width="3.5" height="3.5" fill="#00e898"/><rect x="168.5" y="659.5" width="3.5" height="3.5" fill="#00e898"/><rect x="172.0" y="659.5" width="3.5" height="3.5" fill="#00e898"/><rect x="158.0" y="663.0" width="3.5" height="3.5" fill="#00e898"/><rect x="161.5" y="663.0" width="3.5" height="3.5" fill="#00e898"/><rect x="165.0" y="663.0" width="3.5" height="3.5" fill="#00e898"/><rect x="168.5" y="663.0" width="3.5" height="3.5" fill="#00e898"/><rect x="165.0" y="666.5" width="3.5" height="3.5" fill="#00e898"/>
<rect x="193.0" y="621.0" width="3.5" height="3.5" fill="#00e898"/><rect x="196.5" y="621.0" width="3.5" height="3.5" fill="#00e898"/><rect x="200.0" y="621.0" width="3.5" height="3.5" fill="#007048"/><rect x="203.5" y="621.0" width="3.5" height="3.5" fill="#00e898"/><rect x="196.5" y="624.5" width="3.5" height="3.5" fill="#007048"/><rect x="200.0" y="624.5" width="3.5" height="3.5" fill="#007048"/><rect x="203.5" y="624.5" width="3.5" height="3.5" fill="#007048"/><rect x="207.0" y="624.5" width="3.5" height="3.5" fill="#00e898"/><rect x="210.5" y="624.5" width="3.5" height="3.5" fill="#00e898"/><rect x="189.5" y="628.0" width="3.5" height="3.5" fill="#007048"/><rect x="193.0" y="628.0" width="3.5" height="3.5" fill="#007048"/><rect x="196.5" y="628.0" width="3.5" height="3.5" fill="#00e898"/><rect x="200.0" y="628.0" width="3.5" height="3.5" fill="#c8c8c8"/><rect x="203.5" y="628.0" width="3.5" height="3.5" fill="#c8c8c8"/><rect x="207.0" y="628.0" width="3.5" height="3.5" fill="#007048"/><rect x="210.5" y="628.0" width="3.5" height="3.5" fill="#00e898"/><rect x="189.5" y="631.5" width="3.5" height="3.5" fill="#00e898"/><rect x="193.0" y="631.5" width="3.5" height="3.5" fill="#007048"/><rect x="196.5" y="631.5" width="3.5" height="3.5" fill="#c8c8c8"/><rect x="200.0" y="631.5" width="3.5" height="3.5" fill="#c8c8c8"/><rect x="203.5" y="631.5" width="3.5" height="3.5" fill="#c8c8c8"/><rect x="207.0" y="631.5" width="3.5" height="3.5" fill="#007048"/><rect x="210.5" y="631.5" width="3.5" height="3.5" fill="#007048"/><rect x="193.0" y="635.0" width="3.5" height="3.5" fill="#00e898"/><rect x="196.5" y="635.0" width="3.5" height="3.5" fill="#007048"/><rect x="200.0" y="635.0" width="3.5" height="3.5" fill="#c8c8c8"/><rect x="203.5" y="635.0" width="3.5" height="3.5" fill="#c8c8c8"/><rect x="207.0" y="635.0" width="3.5" height="3.5" fill="#00e898"/><rect x="214.0" y="635.0" width="3.5" height="3.5" fill="#00e898"/><rect x="193.0" y="638.5" width="3.5" height="3.5" fill="#00e898"/><rect x="196.5" y="638.5" width="3.5" height="3.5" fill="#c8c8c8"/><rect x="200.0" y="638.5" width="3.5" height="3.5" fill="#c8c8c8"/><rect x="203.5" y="638.5" width="3.5" height="3.5" fill="#c8c8c8"/><rect x="207.0" y="638.5" width="3.5" height="3.5" fill="#00e898"/><rect x="196.5" y="642.0" width="3.5" height="3.5" fill="#007048"/><rect x="200.0" y="642.0" width="3.5" height="3.5" fill="#00e898"/><rect x="203.5" y="642.0" width="3.5" height="3.5" fill="#007048"/><rect x="207.0" y="642.0" width="3.5" height="3.5" fill="#007048"/><rect x="210.5" y="642.0" width="3.5" height="3.5" fill="#007048"/><rect x="203.5" y="645.5" width="3.5" height="3.5" fill="#00e898"/>
<rect x="225.2" y="606.2" width="2.3" height="2.3" fill="#007048"/><rect x="227.5" y="606.2" width="2.3" height="2.3" fill="#007048"/><rect x="232.1" y="606.2" width="2.3" height="2.3" fill="#0070e0"/><rect x="220.6" y="610.8" width="2.3" height="2.3" fill="#0070e0"/><rect x="227.5" y="615.4" width="2.3" height="2.3" fill="#00b0e0"/><rect x="218.3" y="617.7" width="2.3" height="2.3" fill="#00b0e0"/>
<rect x="275.8" y="661.4" width="2.3" height="2.3" fill="#0070e0"/><rect x="280.4" y="661.4" width="2.3" height="2.3" fill="#00b0e0"/><rect x="262.0" y="663.7" width="2.3" height="2.3" fill="#00b0e0"/><rect x="285.0" y="663.7" width="2.3" height="2.3" fill="#0070e0"/><rect x="287.3" y="663.7" width="2.3" height="2.3" fill="#0070e0"/><rect x="266.6" y="666.0" width="2.3" height="2.3" fill="#0070e0"/><rect x="275.8" y="666.0" width="2.3" height="2.3" fill="#0070e0"/><rect x="278.1" y="666.0" width="2.3" height="2.3" fill="#0070e0"/><rect x="282.7" y="666.0" width="2.3" height="2.3" fill="#00b0e0"/><rect x="285.0" y="666.0" width="2.3" height="2.3" fill="#00b0e0"/><rect x="298.8" y="666.0" width="2.3" height="2.3" fill="#00b0e0"/><rect x="262.0" y="668.3" width="2.3" height="2.3" fill="#00e898"/><rect x="275.8" y="668.3" width="2.3" height="2.3" fill="#0070e0"/><rect x="278.1" y="668.3" width="2.3" height="2.3" fill="#00b0e0"/><rect x="298.8" y="668.3" width="2.3" height="2.3" fill="#00b0e0"/><rect x="264.3" y="670.6" width="2.3" height="2.3" fill="#00e898"/><rect x="271.2" y="670.6" width="2.3" height="2.3" fill="#1840e0"/><rect x="273.5" y="670.6" width="2.3" height="2.3" fill="#00b0e0"/><rect x="275.8" y="670.6" width="2.3" height="2.3" fill="#0070e0"/><rect x="282.7" y="670.6" width="2.3" height="2.3" fill="#007048"/><rect x="301.1" y="670.6" width="2.3" height="2.3" fill="#1840e0"/><rect x="303.4" y="670.6" width="2.3" height="2.3" fill="#00b0e0"/><rect x="262.0" y="672.9" width="2.3" height="2.3" fill="#0070e0"/><rect x="264.3" y="672.9" width="2.3" height="2.3" fill="#00b0e0"/><rect x="275.8" y="672.9" width="2.3" height="2.3" fill="#00e898"/><rect x="291.9" y="672.9" width="2.3" height="2.3" fill="#0070e0"/><rect x="294.2" y="672.9" width="2.3" height="2.3" fill="#007048"/><rect x="301.1" y="672.9" width="2.3" height="2.3" fill="#00e898"/><rect x="303.4" y="672.9" width="2.3" height="2.3" fill="#0070e0"/><rect x="259.7" y="675.2" width="2.3" height="2.3" fill="#00e898"/><rect x="264.3" y="675.2" width="2.3" height="2.3" fill="#00b0e0"/><rect x="266.6" y="675.2" width="2.3" height="2.3" fill="#00e898"/><rect x="285.0" y="675.2" width="2.3" height="2.3" fill="#00b0e0"/><rect x="287.3" y="675.2" width="2.3" height="2.3" fill="#00e898"/><rect x="294.2" y="675.2" width="2.3" height="2.3" fill="#00b0e0"/><rect x="255.1" y="677.5" width="2.3" height="2.3" fill="#00b0e0"/><rect x="257.4" y="677.5" width="2.3" height="2.3" fill="#0070e0"/><rect x="262.0" y="677.5" width="2.3" height="2.3" fill="#00b0e0"/><rect x="271.2" y="677.5" width="2.3" height="2.3" fill="#1840e0"/><rect x="282.7" y="677.5" width="2.3" height="2.3" fill="#00b0e0"/><rect x="285.0" y="677.5" width="2.3" height="2.3" fill="#00b0e0"/><rect x="287.3" y="677.5" width="2.3" height="2.3" fill="#0070e0"/><rect x="291.9" y="677.5" width="2.3" height="2.3" fill="#00e898"/><rect x="296.5" y="677.5" width="2.3" height="2.3" fill="#0070e0"/><rect x="303.4" y="677.5" width="2.3" height="2.3" fill="#00b0e0"/><rect x="305.7" y="677.5" width="2.3" height="2.3" fill="#00b0e0"/><rect x="308.0" y="677.5" width="2.3" height="2.3" fill="#1840e0"/><rect x="257.4" y="679.8" width="2.3" height="2.3" fill="#0070e0"/><rect x="271.2" y="679.8" width="2.3" height="2.3" fill="#0070e0"/><rect x="273.5" y="679.8" width="2.3" height="2.3" fill="#00e898"/><rect x="282.7" y="679.8" width="2.3" height="2.3" fill="#00b0e0"/><rect x="285.0" y="679.8" width="2.3" height="2.3" fill="#00b0e0"/><rect x="289.6" y="679.8" width="2.3" height="2.3" fill="#0070e0"/><rect x="294.2" y="679.8" width="2.3" height="2.3" fill="#00e898"/><rect x="296.5" y="679.8" width="2.3" height="2.3" fill="#00b0e0"/><rect x="298.8" y="679.8" width="2.3" height="2.3" fill="#00b0e0"/><rect x="301.1" y="679.8" width="2.3" height="2.3" fill="#00e898"/><rect x="303.4" y="679.8" width="2.3" height="2.3" fill="#00b0e0"/><rect x="305.7" y="679.8" width="2.3" height="2.3" fill="#00b0e0"/><rect x="308.0" y="679.8" width="2.3" height="2.3" fill="#0070e0"/><rect x="268.9" y="682.1" width="2.3" height="2.3" fill="#00e898"/><rect x="273.5" y="682.1" width="2.3" height="2.3" fill="#007048"/><rect x="287.3" y="682.1" width="2.3" height="2.3" fill="#007048"/><rect x="298.8" y="682.1" width="2.3" height="2.3" fill="#0070e0"/><rect x="264.3" y="684.4" width="2.3" height="2.3" fill="#0070e0"/><rect x="266.6" y="684.4" width="2.3" height="2.3" fill="#0070e0"/><rect x="271.2" y="684.4" width="2.3" height="2.3" fill="#0070e0"/><rect x="303.4" y="684.4" width="2.3" height="2.3" fill="#00e898"/><rect x="308.0" y="684.4" width="2.3" height="2.3" fill="#1840e0"/><rect x="273.5" y="686.7" width="2.3" height="2.3" fill="#00e898"/><rect x="285.0" y="686.7" width="2.3" height="2.3" fill="#007048"/><rect x="289.6" y="686.7" width="2.3" height="2.3" fill="#0070e0"/><rect x="294.2" y="686.7" width="2.3" height="2.3" fill="#1840e0"/><rect x="278.1" y="689.0" width="2.3" height="2.3" fill="#00e898"/><rect x="280.4" y="689.0" width="2.3" height="2.3" fill="#00b0e0"/><rect x="291.9" y="689.0" width="2.3" height="2.3" fill="#00b0e0"/><rect x="294.2" y="689.0" width="2.3" height="2.3" fill="#0070e0"/>
<rect x="248.2" y="603.9" width="2.3" height="2.3" fill="#0070e0"/><rect x="234.4" y="606.2" width="2.3" height="2.3" fill="#00b0e0"/><rect x="241.3" y="606.2" width="2.3" height="2.3" fill="#0070e0"/><rect x="248.2" y="606.2" width="2.3" height="2.3" fill="#00e898"/><rect x="250.5" y="606.2" width="2.3" height="2.3" fill="#00b0e0"/><rect x="248.2" y="608.5" width="2.3" height="2.3" fill="#007048"/><rect x="252.8" y="608.5" width="2.3" height="2.3" fill="#00e898"/><rect x="239.0" y="610.8" width="2.3" height="2.3" fill="#00b0e0"/><rect x="250.5" y="610.8" width="2.3" height="2.3" fill="#007048"/><rect x="232.1" y="613.1" width="2.3" height="2.3" fill="#00b0e0"/><rect x="236.7" y="613.1" width="2.3" height="2.3" fill="#0070e0"/><rect x="250.5" y="613.1" width="2.3" height="2.3" fill="#0070e0"/><rect x="252.8" y="613.1" width="2.3" height="2.3" fill="#00b0e0"/><rect x="236.7" y="615.4" width="2.3" height="2.3" fill="#00b0e0"/><rect x="234.4" y="617.7" width="2.3" height="2.3" fill="#1840e0"/><rect x="236.7" y="617.7" width="2.3" height="2.3" fill="#0070e0"/><rect x="243.6" y="617.7" width="2.3" height="2.3" fill="#0070e0"/><rect x="252.8" y="617.7" width="2.3" height="2.3" fill="#007048"/><rect x="239.0" y="620.0" width="2.3" height="2.3" fill="#1840e0"/><rect x="241.3" y="620.0" width="2.3" height="2.3" fill="#0070e0"/><rect x="243.6" y="620.0" width="2.3" height="2.3" fill="#0070e0"/><rect x="236.7" y="622.3" width="2.3" height="2.3" fill="#007048"/><rect x="239.0" y="622.3" width="2.3" height="2.3" fill="#0070e0"/><rect x="248.2" y="622.3" width="2.3" height="2.3" fill="#00b0e0"/><rect x="241.3" y="624.6" width="2.3" height="2.3" fill="#1840e0"/><rect x="248.2" y="624.6" width="2.3" height="2.3" fill="#00b0e0"/><rect x="250.5" y="624.6" width="2.3" height="2.3" fill="#0070e0"/><rect x="252.8" y="624.6" width="2.3" height="2.3" fill="#0070e0"/>
<rect x="245.9" y="626.9" width="2.3" height="2.3" fill="#00e898"/><rect x="250.5" y="629.2" width="2.3" height="2.3" fill="#007048"/><rect x="243.6" y="633.8" width="2.3" height="2.3" fill="#00b0e0"/><rect x="245.9" y="633.8" width="2.3" height="2.3" fill="#00b0e0"/><rect x="248.2" y="633.8" width="2.3" height="2.3" fill="#00b0e0"/><rect x="250.5" y="633.8" width="2.3" height="2.3" fill="#00b0e0"/><rect x="243.6" y="636.1" width="2.3" height="2.3" fill="#00b0e0"/><rect x="245.9" y="636.1" width="2.3" height="2.3" fill="#00b0e0"/><rect x="245.9" y="638.4" width="2.3" height="2.3" fill="#0070e0"/><rect x="250.5" y="638.4" width="2.3" height="2.3" fill="#0070e0"/><rect x="241.3" y="640.7" width="2.3" height="2.3" fill="#00b0e0"/><rect x="243.6" y="640.7" width="2.3" height="2.3" fill="#0070e0"/><rect x="250.5" y="640.7" width="2.3" height="2.3" fill="#00b0e0"/><rect x="243.6" y="643.0" width="2.3" height="2.3" fill="#0070e0"/><rect x="245.9" y="643.0" width="2.3" height="2.3" fill="#00b0e0"/>
<rect x="268.9" y="594.7" width="2.3" height="2.3" fill="#00b0e0"/><rect x="271.2" y="594.7" width="2.3" height="2.3" fill="#1840e0"/><rect x="264.3" y="597.0" width="2.3" height="2.3" fill="#0070e0"/><rect x="266.6" y="597.0" width="2.3" height="2.3" fill="#00b0e0"/><rect x="268.9" y="597.0" width="2.3" height="2.3" fill="#00b0e0"/><rect x="271.2" y="597.0" width="2.3" height="2.3" fill="#00b0e0"/><rect x="273.5" y="597.0" width="2.3" height="2.3" fill="#1840e0"/><rect x="278.1" y="597.0" width="2.3" height="2.3" fill="#00e898"/><rect x="266.6" y="599.3" width="2.3" height="2.3" fill="#00b0e0"/><rect x="271.2" y="599.3" width="2.3" height="2.3" fill="#00b0e0"/><rect x="273.5" y="599.3" width="2.3" height="2.3" fill="#00b0e0"/><rect x="278.1" y="599.3" width="2.3" height="2.3" fill="#0070e0"/><rect x="255.1" y="601.6" width="2.3" height="2.3" fill="#1840e0"/><rect x="259.7" y="601.6" width="2.3" height="2.3" fill="#00b0e0"/><rect x="266.6" y="601.6" width="2.3" height="2.3" fill="#00b0e0"/><rect x="268.9" y="601.6" width="2.3" height="2.3" fill="#00b0e0"/><rect x="273.5" y="601.6" width="2.3" height="2.3" fill="#00b0e0"/><rect x="275.8" y="601.6" width="2.3" height="2.3" fill="#007048"/><rect x="278.1" y="601.6" width="2.3" height="2.3" fill="#007048"/><rect x="252.8" y="603.9" width="2.3" height="2.3" fill="#00e898"/><rect x="259.7" y="603.9" width="2.3" height="2.3" fill="#00b0e0"/><rect x="266.6" y="603.9" width="2.3" height="2.3" fill="#00e898"/><rect x="271.2" y="603.9" width="2.3" height="2.3" fill="#00b0e0"/><rect x="278.1" y="603.9" width="2.3" height="2.3" fill="#00b0e0"/><rect x="280.4" y="603.9" width="2.3" height="2.3" fill="#0070e0"/><rect x="259.7" y="606.2" width="2.3" height="2.3" fill="#0070e0"/><rect x="268.9" y="606.2" width="2.3" height="2.3" fill="#0070e0"/><rect x="273.5" y="606.2" width="2.3" height="2.3" fill="#00e898"/><rect x="278.1" y="606.2" width="2.3" height="2.3" fill="#0070e0"/><rect x="266.6" y="608.5" width="2.3" height="2.3" fill="#0070e0"/><rect x="271.2" y="608.5" width="2.3" height="2.3" fill="#0070e0"/><rect x="259.7" y="610.8" width="2.3" height="2.3" fill="#1840e0"/><rect x="268.9" y="610.8" width="2.3" height="2.3" fill="#00b0e0"/><rect x="271.2" y="610.8" width="2.3" height="2.3" fill="#0070e0"/>
<rect x="301.1" y="585.5" width="2.3" height="2.3" fill="#00e898"/><rect x="308.0" y="585.5" width="2.3" height="2.3" fill="#c8c8c8"/><rect x="287.3" y="587.8" width="2.3" height="2.3" fill="#0070e0"/><rect x="291.9" y="587.8" width="2.3" height="2.3" fill="#007048"/><rect x="301.1" y="587.8" width="2.3" height="2.3" fill="#c8c8c8"/><rect x="287.3" y="590.1" width="2.3" height="2.3" fill="#007048"/><rect x="291.9" y="590.1" width="2.3" height="2.3" fill="#00b0e0"/><rect x="303.4" y="590.1" width="2.3" height="2.3" fill="#0070e0"/><rect x="285.0" y="592.4" width="2.3" height="2.3" fill="#c8c8c8"/><rect x="287.3" y="592.4" width="2.3" height="2.3" fill="#00e898"/><rect x="291.9" y="592.4" width="2.3" height="2.3" fill="#00e898"/><rect x="296.5" y="592.4" width="2.3" height="2.3" fill="#007048"/><rect x="298.8" y="592.4" width="2.3" height="2.3" fill="#00b0e0"/><rect x="301.1" y="592.4" width="2.3" height="2.3" fill="#007048"/><rect x="303.4" y="592.4" width="2.3" height="2.3" fill="#00e898"/><rect x="305.7" y="592.4" width="2.3" height="2.3" fill="#c8c8c8"/><rect x="310.3" y="592.4" width="2.3" height="2.3" fill="#007048"/><rect x="312.6" y="592.4" width="2.3" height="2.3" fill="#00b0e0"/><rect x="294.2" y="594.7" width="2.3" height="2.3" fill="#007048"/><rect x="289.6" y="597.0" width="2.3" height="2.3" fill="#c8c8c8"/><rect x="291.9" y="597.0" width="2.3" height="2.3" fill="#00b0e0"/><rect x="294.2" y="597.0" width="2.3" height="2.3" fill="#0070e0"/><rect x="310.3" y="597.0" width="2.3" height="2.3" fill="#007048"/><rect x="289.6" y="599.3" width="2.3" height="2.3" fill="#007048"/><rect x="291.9" y="599.3" width="2.3" height="2.3" fill="#007048"/><rect x="294.2" y="599.3" width="2.3" height="2.3" fill="#00b0e0"/><rect x="301.1" y="599.3" width="2.3" height="2.3" fill="#00e898"/><rect x="310.3" y="599.3" width="2.3" height="2.3" fill="#00b0e0"/><rect x="289.6" y="601.6" width="2.3" height="2.3" fill="#c8c8c8"/><rect x="294.2" y="601.6" width="2.3" height="2.3" fill="#00b0e0"/><rect x="296.5" y="601.6" width="2.3" height="2.3" fill="#00b0e0"/><rect x="305.7" y="601.6" width="2.3" height="2.3" fill="#0070e0"/><rect x="308.0" y="601.6" width="2.3" height="2.3" fill="#00e898"/><rect x="310.3" y="601.6" width="2.3" height="2.3" fill="#00b0e0"/><rect x="312.6" y="601.6" width="2.3" height="2.3" fill="#007048"/><rect x="294.2" y="603.9" width="2.3" height="2.3" fill="#007048"/><rect x="301.1" y="603.9" width="2.3" height="2.3" fill="#00e898"/><rect x="308.0" y="603.9" width="2.3" height="2.3" fill="#00e898"/><rect x="285.0" y="606.2" width="2.3" height="2.3" fill="#007048"/><rect x="289.6" y="606.2" width="2.3" height="2.3" fill="#007048"/><rect x="296.5" y="606.2" width="2.3" height="2.3" fill="#00e898"/><rect x="298.8" y="606.2" width="2.3" height="2.3" fill="#c8c8c8"/><rect x="303.4" y="606.2" width="2.3" height="2.3" fill="#0070e0"/><rect x="289.6" y="608.5" width="2.3" height="2.3" fill="#00b0e0"/><rect x="296.5" y="608.5" width="2.3" height="2.3" fill="#007048"/><rect x="303.4" y="608.5" width="2.3" height="2.3" fill="#00e898"/><rect x="289.6" y="610.8" width="2.3" height="2.3" fill="#00b0e0"/><rect x="291.9" y="610.8" width="2.3" height="2.3" fill="#00e898"/><rect x="296.5" y="610.8" width="2.3" height="2.3" fill="#0070e0"/><rect x="298.8" y="610.8" width="2.3" height="2.3" fill="#00e898"/><rect x="308.0" y="610.8" width="2.3" height="2.3" fill="#007048"/><rect x="312.6" y="613.1" width="2.3" height="2.3" fill="#00e898"/><rect x="291.9" y="615.4" width="2.3" height="2.3" fill="#0070e0"/><rect x="294.2" y="615.4" width="2.3" height="2.3" fill="#00b0e0"/>
<rect x="319.5" y="603.9" width="2.3" height="2.3" fill="#0070e0"/><rect x="319.5" y="606.2" width="2.3" height="2.3" fill="#00e898"/><rect x="328.7" y="606.2" width="2.3" height="2.3" fill="#00e898"/><rect x="324.1" y="608.5" width="2.3" height="2.3" fill="#00b0e0"/><rect x="333.3" y="608.5" width="2.3" height="2.3" fill="#00b0e0"/><rect x="335.6" y="608.5" width="2.3" height="2.3" fill="#1840e0"/><rect x="314.9" y="610.8" width="2.3" height="2.3" fill="#007048"/><rect x="319.5" y="610.8" width="2.3" height="2.3" fill="#007048"/><rect x="337.9" y="610.8" width="2.3" height="2.3" fill="#0070e0"/><rect x="340.2" y="610.8" width="2.3" height="2.3" fill="#0070e0"/><rect x="317.2" y="613.1" width="2.3" height="2.3" fill="#007048"/><rect x="328.7" y="613.1" width="2.3" height="2.3" fill="#00b0e0"/><rect x="331.0" y="613.1" width="2.3" height="2.3" fill="#00b0e0"/><rect x="333.3" y="613.1" width="2.3" height="2.3" fill="#0070e0"/><rect x="335.6" y="613.1" width="2.3" height="2.3" fill="#1840e0"/><rect x="324.1" y="615.4" width="2.3" height="2.3" fill="#00b0e0"/><rect x="326.4" y="615.4" width="2.3" height="2.3" fill="#0070e0"/><rect x="331.0" y="615.4" width="2.3" height="2.3" fill="#007048"/><rect x="333.3" y="615.4" width="2.3" height="2.3" fill="#0070e0"/><rect x="314.9" y="617.7" width="2.3" height="2.3" fill="#0070e0"/><rect x="319.5" y="617.7" width="2.3" height="2.3" fill="#0070e0"/><rect x="326.4" y="617.7" width="2.3" height="2.3" fill="#0070e0"/><rect x="317.2" y="620.0" width="2.3" height="2.3" fill="#0070e0"/><rect x="326.4" y="620.0" width="2.3" height="2.3" fill="#0070e0"/><rect x="328.7" y="620.0" width="2.3" height="2.3" fill="#00b0e0"/><rect x="333.3" y="620.0" width="2.3" height="2.3" fill="#00e898"/><rect x="319.5" y="622.3" width="2.3" height="2.3" fill="#00b0e0"/><rect x="324.1" y="622.3" width="2.3" height="2.3" fill="#0070e0"/><rect x="328.7" y="622.3" width="2.3" height="2.3" fill="#0070e0"/><rect x="331.0" y="622.3" width="2.3" height="2.3" fill="#00e898"/><rect x="319.5" y="624.6" width="2.3" height="2.3" fill="#0070e0"/><rect x="321.8" y="624.6" width="2.3" height="2.3" fill="#00b0e0"/><rect x="317.2" y="626.9" width="2.3" height="2.3" fill="#0070e0"/><rect x="321.8" y="626.9" width="2.3" height="2.3" fill="#0070e0"/><rect x="326.4" y="626.9" width="2.3" height="2.3" fill="#1840e0"/><rect x="328.7" y="626.9" width="2.3" height="2.3" fill="#1840e0"/><rect x="331.0" y="626.9" width="2.3" height="2.3" fill="#00b0e0"/><rect x="314.9" y="629.2" width="2.3" height="2.3" fill="#00e898"/><rect x="317.2" y="629.2" width="2.3" height="2.3" fill="#1840e0"/><rect x="333.3" y="629.2" width="2.3" height="2.3" fill="#00b0e0"/><rect x="335.6" y="629.2" width="2.3" height="2.3" fill="#1840e0"/><rect x="319.5" y="631.5" width="2.3" height="2.3" fill="#007048"/><rect x="321.8" y="631.5" width="2.3" height="2.3" fill="#00e898"/><rect x="328.7" y="631.5" width="2.3" height="2.3" fill="#00e898"/>
<rect x="319.5" y="631.5" width="2.3" height="2.3" fill="#00b0e0"/><rect x="321.8" y="633.8" width="2.3" height="2.3" fill="#007048"/><rect x="328.7" y="633.8" width="2.3" height="2.3" fill="#00b0e0"/><rect x="324.1" y="636.1" width="2.3" height="2.3" fill="#00b0e0"/><rect x="328.7" y="636.1" width="2.3" height="2.3" fill="#00b0e0"/><rect x="314.9" y="638.4" width="2.3" height="2.3" fill="#00b0e0"/><rect x="319.5" y="638.4" width="2.3" height="2.3" fill="#00e898"/><rect x="331.0" y="638.4" width="2.3" height="2.3" fill="#0070e0"/><rect x="317.2" y="640.7" width="2.3" height="2.3" fill="#00b0e0"/><rect x="331.0" y="640.7" width="2.3" height="2.3" fill="#00b0e0"/><rect x="324.1" y="643.0" width="2.3" height="2.3" fill="#007048"/><rect x="328.7" y="643.0" width="2.3" height="2.3" fill="#0070e0"/><rect x="331.0" y="643.0" width="2.3" height="2.3" fill="#007048"/><rect x="319.5" y="645.3" width="2.3" height="2.3" fill="#00b0e0"/><rect x="324.1" y="645.3" width="2.3" height="2.3" fill="#1840e0"/><rect x="326.4" y="645.3" width="2.3" height="2.3" fill="#00b0e0"/><rect x="328.7" y="647.6" width="2.3" height="2.3" fill="#1840e0"/>
<rect x="310.3" y="640.7" width="2.3" height="2.3" fill="#0070e0"/><rect x="319.5" y="645.3" width="2.3" height="2.3" fill="#00e898"/><rect x="305.7" y="647.6" width="2.3" height="2.3" fill="#00b0e0"/><rect x="310.3" y="647.6" width="2.3" height="2.3" fill="#00b0e0"/><rect x="301.1" y="649.9" width="2.3" height="2.3" fill="#1840e0"/><rect x="303.4" y="649.9" width="2.3" height="2.3" fill="#00b0e0"/><rect x="305.7" y="649.9" width="2.3" height="2.3" fill="#1840e0"/><rect x="308.0" y="649.9" width="2.3" height="2.3" fill="#00e898"/><rect x="310.3" y="649.9" width="2.3" height="2.3" fill="#00b0e0"/><rect x="314.9" y="649.9" width="2.3" height="2.3" fill="#007048"/><rect x="317.2" y="649.9" width="2.3" height="2.3" fill="#00e898"/><rect x="319.5" y="649.9" width="2.3" height="2.3" fill="#00e898"/><rect x="303.4" y="652.2" width="2.3" height="2.3" fill="#00b0e0"/><rect x="305.7" y="652.2" width="2.3" height="2.3" fill="#00e898"/><rect x="319.5" y="652.2" width="2.3" height="2.3" fill="#00b0e0"/><rect x="321.8" y="652.2" width="2.3" height="2.3" fill="#00b0e0"/><rect x="319.5" y="654.5" width="2.3" height="2.3" fill="#1840e0"/><rect x="305.7" y="656.8" width="2.3" height="2.3" fill="#00b0e0"/><rect x="314.9" y="656.8" width="2.3" height="2.3" fill="#0070e0"/><rect x="317.2" y="656.8" width="2.3" height="2.3" fill="#00b0e0"/><rect x="303.4" y="659.1" width="2.3" height="2.3" fill="#0070e0"/><rect x="317.2" y="659.1" width="2.3" height="2.3" fill="#00b0e0"/><rect x="319.5" y="659.1" width="2.3" height="2.3" fill="#00b0e0"/><rect x="312.6" y="661.4" width="2.3" height="2.3" fill="#0070e0"/><rect x="317.2" y="661.4" width="2.3" height="2.3" fill="#0070e0"/><rect x="312.6" y="663.7" width="2.3" height="2.3" fill="#0070e0"/><rect x="314.9" y="663.7" width="2.3" height="2.3" fill="#0070e0"/>
<rect x="259.7" y="652.2" width="2.3" height="2.3" fill="#007048"/><rect x="268.9" y="652.2" width="2.3" height="2.3" fill="#00b0e0"/><rect x="271.2" y="652.2" width="2.3" height="2.3" fill="#00b0e0"/><rect x="275.8" y="652.2" width="2.3" height="2.3" fill="#1840e0"/><rect x="259.7" y="654.5" width="2.3" height="2.3" fill="#0070e0"/><rect x="268.9" y="654.5" width="2.3" height="2.3" fill="#007048"/><rect x="278.1" y="654.5" width="2.3" height="2.3" fill="#0070e0"/><rect x="280.4" y="654.5" width="2.3" height="2.3" fill="#00b0e0"/><rect x="264.3" y="656.8" width="2.3" height="2.3" fill="#007048"/><rect x="282.7" y="656.8" width="2.3" height="2.3" fill="#00b0e0"/><rect x="262.0" y="659.1" width="2.3" height="2.3" fill="#00b0e0"/><rect x="268.9" y="659.1" width="2.3" height="2.3" fill="#0070e0"/><rect x="280.4" y="659.1" width="2.3" height="2.3" fill="#0070e0"/><rect x="287.3" y="659.1" width="2.3" height="2.3" fill="#00b0e0"/><rect x="271.2" y="661.4" width="2.3" height="2.3" fill="#00b0e0"/><rect x="280.4" y="661.4" width="2.3" height="2.3" fill="#1840e0"/><rect x="285.0" y="661.4" width="2.3" height="2.3" fill="#00b0e0"/><rect x="298.8" y="661.4" width="2.3" height="2.3" fill="#00b0e0"/><rect x="255.1" y="663.7" width="2.3" height="2.3" fill="#0070e0"/><rect x="262.0" y="663.7" width="2.3" height="2.3" fill="#00b0e0"/><rect x="275.8" y="663.7" width="2.3" height="2.3" fill="#0070e0"/><rect x="280.4" y="663.7" width="2.3" height="2.3" fill="#00b0e0"/><rect x="282.7" y="663.7" width="2.3" height="2.3" fill="#00b0e0"/><rect x="287.3" y="663.7" width="2.3" height="2.3" fill="#00b0e0"/><rect x="289.6" y="663.7" width="2.3" height="2.3" fill="#00b0e0"/><rect x="291.9" y="663.7" width="2.3" height="2.3" fill="#0070e0"/><rect x="294.2" y="663.7" width="2.3" height="2.3" fill="#0070e0"/><rect x="268.9" y="666.0" width="2.3" height="2.3" fill="#00b0e0"/><rect x="273.5" y="666.0" width="2.3" height="2.3" fill="#00b0e0"/><rect x="278.1" y="666.0" width="2.3" height="2.3" fill="#0070e0"/><rect x="287.3" y="666.0" width="2.3" height="2.3" fill="#00b0e0"/>
<rect x="216.0" y="613.1" width="2.3" height="2.3" fill="#007048"/><rect x="220.6" y="615.4" width="2.3" height="2.3" fill="#00b0e0"/><rect x="216.0" y="617.7" width="2.3" height="2.3" fill="#00b0e0"/><rect x="218.3" y="617.7" width="2.3" height="2.3" fill="#007048"/><rect x="225.2" y="617.7" width="2.3" height="2.3" fill="#00b0e0"/><rect x="213.7" y="620.0" width="2.3" height="2.3" fill="#007048"/><rect x="216.0" y="620.0" width="2.3" height="2.3" fill="#007048"/><rect x="220.6" y="620.0" width="2.3" height="2.3" fill="#00b0e0"/><rect x="227.5" y="620.0" width="2.3" height="2.3" fill="#00b0e0"/><rect x="232.1" y="620.0" width="2.3" height="2.3" fill="#c8c8c8"/><rect x="209.1" y="622.3" width="2.3" height="2.3" fill="#00e898"/><rect x="213.7" y="622.3" width="2.3" height="2.3" fill="#0070e0"/><rect x="216.0" y="622.3" width="2.3" height="2.3" fill="#00e898"/><rect x="216.0" y="624.6" width="2.3" height="2.3" fill="#00e898"/><rect x="218.3" y="624.6" width="2.3" height="2.3" fill="#007048"/><rect x="220.6" y="624.6" width="2.3" height="2.3" fill="#007048"/><rect x="225.2" y="624.6" width="2.3" height="2.3" fill="#00e898"/><rect x="229.8" y="624.6" width="2.3" height="2.3" fill="#00e898"/><rect x="216.0" y="626.9" width="2.3" height="2.3" fill="#00e898"/><rect x="222.9" y="626.9" width="2.3" height="2.3" fill="#c8c8c8"/><rect x="227.5" y="626.9" width="2.3" height="2.3" fill="#00e898"/><rect x="232.1" y="626.9" width="2.3" height="2.3" fill="#0070e0"/><rect x="218.3" y="629.2" width="2.3" height="2.3" fill="#0070e0"/><rect x="222.9" y="629.2" width="2.3" height="2.3" fill="#00b0e0"/><rect x="220.6" y="631.5" width="2.3" height="2.3" fill="#0070e0"/>
<rect x="278.1" y="557.9" width="2.3" height="2.3" fill="#00b0e0"/><rect x="282.7" y="557.9" width="2.3" height="2.3" fill="#007048"/><rect x="287.3" y="557.9" width="2.3" height="2.3" fill="#00e898"/><rect x="268.9" y="560.2" width="2.3" height="2.3" fill="#00b0e0"/><rect x="278.1" y="560.2" width="2.3" height="2.3" fill="#00b0e0"/><rect x="273.5" y="562.5" width="2.3" height="2.3" fill="#00b0e0"/><rect x="285.0" y="562.5" width="2.3" height="2.3" fill="#00b0e0"/><rect x="275.8" y="564.8" width="2.3" height="2.3" fill="#1840e0"/><rect x="282.7" y="564.8" width="2.3" height="2.3" fill="#0070e0"/><rect x="285.0" y="564.8" width="2.3" height="2.3" fill="#00b0e0"/><rect x="291.9" y="564.8" width="2.3" height="2.3" fill="#007048"/><rect x="271.2" y="569.4" width="2.3" height="2.3" fill="#1840e0"/><rect x="285.0" y="569.4" width="2.3" height="2.3" fill="#00b0e0"/><rect x="273.5" y="571.7" width="2.3" height="2.3" fill="#007048"/><rect x="275.8" y="571.7" width="2.3" height="2.3" fill="#0070e0"/><rect x="278.1" y="571.7" width="2.3" height="2.3" fill="#007048"/><rect x="285.0" y="571.7" width="2.3" height="2.3" fill="#1840e0"/><rect x="287.3" y="571.7" width="2.3" height="2.3" fill="#0070e0"/><rect x="275.8" y="574.0" width="2.3" height="2.3" fill="#1840e0"/><rect x="278.1" y="574.0" width="2.3" height="2.3" fill="#1840e0"/><rect x="280.4" y="574.0" width="2.3" height="2.3" fill="#00e898"/><rect x="285.0" y="574.0" width="2.3" height="2.3" fill="#0070e0"/><rect x="287.3" y="574.0" width="2.3" height="2.3" fill="#00b0e0"/><rect x="271.2" y="576.3" width="2.3" height="2.3" fill="#0070e0"/>
<rect x="268.9" y="624.6" width="2.3" height="2.3" fill="#8000ff"/><rect x="285.0" y="624.6" width="2.3" height="2.3" fill="#1840e0"/><rect x="268.9" y="626.9" width="2.3" height="2.3" fill="#6000f0"/><rect x="278.1" y="626.9" width="2.3" height="2.3" fill="#6000f0"/><rect x="280.4" y="626.9" width="2.3" height="2.3" fill="#0070e0"/><rect x="271.2" y="629.2" width="2.3" height="2.3" fill="#6000f0"/><rect x="282.7" y="629.2" width="2.3" height="2.3" fill="#6000f0"/><rect x="257.4" y="631.5" width="2.3" height="2.3" fill="#1840e0"/><rect x="262.0" y="631.5" width="2.3" height="2.3" fill="#1840e0"/><rect x="264.3" y="631.5" width="2.3" height="2.3" fill="#1840e0"/><rect x="273.5" y="631.5" width="2.3" height="2.3" fill="#1840e0"/><rect x="278.1" y="631.5" width="2.3" height="2.3" fill="#6000f0"/><rect x="280.4" y="631.5" width="2.3" height="2.3" fill="#8000ff"/><rect x="285.0" y="631.5" width="2.3" height="2.3" fill="#1840e0"/><rect x="291.9" y="631.5" width="2.3" height="2.3" fill="#6000f0"/><rect x="255.1" y="633.8" width="2.3" height="2.3" fill="#8000ff"/><rect x="259.7" y="633.8" width="2.3" height="2.3" fill="#8000ff"/><rect x="264.3" y="633.8" width="2.3" height="2.3" fill="#6000f0"/><rect x="266.6" y="633.8" width="2.3" height="2.3" fill="#1840e0"/><rect x="273.5" y="633.8" width="2.3" height="2.3" fill="#1840e0"/><rect x="278.1" y="633.8" width="2.3" height="2.3" fill="#8000ff"/><rect x="282.7" y="633.8" width="2.3" height="2.3" fill="#6000f0"/><rect x="262.0" y="636.1" width="2.3" height="2.3" fill="#6000f0"/><rect x="266.6" y="636.1" width="2.3" height="2.3" fill="#6000f0"/><rect x="273.5" y="636.1" width="2.3" height="2.3" fill="#8000ff"/><rect x="287.3" y="636.1" width="2.3" height="2.3" fill="#1840e0"/><rect x="259.7" y="638.4" width="2.3" height="2.3" fill="#1840e0"/><rect x="264.3" y="638.4" width="2.3" height="2.3" fill="#1840e0"/><rect x="266.6" y="638.4" width="2.3" height="2.3" fill="#6000f0"/><rect x="268.9" y="638.4" width="2.3" height="2.3" fill="#1840e0"/><rect x="275.8" y="638.4" width="2.3" height="2.3" fill="#6000f0"/><rect x="285.0" y="638.4" width="2.3" height="2.3" fill="#0070e0"/><rect x="268.9" y="640.7" width="2.3" height="2.3" fill="#0070e0"/><rect x="273.5" y="640.7" width="2.3" height="2.3" fill="#6000f0"/><rect x="282.7" y="640.7" width="2.3" height="2.3" fill="#0070e0"/><rect x="285.0" y="640.7" width="2.3" height="2.3" fill="#8000ff"/><rect x="289.6" y="640.7" width="2.3" height="2.3" fill="#6000f0"/><rect x="291.9" y="640.7" width="2.3" height="2.3" fill="#6000f0"/><rect x="264.3" y="643.0" width="2.3" height="2.3" fill="#8000ff"/><rect x="282.7" y="643.0" width="2.3" height="2.3" fill="#6000f0"/><rect x="285.0" y="643.0" width="2.3" height="2.3" fill="#6000f0"/><rect x="268.9" y="645.3" width="2.3" height="2.3" fill="#6000f0"/><rect x="273.5" y="645.3" width="2.3" height="2.3" fill="#0070e0"/><rect x="285.0" y="645.3" width="2.3" height="2.3" fill="#6000f0"/>
<rect x="326.4" y="643.0" width="2.3" height="2.3" fill="#00b0e0"/><rect x="331.0" y="643.0" width="2.3" height="2.3" fill="#0070e0"/><rect x="333.3" y="643.0" width="2.3" height="2.3" fill="#1840e0"/><rect x="337.9" y="643.0" width="2.3" height="2.3" fill="#00b0e0"/><rect x="335.6" y="645.3" width="2.3" height="2.3" fill="#00b0e0"/><rect x="337.9" y="645.3" width="2.3" height="2.3" fill="#00b0e0"/><rect x="326.4" y="647.6" width="2.3" height="2.3" fill="#00e898"/><rect x="333.3" y="647.6" width="2.3" height="2.3" fill="#00e898"/><rect x="331.0" y="649.9" width="2.3" height="2.3" fill="#0070e0"/><rect x="333.3" y="649.9" width="2.3" height="2.3" fill="#007048"/><rect x="333.3" y="652.2" width="2.3" height="2.3" fill="#007048"/><rect x="335.6" y="652.2" width="2.3" height="2.3" fill="#0070e0"/><rect x="342.5" y="654.5" width="2.3" height="2.3" fill="#00b0e0"/><rect x="344.8" y="654.5" width="2.3" height="2.3" fill="#00b0e0"/>
<rect x="368.0" y="649.0" width="3.5" height="3.5" fill="#00e898"/><rect x="371.5" y="649.0" width="3.5" height="3.5" fill="#00e898"/><rect x="368.0" y="652.5" width="3.5" height="3.5" fill="#007048"/><rect x="371.5" y="652.5" width="3.5" height="3.5" fill="#00e898"/><rect x="375.0" y="652.5" width="3.5" height="3.5" fill="#007048"/><rect x="371.5" y="656.0" width="3.5" height="3.5" fill="#00e898"/>
<rect x="364.5" y="670.0" width="3.5" height="3.5" fill="#00e898"/><rect x="368.0" y="670.0" width="3.5" height="3.5" fill="#00e898"/><rect x="371.5" y="670.0" width="3.5" height="3.5" fill="#00e898"/><rect x="375.0" y="670.0" width="3.5" height="3.5" fill="#007048"/><rect x="361.0" y="673.5" width="3.5" height="3.5" fill="#00e898"/><rect x="364.5" y="673.5" width="3.5" height="3.5" fill="#007048"/><rect x="368.0" y="673.5" width="3.5" height="3.5" fill="#00e898"/><rect x="371.5" y="673.5" width="3.5" height="3.5" fill="#00e898"/>
<g fill="none" stroke="#fff" stroke-width="1" shape-rendering="crispEdges">
<circle cx="273.5" cy="631.5" r="27.5"/>
<circle cx="273.5" cy="631.5" r="55.0"/>
<circle cx="273.5" cy="631.5" r="82.5"/>
<circle cx="273.5" cy="631.5" r="110.0"/>
<circle cx="273.5" cy="631.5" r="137.5"/>
<circle cx="273.5" cy="631.5" r="165.0"/>
<circle cx="273.5" cy="631.5" r="192.5"/>
<circle cx="273.5" cy="631.5" r="220.0"/>
<path d="M55,631.5 H487 M273.5,458 V795 M117.9,475.9 L429.1,787.1 M117.9,787.1 L429.1,475.9"/>
</g>
</g>
<g fill="none" stroke="#ffa000" stroke-width="1.2" shape-rendering="crispEdges"><circle cx="242.5" cy="464.5" r="7"/><circle cx="271.7" cy="616" r="7"/></g>
<text x="231" y="479" font-family="Liberation Sans" font-size="7" font-weight="bold" fill="#ffa000" >wfoe-mdt</text>
<text x="259" y="632.5" font-family="Liberation Sans" font-size="7.5" font-weight="bold" fill="#ffa000" >bc-125-8</text>
<line x1="266" y1="463.5" x2="277" y2="463.5" stroke="#f0e68c" stroke-width="1" />
<line x1="271.5" y1="458" x2="271.5" y2="469" stroke="#f0e68c" stroke-width="1" />
<text x="40" y="463" font-family="Liberation Sans" font-size="6.5" font-weight="normal" fill="#f0e68c" >10</text>
<text x="266" y="807" font-family="Liberation Sans" font-size="6.5" font-weight="normal" fill="#f0e68c" >-125</text>
<line x1="488" y1="458.5" x2="573" y2="458.5" stroke="#a0a0a0" stroke-width="1" />
<line x1="488" y1="639.5" x2="573" y2="639.5" stroke="#a0a0a0" stroke-width="1" />
<line x1="488" y1="820.5" x2="573" y2="820.5" stroke="#a0a0a0" stroke-width="1" />
<text x="489" y="472" font-family="Liberation Sans" font-size="18" font-weight="normal" fill="#fff" >maxdz</text>
<text x="489" y="653" font-family="Liberation Sans" font-size="18" font-weight="normal" fill="#fff" >maxdz</text>
<rect x="490" y="485" width="10" height="8" fill="#f88080" />
<rect x="490" y="493" width="10" height="8" fill="#f8909a" />
<rect x="490" y="501" width="10" height="8" fill="#f8b070" />
<rect x="490" y="509" width="10" height="8" fill="#f8d8b0" />
<rect x="490" y="517" width="10" height="8" fill="#f8d818" />
<rect x="490" y="525" width="10" height="8" fill="#e8b020" />
<rect x="490" y="533" width="10" height="8" fill="#d89030" />
<rect x="490" y="541" width="10" height="8" fill="#c8c8c8" />
<rect x="490" y="549" width="10" height="8" fill="#007048" />
<rect x="490" y="557" width="10" height="8" fill="#00e898" />
<rect x="490" y="565" width="10" height="8" fill="#00b0e0" />
<rect x="490" y="573" width="10" height="8" fill="#0070e0" />
<rect x="490" y="581" width="10" height="8" fill="#1840e0" />
<rect x="490" y="589" width="10" height="8" fill="#4020e0" />
<rect x="490" y="597" width="10" height="8" fill="#6000f0" />
<rect x="490" y="605" width="10" height="8" fill="#8000ff" />
<text x="504" y="492" font-family="Liberation Sans" font-size="17.5" font-weight="normal" fill="#fff" >65.0</text>
<text x="504" y="516" font-family="Liberation Sans" font-size="17.5" font-weight="normal" fill="#fff" >50.0</text>
<text x="504" y="540" font-family="Liberation Sans" font-size="17.5" font-weight="normal" fill="#fff" >35.0</text>
<text x="504" y="564" font-family="Liberation Sans" font-size="17.5" font-weight="normal" fill="#fff" >20.0</text>
<text x="504" y="588" font-family="Liberation Sans" font-size="17.5" font-weight="normal" fill="#fff" >5.0</text>
<text x="504.5" y="612" font-family="Liberation Sans" font-size="17.5" font-weight="normal" fill="#fff" >−</text>
<text x="516" y="612" font-family="Liberation Sans" font-size="17.5" font-weight="normal" fill="#fff" >10.0</text>
<rect x="490" y="666" width="10" height="8" fill="#f88080" />
<rect x="490" y="674" width="10" height="8" fill="#f8909a" />
<rect x="490" y="682" width="10" height="8" fill="#f8b070" />
<rect x="490" y="690" width="10" height="8" fill="#f8d8b0" />
<rect x="490" y="698" width="10" height="8" fill="#f8d818" />
<rect x="490" y="706" width="10" height="8" fill="#e8b020" />
<rect x="490" y="714" width="10" height="8" fill="#d89030" />
<rect x="490" y="722" width="10" height="8" fill="#c8c8c8" />
<rect x="490" y="730" width="10" height="8" fill="#007048" />
<rect x="490" y="738" width="10" height="8" fill="#00e898" />
<rect x="490" y="746" width="10" height="8" fill="#00b0e0" />
<rect x="490" y="754" width="10" height="8" fill="#0070e0" />
<rect x="490" y="762" width="10" height="8" fill="#1840e0" />
<rect x="490" y="770" width="10" height="8" fill="#4020e0" />
<rect x="490" y="778" width="10" height="8" fill="#6000f0" />
<rect x="490" y="786" width="10" height="8" fill="#8000ff" />
<text x="504" y="673" font-family="Liberation Sans" font-size="17.5" font-weight="normal" fill="#fff" >65.0</text>
<text x="504" y="697" font-family="Liberation Sans" font-size="17.5" font-weight="normal" fill="#fff" >50.0</text>
<text x="504" y="721" font-family="Liberation Sans" font-size="17.5" font-weight="normal" fill="#fff" >35.0</text>
<text x="504" y="745" font-family="Liberation Sans" font-size="17.5" font-weight="normal" fill="#fff" >20.0</text>
<text x="504" y="769" font-family="Liberation Sans" font-size="17.5" font-weight="normal" fill="#fff" >5.0</text>
<text x="504.5" y="793" font-family="Liberation Sans" font-size="17.5" font-weight="normal" fill="#fff" >−</text>
<text x="516" y="793" font-family="Liberation Sans" font-size="17.5" font-weight="normal" fill="#fff" >10.0</text>
<text x="381" y="860" font-family="Liberation Sans" font-size="23" font-weight="normal" fill="#fff" letter-spacing="0.4">Alt: 0.50 km MSL</text>
<rect x="10" y="821" width="46" height="48" fill="#a8a8a8" />
<rect x="11" y="822" width="44" height="46" fill="#1c1a70" />
<g transform="translate(10,821)" fill="none" stroke="#ffff00" stroke-width="2.2" shape-rendering="geometricPrecision"><path d="M7,13 C13,6 20,9 26,11 C32,13 36,11 38,9"/><path d="M38,9 C30,17 20,27 8,40"/><path d="M8,40 C15,34 22,37 28,40 C33,42 37,40 39,37"/></g>
<rect x="57" y="821" width="46" height="48" fill="#a8a8a8" />
<rect x="58" y="822" width="44" height="46" fill="#7a7a7a" />
<g transform="translate(57,821)"><text x="3" y="15" font-family="Liberation Mono" font-weight="bold" font-size="13" fill="#e0e0e0" letter-spacing="-1.2">GOES</text><path d="M3,18 C18,20 26,30 24,44 L3,44 Z" fill="url(#chkW)"/><path d="M15,26 L19,22 L24,30 L18,34 Z M4,38 L12,36 L12,44 L4,44Z" fill="#e0e0e0"/><path d="M18,28 L42,18 M22,34 L42,20" stroke="#e0e0e0" stroke-width="1" stroke-dasharray="1 2" fill="none"/><rect x="39" y="16" width="4" height="4" fill="#e0e0e0" transform="rotate(45 41 18)"/><text x="26" y="44" font-family="Liberation Sans" font-size="9.5" fill="#e0e0e0">.IR</text></g>
<rect x="104" y="821" width="46" height="48" fill="#a8a8a8" />
<rect x="105" y="822" width="44" height="46" fill="#1c1a70" />
<g transform="translate(104,821)" fill="#ffff00"><path d="M5,9 C8,19 16,28 28,31" fill="none" stroke="#ffff00" stroke-width="2"/><rect x="13.5" y="20.5" width="5" height="5" fill="none" stroke="#ffff00" stroke-width="1"/><path d="M11,26 L15,26 L16,35 L17,40 L9,40 L10,35 Z"/><text x="40" y="17" font-family="Liberation Sans" font-size="10" text-anchor="middle">S</text><text x="40" y="29" font-family="Liberation Sans" font-size="10" text-anchor="middle">U</text><text x="40" y="41" font-family="Liberation Sans" font-size="10" text-anchor="middle">R</text></g>
<rect x="151" y="821" width="46" height="48" fill="#a8a8a8" />
<rect x="152" y="822" width="44" height="46" fill="#1c1a70" />
<g transform="translate(151,821)"><line x1="5.5" y1="5" x2="5.5" y2="42" stroke="#ffff00" stroke-width="1"/><line x1="5" y1="5.5" x2="42" y2="5.5" stroke="#ffff00" stroke-width="1"/><line x1="14.5" y1="5" x2="14.5" y2="42" stroke="#ffff00" stroke-width="1"/><line x1="5" y1="14.75" x2="42" y2="14.75" stroke="#ffff00" stroke-width="1"/><line x1="23.5" y1="5" x2="23.5" y2="42" stroke="#ffff00" stroke-width="1"/><line x1="5" y1="24.0" x2="42" y2="24.0" stroke="#ffff00" stroke-width="1"/><line x1="32.5" y1="5" x2="32.5" y2="42" stroke="#ffff00" stroke-width="1"/><line x1="5" y1="33.25" x2="42" y2="33.25" stroke="#ffff00" stroke-width="1"/><line x1="41.5" y1="5" x2="41.5" y2="42" stroke="#ffff00" stroke-width="1"/><line x1="5" y1="42.5" x2="42" y2="42.5" stroke="#ffff00" stroke-width="1"/><path d="M13,9 C16,20 24,28 34,32" fill="none" stroke="#ffff00" stroke-width="2"/><path d="M18,26 L21,26 L22,36 L23,41 L15,41 L16,36 Z" fill="#ffff00"/></g>
<rect x="198" y="821" width="14" height="48" fill="#a8a8a8" />
<rect x="199" y="822" width="12" height="46" fill="#1c1a70" />
<g transform="translate(198,821)" font-family="Liberation Sans" font-size="6.5" fill="#ffff00" text-anchor="middle"><text x="7" y="11.0">B</text><text x="7" y="17.3">O</text><text x="7" y="23.6">U</text><text x="7" y="29.9">N</text><text x="7" y="36.2">D</text><text x="7" y="42.5">S</text></g>
<rect x="213" y="845" width="22" height="24" fill="#a8a8a8" />
<rect x="214" y="846" width="20" height="22" fill="#1c1a70" />
<g transform="translate(213,845)" stroke="#ffff00" stroke-width="1"><line x1="4.5" y1="5" x2="4.5" y2="19"/><line x1="4" y1="5.5" x2="18" y2="5.5"/><line x1="8.8" y1="5" x2="8.8" y2="19"/><line x1="4" y1="10.0" x2="18" y2="10.0"/><line x1="13.1" y1="5" x2="13.1" y2="19"/><line x1="4" y1="14.5" x2="18" y2="14.5"/><line x1="17.4" y1="5" x2="17.4" y2="19"/><line x1="4" y1="19.0" x2="18" y2="19.0"/></g>
<rect x="236" y="821" width="21" height="48" fill="#a8a8a8" />
<rect x="237" y="822" width="19" height="46" fill="#1c1a70" />
<g transform="translate(236,821)" fill="#ffff00"><path d="M3,5 L8,4 L9,8 L7,11 L5,15 L4,11 Z M11,5 L17,4 L16,8 L13,10 L15,14 L12,15 L11,10 Z"/><text x="10.5" y="25" font-family="Liberation Sans" font-size="8.5" text-anchor="middle">M</text><text x="10.5" y="34" font-family="Liberation Sans" font-size="8.5" text-anchor="middle">A</text><text x="10.5" y="43" font-family="Liberation Sans" font-size="8.5" text-anchor="middle">P</text></g>
<rect x="258" y="821" width="21" height="48" fill="#a8a8a8" />
<rect x="259" y="822" width="19" height="46" fill="#1c1a70" />
<g transform="translate(268.5,845)" fill="none" stroke="#ffff00" stroke-width="1" shape-rendering="geometricPrecision"><circle r="8"/><circle r="4"/><path d="M-8,0 H8 M0,-8 V8 M-6,-6 L6,6 M-6,6 L6,-6"/></g>
<rect x="280" y="845" width="22" height="24" fill="#a8a8a8" />
<rect x="281" y="846" width="20" height="22" fill="#1c1a70" />
<circle cx="291" cy="857.5" r="7" fill="none" stroke="#ffff00" stroke-width="1" shape-rendering="geometricPrecision"/>
<rect x="303" y="821" width="46" height="48" fill="#a8a8a8" />
<rect x="304" y="822" width="44" height="46" fill="#7a7a7a" />
<g transform="translate(303,821)" fill="none" stroke="#e8e8e8" stroke-width="1.2"><path d="M4,30 L37,30 L33,39 L7,39 Z"/><path d="M8,30 L8,21 L12,21 L14,30"/><circle cx="24" cy="22" r="3"/><path d="M24,25 V30 M37,10 V30"/></g><path d="M306,862 l4,-2 l4,2 l4,-2 l4,2 l4,-2 l4,2 l4,-2 l4,2 l4,-2 l4,2 V867 H306 Z" fill="#e8e8e8"/>
</svg></body></html>
